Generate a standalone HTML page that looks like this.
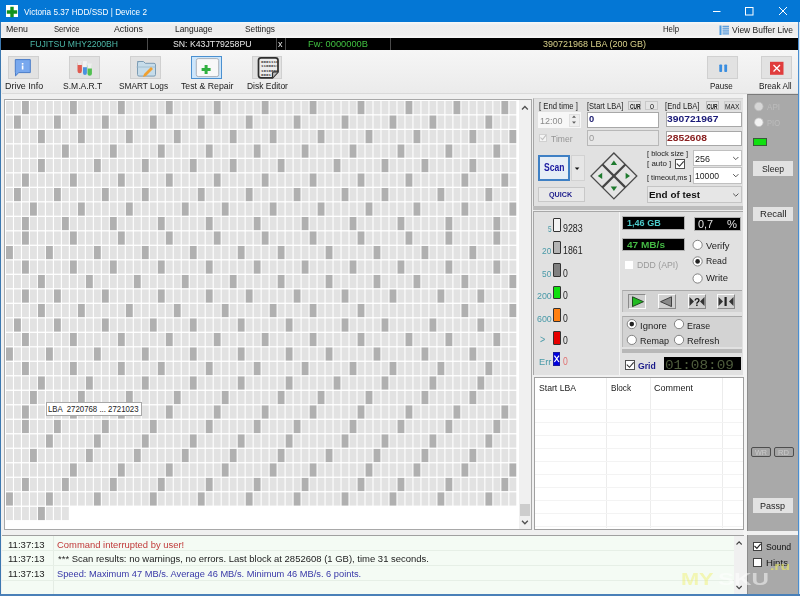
<!DOCTYPE html>
<html><head><meta charset="utf-8"><style>
html,body{margin:0;padding:0;}
body{width:800px;height:596px;overflow:hidden;position:relative;background:#f0f0f0;font-family:"Liberation Sans",sans-serif;}
div{box-sizing:border-box;}
#wrap{position:absolute;left:0;top:0;width:800px;height:596px;overflow:hidden;filter:blur(0.4px);}
</style></head><body><div id="wrap">
<div style="position:absolute;left:0px;top:0px;width:800px;height:22px;background:#0477d5"></div><div style="position:absolute;left:0px;top:22px;width:1.2px;height:574px;background:#3c78b0"></div><div style="position:absolute;left:797.8px;top:22px;width:1px;height:574px;background:#4a8ed0"></div><div style="position:absolute;left:798.8px;top:22px;width:1.2px;height:574px;background:#d4e6f4"></div><div style="position:absolute;left:0px;top:593.8px;width:800px;height:2.2px;background:#4a80b8"></div><svg style="position:absolute;left:0;top:0" width="800" height="22"><rect x="6" y="5" width="12" height="12" fill="#fff"/><path d="M10.3 6.8h3.4v3.5h3.5v3.4h-3.5v3.5h-3.4v-3.5h-3.5v-3.4h3.5z" fill="#12921e"/><line x1="713" y1="11.5" x2="720.5" y2="11.5" stroke="#fff" stroke-width="1"/><rect x="745.5" y="7.5" width="7.5" height="7.5" fill="none" stroke="#fff" stroke-width="1"/><path d="M779 7L787 15M787 7L779 15" stroke="#fff" stroke-width="1"/></svg><div style="position:absolute;left:1.2px;top:22px;width:796.6px;height:15.8px;background:linear-gradient(#f4f8fa,#ededed 20%,#eeeeee 80%,#f8f8f8)"></div><svg style="position:absolute;left:719px;top:25px" width="12" height="11"><rect x="0.5" y="0.5" width="2" height="9.5" fill="#4a9ae0"/><rect x="3.5" y="0.8" width="6.5" height="1" fill="#3a8ad8"/><rect x="3.5" y="2.7" width="6.5" height="1" fill="#3a8ad8"/><rect x="3.5" y="4.6" width="6.5" height="1" fill="#3a8ad8"/><rect x="3.5" y="6.499999999999999" width="6.5" height="1" fill="#3a8ad8"/><rect x="3.5" y="8.4" width="6.5" height="1" fill="#3a8ad8"/></svg><div style="position:absolute;left:1.2px;top:37.8px;width:796.6px;height:11.8px;background:#000"></div><div style="position:absolute;left:146.5px;top:37.8px;width:1.2px;height:11.8px;background:#4a4a4a"></div><div style="position:absolute;left:275.5px;top:37.8px;width:1.2px;height:11.8px;background:#4a4a4a"></div><div style="position:absolute;left:285.0px;top:37.8px;width:1.2px;height:11.8px;background:#4a4a4a"></div><div style="position:absolute;left:389.5px;top:37.8px;width:1.2px;height:11.8px;background:#4a4a4a"></div><div style="position:absolute;left:1.2px;top:49.6px;width:796.6px;height:43.4px;background:linear-gradient(#f6f6f6,#ebebeb)"></div><div style="position:absolute;left:1.6px;top:92.8px;width:796.4px;height:1px;background:#dadada"></div><div style="position:absolute;left:8.2px;top:56.2px;width:30.8px;height:23.3px;background:#e2e2e2;border:1px solid #d0d0d0"></div><div style="position:absolute;left:69px;top:56.2px;width:30.700000000000003px;height:23.3px;background:#e2e2e2;border:1px solid #d0d0d0"></div><div style="position:absolute;left:130.2px;top:56.2px;width:30.80000000000001px;height:23.3px;background:#e2e2e2;border:1px solid #d0d0d0"></div><div style="position:absolute;left:251.7px;top:56.2px;width:30.80000000000001px;height:23.3px;background:#e2e2e2;border:1px solid #d0d0d0"></div><div style="position:absolute;left:707px;top:56.2px;width:31px;height:23.3px;background:#e2e2e2;border:1px solid #d0d0d0"></div><div style="position:absolute;left:761px;top:56.2px;width:30.700000000000045px;height:23.3px;background:#e2e2e2;border:1px solid #d0d0d0"></div><div style="position:absolute;left:191px;top:56.2px;width:30.7px;height:23.3px;background:#cde6fb;border:1px solid #4a90d0"></div><svg style="position:absolute;left:0;top:50px" width="800" height="40"><path d="M15.3 9.6h15v13h-11.5l-3.3 3.3v-3.3h-0.2z" fill="#78a8ee" stroke="#4a7cc8" stroke-width="1"/><rect x="21.8" y="13" width="1.6" height="1.6" fill="#fff"/><rect x="21.8" y="15.5" width="1.6" height="4" fill="#fff"/><rect x="77.5" y="11.4" width="4.4" height="11.8" rx="2.2" fill="#e05a50"/><rect x="83" y="12.6" width="3.9" height="12.4" rx="1.95" fill="#4a92e0"/><rect x="87.5" y="13.9" width="4.4" height="11.8" rx="2.2" fill="#50c050"/><rect x="77.5" y="11" width="4.4" height="4" fill="#e8e8e8"/><rect x="83" y="11.2" width="3.9" height="6" fill="#f2f2f2"/><rect x="87.5" y="13.5" width="4.4" height="5" fill="#eeeeee"/><path d="M137.5 11.5h6l1.8 1.8h8.7a1.5 1.5 0 0 1 1.5 1.5v9.8a1.5 1.5 0 0 1-1.5 1.5h-15a1.5 1.5 0 0 1-1.5-1.5v-11.6a1.5 1.5 0 0 1 1.5-1.5z" fill="#c6dcea" stroke="#7c9cb4" stroke-width="1"/><path d="M136.5 17h19" stroke="#9ab8cc" stroke-width="0.8"/><path d="M144 24l7-7 2 2-7 7-3 1z" fill="#f0a030"/><rect x="196.3" y="8.6" width="22.4" height="18" rx="2" fill="#f8f8f8" stroke="#9aa0a8" stroke-width="0.8"/><path d="M204.6 15h3v3h3v3h-3v3h-3v-3h-3v-3h3z" fill="#30b040"/><path d="M261 7.8h14.5a2.5 2.5 0 0 1 2.5 2.5v11.5l-5.5 6h-11.5a2.5 2.5 0 0 1-2.5-2.5v-15a2.5 2.5 0 0 1 2.5-2.5z" fill="#ececec" stroke="#2e2e2e" stroke-width="1.7"/><path d="M272.5 27.8v-4.5a1.5 1.5 0 0 1 1.5-1.5h4" fill="#bbb" stroke="#2e2e2e" stroke-width="1.2"/><g fill="#3a3a3a" font-family="Liberation Mono" font-size="4.2" font-weight="bold"><text x="261" y="13.2">0001110</text><text x="261" y="17.4">1100011</text><text x="261" y="21.6">1010000</text><text x="261" y="25.8">0001</text></g><rect x="719.3" y="14.5" width="2.8" height="7.5" rx="0.8" fill="#3a8ee0"/><rect x="724.3" y="14.5" width="2.8" height="7.5" rx="0.8" fill="#3a8ee0"/><rect x="770" y="11.8" width="13.5" height="13" fill="#e03c3c"/><path d="M773.5 15l6.5 6.5M780 15l-6.5 6.5" stroke="#fff" stroke-width="1.3"/></svg><div style="position:absolute;left:4px;top:98.5px;width:528.3px;height:431.3px;background:#fff;border:1px solid #a8a8a8"></div><svg style="position:absolute;left:0;top:0" width="800" height="596"><rect x="6.00" y="101.00" width="6.9" height="13.2" fill="#e2e2e2"/><rect x="13.99" y="101.00" width="6.9" height="13.2" fill="#e2e2e2"/><rect x="21.98" y="101.00" width="6.9" height="13.2" fill="#b0b0b0"/><rect x="29.97" y="101.00" width="6.9" height="13.2" fill="#e2e2e2"/><rect x="37.96" y="101.00" width="6.9" height="13.2" fill="#e2e2e2"/><rect x="45.95" y="101.00" width="6.9" height="13.2" fill="#e2e2e2"/><rect x="53.94" y="101.00" width="6.9" height="13.2" fill="#e2e2e2"/><rect x="61.93" y="101.00" width="6.9" height="13.2" fill="#e2e2e2"/><rect x="69.92" y="101.00" width="6.9" height="13.2" fill="#b0b0b0"/><rect x="77.91" y="101.00" width="6.9" height="13.2" fill="#e2e2e2"/><rect x="85.90" y="101.00" width="6.9" height="13.2" fill="#e2e2e2"/><rect x="93.89" y="101.00" width="6.9" height="13.2" fill="#e2e2e2"/><rect x="101.88" y="101.00" width="6.9" height="13.2" fill="#e2e2e2"/><rect x="109.87" y="101.00" width="6.9" height="13.2" fill="#e2e2e2"/><rect x="117.86" y="101.00" width="6.9" height="13.2" fill="#b0b0b0"/><rect x="125.85" y="101.00" width="6.9" height="13.2" fill="#e2e2e2"/><rect x="133.84" y="101.00" width="6.9" height="13.2" fill="#e2e2e2"/><rect x="141.83" y="101.00" width="6.9" height="13.2" fill="#e2e2e2"/><rect x="149.82" y="101.00" width="6.9" height="13.2" fill="#e2e2e2"/><rect x="157.81" y="101.00" width="6.9" height="13.2" fill="#e2e2e2"/><rect x="165.80" y="101.00" width="6.9" height="13.2" fill="#b0b0b0"/><rect x="173.79" y="101.00" width="6.9" height="13.2" fill="#e2e2e2"/><rect x="181.78" y="101.00" width="6.9" height="13.2" fill="#e2e2e2"/><rect x="189.77" y="101.00" width="6.9" height="13.2" fill="#e2e2e2"/><rect x="197.76" y="101.00" width="6.9" height="13.2" fill="#e2e2e2"/><rect x="205.75" y="101.00" width="6.9" height="13.2" fill="#e2e2e2"/><rect x="213.74" y="101.00" width="6.9" height="13.2" fill="#b0b0b0"/><rect x="221.73" y="101.00" width="6.9" height="13.2" fill="#e2e2e2"/><rect x="229.72" y="101.00" width="6.9" height="13.2" fill="#e2e2e2"/><rect x="237.71" y="101.00" width="6.9" height="13.2" fill="#e2e2e2"/><rect x="245.70" y="101.00" width="6.9" height="13.2" fill="#e2e2e2"/><rect x="253.69" y="101.00" width="6.9" height="13.2" fill="#e2e2e2"/><rect x="261.68" y="101.00" width="6.9" height="13.2" fill="#b0b0b0"/><rect x="269.67" y="101.00" width="6.9" height="13.2" fill="#e2e2e2"/><rect x="277.66" y="101.00" width="6.9" height="13.2" fill="#e2e2e2"/><rect x="285.65" y="101.00" width="6.9" height="13.2" fill="#e2e2e2"/><rect x="293.64" y="101.00" width="6.9" height="13.2" fill="#e2e2e2"/><rect x="301.63" y="101.00" width="6.9" height="13.2" fill="#e2e2e2"/><rect x="309.62" y="101.00" width="6.9" height="13.2" fill="#b0b0b0"/><rect x="317.61" y="101.00" width="6.9" height="13.2" fill="#e2e2e2"/><rect x="325.60" y="101.00" width="6.9" height="13.2" fill="#e2e2e2"/><rect x="333.59" y="101.00" width="6.9" height="13.2" fill="#e2e2e2"/><rect x="341.58" y="101.00" width="6.9" height="13.2" fill="#e2e2e2"/><rect x="349.57" y="101.00" width="6.9" height="13.2" fill="#e2e2e2"/><rect x="357.56" y="101.00" width="6.9" height="13.2" fill="#b0b0b0"/><rect x="365.55" y="101.00" width="6.9" height="13.2" fill="#e2e2e2"/><rect x="373.54" y="101.00" width="6.9" height="13.2" fill="#e2e2e2"/><rect x="381.53" y="101.00" width="6.9" height="13.2" fill="#e2e2e2"/><rect x="389.52" y="101.00" width="6.9" height="13.2" fill="#e2e2e2"/><rect x="397.51" y="101.00" width="6.9" height="13.2" fill="#e2e2e2"/><rect x="405.50" y="101.00" width="6.9" height="13.2" fill="#b0b0b0"/><rect x="413.49" y="101.00" width="6.9" height="13.2" fill="#e2e2e2"/><rect x="421.48" y="101.00" width="6.9" height="13.2" fill="#e2e2e2"/><rect x="429.47" y="101.00" width="6.9" height="13.2" fill="#e2e2e2"/><rect x="437.46" y="101.00" width="6.9" height="13.2" fill="#e2e2e2"/><rect x="445.45" y="101.00" width="6.9" height="13.2" fill="#e2e2e2"/><rect x="453.44" y="101.00" width="6.9" height="13.2" fill="#b0b0b0"/><rect x="461.43" y="101.00" width="6.9" height="13.2" fill="#e2e2e2"/><rect x="469.42" y="101.00" width="6.9" height="13.2" fill="#e2e2e2"/><rect x="477.41" y="101.00" width="6.9" height="13.2" fill="#e2e2e2"/><rect x="485.40" y="101.00" width="6.9" height="13.2" fill="#e2e2e2"/><rect x="493.39" y="101.00" width="6.9" height="13.2" fill="#e2e2e2"/><rect x="501.38" y="101.00" width="6.9" height="13.2" fill="#b0b0b0"/><rect x="509.37" y="101.00" width="6.9" height="13.2" fill="#e2e2e2"/><rect x="6.00" y="115.50" width="6.9" height="13.2" fill="#e2e2e2"/><rect x="13.99" y="115.50" width="6.9" height="13.2" fill="#b0b0b0"/><rect x="21.98" y="115.50" width="6.9" height="13.2" fill="#e2e2e2"/><rect x="29.97" y="115.50" width="6.9" height="13.2" fill="#e2e2e2"/><rect x="37.96" y="115.50" width="6.9" height="13.2" fill="#e2e2e2"/><rect x="45.95" y="115.50" width="6.9" height="13.2" fill="#e2e2e2"/><rect x="53.94" y="115.50" width="6.9" height="13.2" fill="#b0b0b0"/><rect x="61.93" y="115.50" width="6.9" height="13.2" fill="#e2e2e2"/><rect x="69.92" y="115.50" width="6.9" height="13.2" fill="#e2e2e2"/><rect x="77.91" y="115.50" width="6.9" height="13.2" fill="#e2e2e2"/><rect x="85.90" y="115.50" width="6.9" height="13.2" fill="#e2e2e2"/><rect x="93.89" y="115.50" width="6.9" height="13.2" fill="#e2e2e2"/><rect x="101.88" y="115.50" width="6.9" height="13.2" fill="#b0b0b0"/><rect x="109.87" y="115.50" width="6.9" height="13.2" fill="#e2e2e2"/><rect x="117.86" y="115.50" width="6.9" height="13.2" fill="#e2e2e2"/><rect x="125.85" y="115.50" width="6.9" height="13.2" fill="#e2e2e2"/><rect x="133.84" y="115.50" width="6.9" height="13.2" fill="#e2e2e2"/><rect x="141.83" y="115.50" width="6.9" height="13.2" fill="#e2e2e2"/><rect x="149.82" y="115.50" width="6.9" height="13.2" fill="#b0b0b0"/><rect x="157.81" y="115.50" width="6.9" height="13.2" fill="#e2e2e2"/><rect x="165.80" y="115.50" width="6.9" height="13.2" fill="#e2e2e2"/><rect x="173.79" y="115.50" width="6.9" height="13.2" fill="#e2e2e2"/><rect x="181.78" y="115.50" width="6.9" height="13.2" fill="#e2e2e2"/><rect x="189.77" y="115.50" width="6.9" height="13.2" fill="#e2e2e2"/><rect x="197.76" y="115.50" width="6.9" height="13.2" fill="#b0b0b0"/><rect x="205.75" y="115.50" width="6.9" height="13.2" fill="#e2e2e2"/><rect x="213.74" y="115.50" width="6.9" height="13.2" fill="#e2e2e2"/><rect x="221.73" y="115.50" width="6.9" height="13.2" fill="#e2e2e2"/><rect x="229.72" y="115.50" width="6.9" height="13.2" fill="#e2e2e2"/><rect x="237.71" y="115.50" width="6.9" height="13.2" fill="#e2e2e2"/><rect x="245.70" y="115.50" width="6.9" height="13.2" fill="#b0b0b0"/><rect x="253.69" y="115.50" width="6.9" height="13.2" fill="#e2e2e2"/><rect x="261.68" y="115.50" width="6.9" height="13.2" fill="#e2e2e2"/><rect x="269.67" y="115.50" width="6.9" height="13.2" fill="#e2e2e2"/><rect x="277.66" y="115.50" width="6.9" height="13.2" fill="#e2e2e2"/><rect x="285.65" y="115.50" width="6.9" height="13.2" fill="#e2e2e2"/><rect x="293.64" y="115.50" width="6.9" height="13.2" fill="#b0b0b0"/><rect x="301.63" y="115.50" width="6.9" height="13.2" fill="#e2e2e2"/><rect x="309.62" y="115.50" width="6.9" height="13.2" fill="#e2e2e2"/><rect x="317.61" y="115.50" width="6.9" height="13.2" fill="#e2e2e2"/><rect x="325.60" y="115.50" width="6.9" height="13.2" fill="#e2e2e2"/><rect x="333.59" y="115.50" width="6.9" height="13.2" fill="#e2e2e2"/><rect x="341.58" y="115.50" width="6.9" height="13.2" fill="#b0b0b0"/><rect x="349.57" y="115.50" width="6.9" height="13.2" fill="#e2e2e2"/><rect x="357.56" y="115.50" width="6.9" height="13.2" fill="#e2e2e2"/><rect x="365.55" y="115.50" width="6.9" height="13.2" fill="#e2e2e2"/><rect x="373.54" y="115.50" width="6.9" height="13.2" fill="#e2e2e2"/><rect x="381.53" y="115.50" width="6.9" height="13.2" fill="#e2e2e2"/><rect x="389.52" y="115.50" width="6.9" height="13.2" fill="#b0b0b0"/><rect x="397.51" y="115.50" width="6.9" height="13.2" fill="#e2e2e2"/><rect x="405.50" y="115.50" width="6.9" height="13.2" fill="#e2e2e2"/><rect x="413.49" y="115.50" width="6.9" height="13.2" fill="#e2e2e2"/><rect x="421.48" y="115.50" width="6.9" height="13.2" fill="#e2e2e2"/><rect x="429.47" y="115.50" width="6.9" height="13.2" fill="#b0b0b0"/><rect x="437.46" y="115.50" width="6.9" height="13.2" fill="#e2e2e2"/><rect x="445.45" y="115.50" width="6.9" height="13.2" fill="#e2e2e2"/><rect x="453.44" y="115.50" width="6.9" height="13.2" fill="#e2e2e2"/><rect x="461.43" y="115.50" width="6.9" height="13.2" fill="#e2e2e2"/><rect x="469.42" y="115.50" width="6.9" height="13.2" fill="#e2e2e2"/><rect x="477.41" y="115.50" width="6.9" height="13.2" fill="#e2e2e2"/><rect x="485.40" y="115.50" width="6.9" height="13.2" fill="#b0b0b0"/><rect x="493.39" y="115.50" width="6.9" height="13.2" fill="#e2e2e2"/><rect x="501.38" y="115.50" width="6.9" height="13.2" fill="#e2e2e2"/><rect x="509.37" y="115.50" width="6.9" height="13.2" fill="#e2e2e2"/><rect x="6.00" y="129.99" width="6.9" height="13.2" fill="#e2e2e2"/><rect x="13.99" y="129.99" width="6.9" height="13.2" fill="#e2e2e2"/><rect x="21.98" y="129.99" width="6.9" height="13.2" fill="#e2e2e2"/><rect x="29.97" y="129.99" width="6.9" height="13.2" fill="#e2e2e2"/><rect x="37.96" y="129.99" width="6.9" height="13.2" fill="#b0b0b0"/><rect x="45.95" y="129.99" width="6.9" height="13.2" fill="#e2e2e2"/><rect x="53.94" y="129.99" width="6.9" height="13.2" fill="#e2e2e2"/><rect x="61.93" y="129.99" width="6.9" height="13.2" fill="#e2e2e2"/><rect x="69.92" y="129.99" width="6.9" height="13.2" fill="#e2e2e2"/><rect x="77.91" y="129.99" width="6.9" height="13.2" fill="#b0b0b0"/><rect x="85.90" y="129.99" width="6.9" height="13.2" fill="#e2e2e2"/><rect x="93.89" y="129.99" width="6.9" height="13.2" fill="#e2e2e2"/><rect x="101.88" y="129.99" width="6.9" height="13.2" fill="#e2e2e2"/><rect x="109.87" y="129.99" width="6.9" height="13.2" fill="#e2e2e2"/><rect x="117.86" y="129.99" width="6.9" height="13.2" fill="#e2e2e2"/><rect x="125.85" y="129.99" width="6.9" height="13.2" fill="#b0b0b0"/><rect x="133.84" y="129.99" width="6.9" height="13.2" fill="#e2e2e2"/><rect x="141.83" y="129.99" width="6.9" height="13.2" fill="#e2e2e2"/><rect x="149.82" y="129.99" width="6.9" height="13.2" fill="#e2e2e2"/><rect x="157.81" y="129.99" width="6.9" height="13.2" fill="#e2e2e2"/><rect x="165.80" y="129.99" width="6.9" height="13.2" fill="#e2e2e2"/><rect x="173.79" y="129.99" width="6.9" height="13.2" fill="#b0b0b0"/><rect x="181.78" y="129.99" width="6.9" height="13.2" fill="#e2e2e2"/><rect x="189.77" y="129.99" width="6.9" height="13.2" fill="#e2e2e2"/><rect x="197.76" y="129.99" width="6.9" height="13.2" fill="#e2e2e2"/><rect x="205.75" y="129.99" width="6.9" height="13.2" fill="#e2e2e2"/><rect x="213.74" y="129.99" width="6.9" height="13.2" fill="#e2e2e2"/><rect x="221.73" y="129.99" width="6.9" height="13.2" fill="#e2e2e2"/><rect x="229.72" y="129.99" width="6.9" height="13.2" fill="#b0b0b0"/><rect x="237.71" y="129.99" width="6.9" height="13.2" fill="#e2e2e2"/><rect x="245.70" y="129.99" width="6.9" height="13.2" fill="#e2e2e2"/><rect x="253.69" y="129.99" width="6.9" height="13.2" fill="#e2e2e2"/><rect x="261.68" y="129.99" width="6.9" height="13.2" fill="#e2e2e2"/><rect x="269.67" y="129.99" width="6.9" height="13.2" fill="#b0b0b0"/><rect x="277.66" y="129.99" width="6.9" height="13.2" fill="#e2e2e2"/><rect x="285.65" y="129.99" width="6.9" height="13.2" fill="#e2e2e2"/><rect x="293.64" y="129.99" width="6.9" height="13.2" fill="#e2e2e2"/><rect x="301.63" y="129.99" width="6.9" height="13.2" fill="#e2e2e2"/><rect x="309.62" y="129.99" width="6.9" height="13.2" fill="#e2e2e2"/><rect x="317.61" y="129.99" width="6.9" height="13.2" fill="#b0b0b0"/><rect x="325.60" y="129.99" width="6.9" height="13.2" fill="#e2e2e2"/><rect x="333.59" y="129.99" width="6.9" height="13.2" fill="#e2e2e2"/><rect x="341.58" y="129.99" width="6.9" height="13.2" fill="#e2e2e2"/><rect x="349.57" y="129.99" width="6.9" height="13.2" fill="#e2e2e2"/><rect x="357.56" y="129.99" width="6.9" height="13.2" fill="#e2e2e2"/><rect x="365.55" y="129.99" width="6.9" height="13.2" fill="#b0b0b0"/><rect x="373.54" y="129.99" width="6.9" height="13.2" fill="#e2e2e2"/><rect x="381.53" y="129.99" width="6.9" height="13.2" fill="#e2e2e2"/><rect x="389.52" y="129.99" width="6.9" height="13.2" fill="#e2e2e2"/><rect x="397.51" y="129.99" width="6.9" height="13.2" fill="#e2e2e2"/><rect x="405.50" y="129.99" width="6.9" height="13.2" fill="#e2e2e2"/><rect x="413.49" y="129.99" width="6.9" height="13.2" fill="#b0b0b0"/><rect x="421.48" y="129.99" width="6.9" height="13.2" fill="#e2e2e2"/><rect x="429.47" y="129.99" width="6.9" height="13.2" fill="#e2e2e2"/><rect x="437.46" y="129.99" width="6.9" height="13.2" fill="#e2e2e2"/><rect x="445.45" y="129.99" width="6.9" height="13.2" fill="#e2e2e2"/><rect x="453.44" y="129.99" width="6.9" height="13.2" fill="#e2e2e2"/><rect x="461.43" y="129.99" width="6.9" height="13.2" fill="#e2e2e2"/><rect x="469.42" y="129.99" width="6.9" height="13.2" fill="#b0b0b0"/><rect x="477.41" y="129.99" width="6.9" height="13.2" fill="#e2e2e2"/><rect x="485.40" y="129.99" width="6.9" height="13.2" fill="#e2e2e2"/><rect x="493.39" y="129.99" width="6.9" height="13.2" fill="#e2e2e2"/><rect x="501.38" y="129.99" width="6.9" height="13.2" fill="#e2e2e2"/><rect x="509.37" y="129.99" width="6.9" height="13.2" fill="#b0b0b0"/><rect x="6.00" y="144.49" width="6.9" height="13.2" fill="#e2e2e2"/><rect x="13.99" y="144.49" width="6.9" height="13.2" fill="#e2e2e2"/><rect x="21.98" y="144.49" width="6.9" height="13.2" fill="#e2e2e2"/><rect x="29.97" y="144.49" width="6.9" height="13.2" fill="#e2e2e2"/><rect x="37.96" y="144.49" width="6.9" height="13.2" fill="#e2e2e2"/><rect x="45.95" y="144.49" width="6.9" height="13.2" fill="#e2e2e2"/><rect x="53.94" y="144.49" width="6.9" height="13.2" fill="#e2e2e2"/><rect x="61.93" y="144.49" width="6.9" height="13.2" fill="#b0b0b0"/><rect x="69.92" y="144.49" width="6.9" height="13.2" fill="#e2e2e2"/><rect x="77.91" y="144.49" width="6.9" height="13.2" fill="#e2e2e2"/><rect x="85.90" y="144.49" width="6.9" height="13.2" fill="#e2e2e2"/><rect x="93.89" y="144.49" width="6.9" height="13.2" fill="#e2e2e2"/><rect x="101.88" y="144.49" width="6.9" height="13.2" fill="#e2e2e2"/><rect x="109.87" y="144.49" width="6.9" height="13.2" fill="#b0b0b0"/><rect x="117.86" y="144.49" width="6.9" height="13.2" fill="#e2e2e2"/><rect x="125.85" y="144.49" width="6.9" height="13.2" fill="#e2e2e2"/><rect x="133.84" y="144.49" width="6.9" height="13.2" fill="#e2e2e2"/><rect x="141.83" y="144.49" width="6.9" height="13.2" fill="#e2e2e2"/><rect x="149.82" y="144.49" width="6.9" height="13.2" fill="#e2e2e2"/><rect x="157.81" y="144.49" width="6.9" height="13.2" fill="#b0b0b0"/><rect x="165.80" y="144.49" width="6.9" height="13.2" fill="#e2e2e2"/><rect x="173.79" y="144.49" width="6.9" height="13.2" fill="#e2e2e2"/><rect x="181.78" y="144.49" width="6.9" height="13.2" fill="#e2e2e2"/><rect x="189.77" y="144.49" width="6.9" height="13.2" fill="#e2e2e2"/><rect x="197.76" y="144.49" width="6.9" height="13.2" fill="#e2e2e2"/><rect x="205.75" y="144.49" width="6.9" height="13.2" fill="#b0b0b0"/><rect x="213.74" y="144.49" width="6.9" height="13.2" fill="#e2e2e2"/><rect x="221.73" y="144.49" width="6.9" height="13.2" fill="#e2e2e2"/><rect x="229.72" y="144.49" width="6.9" height="13.2" fill="#e2e2e2"/><rect x="237.71" y="144.49" width="6.9" height="13.2" fill="#e2e2e2"/><rect x="245.70" y="144.49" width="6.9" height="13.2" fill="#e2e2e2"/><rect x="253.69" y="144.49" width="6.9" height="13.2" fill="#b0b0b0"/><rect x="261.68" y="144.49" width="6.9" height="13.2" fill="#e2e2e2"/><rect x="269.67" y="144.49" width="6.9" height="13.2" fill="#e2e2e2"/><rect x="277.66" y="144.49" width="6.9" height="13.2" fill="#e2e2e2"/><rect x="285.65" y="144.49" width="6.9" height="13.2" fill="#e2e2e2"/><rect x="293.64" y="144.49" width="6.9" height="13.2" fill="#e2e2e2"/><rect x="301.63" y="144.49" width="6.9" height="13.2" fill="#b0b0b0"/><rect x="309.62" y="144.49" width="6.9" height="13.2" fill="#e2e2e2"/><rect x="317.61" y="144.49" width="6.9" height="13.2" fill="#e2e2e2"/><rect x="325.60" y="144.49" width="6.9" height="13.2" fill="#e2e2e2"/><rect x="333.59" y="144.49" width="6.9" height="13.2" fill="#e2e2e2"/><rect x="341.58" y="144.49" width="6.9" height="13.2" fill="#e2e2e2"/><rect x="349.57" y="144.49" width="6.9" height="13.2" fill="#b0b0b0"/><rect x="357.56" y="144.49" width="6.9" height="13.2" fill="#e2e2e2"/><rect x="365.55" y="144.49" width="6.9" height="13.2" fill="#e2e2e2"/><rect x="373.54" y="144.49" width="6.9" height="13.2" fill="#e2e2e2"/><rect x="381.53" y="144.49" width="6.9" height="13.2" fill="#e2e2e2"/><rect x="389.52" y="144.49" width="6.9" height="13.2" fill="#e2e2e2"/><rect x="397.51" y="144.49" width="6.9" height="13.2" fill="#b0b0b0"/><rect x="405.50" y="144.49" width="6.9" height="13.2" fill="#e2e2e2"/><rect x="413.49" y="144.49" width="6.9" height="13.2" fill="#e2e2e2"/><rect x="421.48" y="144.49" width="6.9" height="13.2" fill="#e2e2e2"/><rect x="429.47" y="144.49" width="6.9" height="13.2" fill="#e2e2e2"/><rect x="437.46" y="144.49" width="6.9" height="13.2" fill="#e2e2e2"/><rect x="445.45" y="144.49" width="6.9" height="13.2" fill="#b0b0b0"/><rect x="453.44" y="144.49" width="6.9" height="13.2" fill="#e2e2e2"/><rect x="461.43" y="144.49" width="6.9" height="13.2" fill="#e2e2e2"/><rect x="469.42" y="144.49" width="6.9" height="13.2" fill="#e2e2e2"/><rect x="477.41" y="144.49" width="6.9" height="13.2" fill="#e2e2e2"/><rect x="485.40" y="144.49" width="6.9" height="13.2" fill="#e2e2e2"/><rect x="493.39" y="144.49" width="6.9" height="13.2" fill="#b0b0b0"/><rect x="501.38" y="144.49" width="6.9" height="13.2" fill="#e2e2e2"/><rect x="509.37" y="144.49" width="6.9" height="13.2" fill="#e2e2e2"/><rect x="6.00" y="158.98" width="6.9" height="13.2" fill="#e2e2e2"/><rect x="13.99" y="158.98" width="6.9" height="13.2" fill="#e2e2e2"/><rect x="21.98" y="158.98" width="6.9" height="13.2" fill="#e2e2e2"/><rect x="29.97" y="158.98" width="6.9" height="13.2" fill="#e2e2e2"/><rect x="37.96" y="158.98" width="6.9" height="13.2" fill="#b0b0b0"/><rect x="45.95" y="158.98" width="6.9" height="13.2" fill="#e2e2e2"/><rect x="53.94" y="158.98" width="6.9" height="13.2" fill="#e2e2e2"/><rect x="61.93" y="158.98" width="6.9" height="13.2" fill="#e2e2e2"/><rect x="69.92" y="158.98" width="6.9" height="13.2" fill="#e2e2e2"/><rect x="77.91" y="158.98" width="6.9" height="13.2" fill="#e2e2e2"/><rect x="85.90" y="158.98" width="6.9" height="13.2" fill="#e2e2e2"/><rect x="93.89" y="158.98" width="6.9" height="13.2" fill="#b0b0b0"/><rect x="101.88" y="158.98" width="6.9" height="13.2" fill="#e2e2e2"/><rect x="109.87" y="158.98" width="6.9" height="13.2" fill="#e2e2e2"/><rect x="117.86" y="158.98" width="6.9" height="13.2" fill="#e2e2e2"/><rect x="125.85" y="158.98" width="6.9" height="13.2" fill="#e2e2e2"/><rect x="133.84" y="158.98" width="6.9" height="13.2" fill="#e2e2e2"/><rect x="141.83" y="158.98" width="6.9" height="13.2" fill="#b0b0b0"/><rect x="149.82" y="158.98" width="6.9" height="13.2" fill="#e2e2e2"/><rect x="157.81" y="158.98" width="6.9" height="13.2" fill="#e2e2e2"/><rect x="165.80" y="158.98" width="6.9" height="13.2" fill="#e2e2e2"/><rect x="173.79" y="158.98" width="6.9" height="13.2" fill="#e2e2e2"/><rect x="181.78" y="158.98" width="6.9" height="13.2" fill="#e2e2e2"/><rect x="189.77" y="158.98" width="6.9" height="13.2" fill="#b0b0b0"/><rect x="197.76" y="158.98" width="6.9" height="13.2" fill="#e2e2e2"/><rect x="205.75" y="158.98" width="6.9" height="13.2" fill="#e2e2e2"/><rect x="213.74" y="158.98" width="6.9" height="13.2" fill="#e2e2e2"/><rect x="221.73" y="158.98" width="6.9" height="13.2" fill="#e2e2e2"/><rect x="229.72" y="158.98" width="6.9" height="13.2" fill="#b0b0b0"/><rect x="237.71" y="158.98" width="6.9" height="13.2" fill="#e2e2e2"/><rect x="245.70" y="158.98" width="6.9" height="13.2" fill="#e2e2e2"/><rect x="253.69" y="158.98" width="6.9" height="13.2" fill="#e2e2e2"/><rect x="261.68" y="158.98" width="6.9" height="13.2" fill="#e2e2e2"/><rect x="269.67" y="158.98" width="6.9" height="13.2" fill="#e2e2e2"/><rect x="277.66" y="158.98" width="6.9" height="13.2" fill="#b0b0b0"/><rect x="285.65" y="158.98" width="6.9" height="13.2" fill="#e2e2e2"/><rect x="293.64" y="158.98" width="6.9" height="13.2" fill="#e2e2e2"/><rect x="301.63" y="158.98" width="6.9" height="13.2" fill="#e2e2e2"/><rect x="309.62" y="158.98" width="6.9" height="13.2" fill="#e2e2e2"/><rect x="317.61" y="158.98" width="6.9" height="13.2" fill="#e2e2e2"/><rect x="325.60" y="158.98" width="6.9" height="13.2" fill="#e2e2e2"/><rect x="333.59" y="158.98" width="6.9" height="13.2" fill="#b0b0b0"/><rect x="341.58" y="158.98" width="6.9" height="13.2" fill="#e2e2e2"/><rect x="349.57" y="158.98" width="6.9" height="13.2" fill="#e2e2e2"/><rect x="357.56" y="158.98" width="6.9" height="13.2" fill="#e2e2e2"/><rect x="365.55" y="158.98" width="6.9" height="13.2" fill="#e2e2e2"/><rect x="373.54" y="158.98" width="6.9" height="13.2" fill="#e2e2e2"/><rect x="381.53" y="158.98" width="6.9" height="13.2" fill="#b0b0b0"/><rect x="389.52" y="158.98" width="6.9" height="13.2" fill="#e2e2e2"/><rect x="397.51" y="158.98" width="6.9" height="13.2" fill="#e2e2e2"/><rect x="405.50" y="158.98" width="6.9" height="13.2" fill="#e2e2e2"/><rect x="413.49" y="158.98" width="6.9" height="13.2" fill="#e2e2e2"/><rect x="421.48" y="158.98" width="6.9" height="13.2" fill="#b0b0b0"/><rect x="429.47" y="158.98" width="6.9" height="13.2" fill="#e2e2e2"/><rect x="437.46" y="158.98" width="6.9" height="13.2" fill="#e2e2e2"/><rect x="445.45" y="158.98" width="6.9" height="13.2" fill="#e2e2e2"/><rect x="453.44" y="158.98" width="6.9" height="13.2" fill="#e2e2e2"/><rect x="461.43" y="158.98" width="6.9" height="13.2" fill="#e2e2e2"/><rect x="469.42" y="158.98" width="6.9" height="13.2" fill="#b0b0b0"/><rect x="477.41" y="158.98" width="6.9" height="13.2" fill="#e2e2e2"/><rect x="485.40" y="158.98" width="6.9" height="13.2" fill="#e2e2e2"/><rect x="493.39" y="158.98" width="6.9" height="13.2" fill="#e2e2e2"/><rect x="501.38" y="158.98" width="6.9" height="13.2" fill="#e2e2e2"/><rect x="509.37" y="158.98" width="6.9" height="13.2" fill="#e2e2e2"/><rect x="6.00" y="173.48" width="6.9" height="13.2" fill="#e2e2e2"/><rect x="13.99" y="173.48" width="6.9" height="13.2" fill="#e2e2e2"/><rect x="21.98" y="173.48" width="6.9" height="13.2" fill="#b0b0b0"/><rect x="29.97" y="173.48" width="6.9" height="13.2" fill="#e2e2e2"/><rect x="37.96" y="173.48" width="6.9" height="13.2" fill="#e2e2e2"/><rect x="45.95" y="173.48" width="6.9" height="13.2" fill="#e2e2e2"/><rect x="53.94" y="173.48" width="6.9" height="13.2" fill="#e2e2e2"/><rect x="61.93" y="173.48" width="6.9" height="13.2" fill="#e2e2e2"/><rect x="69.92" y="173.48" width="6.9" height="13.2" fill="#b0b0b0"/><rect x="77.91" y="173.48" width="6.9" height="13.2" fill="#e2e2e2"/><rect x="85.90" y="173.48" width="6.9" height="13.2" fill="#e2e2e2"/><rect x="93.89" y="173.48" width="6.9" height="13.2" fill="#e2e2e2"/><rect x="101.88" y="173.48" width="6.9" height="13.2" fill="#e2e2e2"/><rect x="109.87" y="173.48" width="6.9" height="13.2" fill="#e2e2e2"/><rect x="117.86" y="173.48" width="6.9" height="13.2" fill="#b0b0b0"/><rect x="125.85" y="173.48" width="6.9" height="13.2" fill="#e2e2e2"/><rect x="133.84" y="173.48" width="6.9" height="13.2" fill="#e2e2e2"/><rect x="141.83" y="173.48" width="6.9" height="13.2" fill="#e2e2e2"/><rect x="149.82" y="173.48" width="6.9" height="13.2" fill="#e2e2e2"/><rect x="157.81" y="173.48" width="6.9" height="13.2" fill="#e2e2e2"/><rect x="165.80" y="173.48" width="6.9" height="13.2" fill="#b0b0b0"/><rect x="173.79" y="173.48" width="6.9" height="13.2" fill="#e2e2e2"/><rect x="181.78" y="173.48" width="6.9" height="13.2" fill="#e2e2e2"/><rect x="189.77" y="173.48" width="6.9" height="13.2" fill="#e2e2e2"/><rect x="197.76" y="173.48" width="6.9" height="13.2" fill="#e2e2e2"/><rect x="205.75" y="173.48" width="6.9" height="13.2" fill="#e2e2e2"/><rect x="213.74" y="173.48" width="6.9" height="13.2" fill="#b0b0b0"/><rect x="221.73" y="173.48" width="6.9" height="13.2" fill="#e2e2e2"/><rect x="229.72" y="173.48" width="6.9" height="13.2" fill="#e2e2e2"/><rect x="237.71" y="173.48" width="6.9" height="13.2" fill="#e2e2e2"/><rect x="245.70" y="173.48" width="6.9" height="13.2" fill="#e2e2e2"/><rect x="253.69" y="173.48" width="6.9" height="13.2" fill="#e2e2e2"/><rect x="261.68" y="173.48" width="6.9" height="13.2" fill="#b0b0b0"/><rect x="269.67" y="173.48" width="6.9" height="13.2" fill="#e2e2e2"/><rect x="277.66" y="173.48" width="6.9" height="13.2" fill="#e2e2e2"/><rect x="285.65" y="173.48" width="6.9" height="13.2" fill="#e2e2e2"/><rect x="293.64" y="173.48" width="6.9" height="13.2" fill="#e2e2e2"/><rect x="301.63" y="173.48" width="6.9" height="13.2" fill="#e2e2e2"/><rect x="309.62" y="173.48" width="6.9" height="13.2" fill="#b0b0b0"/><rect x="317.61" y="173.48" width="6.9" height="13.2" fill="#e2e2e2"/><rect x="325.60" y="173.48" width="6.9" height="13.2" fill="#e2e2e2"/><rect x="333.59" y="173.48" width="6.9" height="13.2" fill="#e2e2e2"/><rect x="341.58" y="173.48" width="6.9" height="13.2" fill="#e2e2e2"/><rect x="349.57" y="173.48" width="6.9" height="13.2" fill="#e2e2e2"/><rect x="357.56" y="173.48" width="6.9" height="13.2" fill="#b0b0b0"/><rect x="365.55" y="173.48" width="6.9" height="13.2" fill="#e2e2e2"/><rect x="373.54" y="173.48" width="6.9" height="13.2" fill="#e2e2e2"/><rect x="381.53" y="173.48" width="6.9" height="13.2" fill="#e2e2e2"/><rect x="389.52" y="173.48" width="6.9" height="13.2" fill="#e2e2e2"/><rect x="397.51" y="173.48" width="6.9" height="13.2" fill="#e2e2e2"/><rect x="405.50" y="173.48" width="6.9" height="13.2" fill="#b0b0b0"/><rect x="413.49" y="173.48" width="6.9" height="13.2" fill="#e2e2e2"/><rect x="421.48" y="173.48" width="6.9" height="13.2" fill="#e2e2e2"/><rect x="429.47" y="173.48" width="6.9" height="13.2" fill="#e2e2e2"/><rect x="437.46" y="173.48" width="6.9" height="13.2" fill="#e2e2e2"/><rect x="445.45" y="173.48" width="6.9" height="13.2" fill="#e2e2e2"/><rect x="453.44" y="173.48" width="6.9" height="13.2" fill="#e2e2e2"/><rect x="461.43" y="173.48" width="6.9" height="13.2" fill="#b0b0b0"/><rect x="469.42" y="173.48" width="6.9" height="13.2" fill="#e2e2e2"/><rect x="477.41" y="173.48" width="6.9" height="13.2" fill="#e2e2e2"/><rect x="485.40" y="173.48" width="6.9" height="13.2" fill="#e2e2e2"/><rect x="493.39" y="173.48" width="6.9" height="13.2" fill="#e2e2e2"/><rect x="501.38" y="173.48" width="6.9" height="13.2" fill="#b0b0b0"/><rect x="509.37" y="173.48" width="6.9" height="13.2" fill="#e2e2e2"/><rect x="6.00" y="187.98" width="6.9" height="13.2" fill="#e2e2e2"/><rect x="13.99" y="187.98" width="6.9" height="13.2" fill="#b0b0b0"/><rect x="21.98" y="187.98" width="6.9" height="13.2" fill="#e2e2e2"/><rect x="29.97" y="187.98" width="6.9" height="13.2" fill="#e2e2e2"/><rect x="37.96" y="187.98" width="6.9" height="13.2" fill="#e2e2e2"/><rect x="45.95" y="187.98" width="6.9" height="13.2" fill="#e2e2e2"/><rect x="53.94" y="187.98" width="6.9" height="13.2" fill="#b0b0b0"/><rect x="61.93" y="187.98" width="6.9" height="13.2" fill="#e2e2e2"/><rect x="69.92" y="187.98" width="6.9" height="13.2" fill="#e2e2e2"/><rect x="77.91" y="187.98" width="6.9" height="13.2" fill="#e2e2e2"/><rect x="85.90" y="187.98" width="6.9" height="13.2" fill="#e2e2e2"/><rect x="93.89" y="187.98" width="6.9" height="13.2" fill="#e2e2e2"/><rect x="101.88" y="187.98" width="6.9" height="13.2" fill="#b0b0b0"/><rect x="109.87" y="187.98" width="6.9" height="13.2" fill="#e2e2e2"/><rect x="117.86" y="187.98" width="6.9" height="13.2" fill="#e2e2e2"/><rect x="125.85" y="187.98" width="6.9" height="13.2" fill="#e2e2e2"/><rect x="133.84" y="187.98" width="6.9" height="13.2" fill="#e2e2e2"/><rect x="141.83" y="187.98" width="6.9" height="13.2" fill="#b0b0b0"/><rect x="149.82" y="187.98" width="6.9" height="13.2" fill="#e2e2e2"/><rect x="157.81" y="187.98" width="6.9" height="13.2" fill="#e2e2e2"/><rect x="165.80" y="187.98" width="6.9" height="13.2" fill="#e2e2e2"/><rect x="173.79" y="187.98" width="6.9" height="13.2" fill="#e2e2e2"/><rect x="181.78" y="187.98" width="6.9" height="13.2" fill="#e2e2e2"/><rect x="189.77" y="187.98" width="6.9" height="13.2" fill="#e2e2e2"/><rect x="197.76" y="187.98" width="6.9" height="13.2" fill="#b0b0b0"/><rect x="205.75" y="187.98" width="6.9" height="13.2" fill="#e2e2e2"/><rect x="213.74" y="187.98" width="6.9" height="13.2" fill="#e2e2e2"/><rect x="221.73" y="187.98" width="6.9" height="13.2" fill="#e2e2e2"/><rect x="229.72" y="187.98" width="6.9" height="13.2" fill="#e2e2e2"/><rect x="237.71" y="187.98" width="6.9" height="13.2" fill="#e2e2e2"/><rect x="245.70" y="187.98" width="6.9" height="13.2" fill="#b0b0b0"/><rect x="253.69" y="187.98" width="6.9" height="13.2" fill="#e2e2e2"/><rect x="261.68" y="187.98" width="6.9" height="13.2" fill="#e2e2e2"/><rect x="269.67" y="187.98" width="6.9" height="13.2" fill="#e2e2e2"/><rect x="277.66" y="187.98" width="6.9" height="13.2" fill="#e2e2e2"/><rect x="285.65" y="187.98" width="6.9" height="13.2" fill="#e2e2e2"/><rect x="293.64" y="187.98" width="6.9" height="13.2" fill="#b0b0b0"/><rect x="301.63" y="187.98" width="6.9" height="13.2" fill="#e2e2e2"/><rect x="309.62" y="187.98" width="6.9" height="13.2" fill="#e2e2e2"/><rect x="317.61" y="187.98" width="6.9" height="13.2" fill="#e2e2e2"/><rect x="325.60" y="187.98" width="6.9" height="13.2" fill="#e2e2e2"/><rect x="333.59" y="187.98" width="6.9" height="13.2" fill="#e2e2e2"/><rect x="341.58" y="187.98" width="6.9" height="13.2" fill="#b0b0b0"/><rect x="349.57" y="187.98" width="6.9" height="13.2" fill="#e2e2e2"/><rect x="357.56" y="187.98" width="6.9" height="13.2" fill="#e2e2e2"/><rect x="365.55" y="187.98" width="6.9" height="13.2" fill="#e2e2e2"/><rect x="373.54" y="187.98" width="6.9" height="13.2" fill="#e2e2e2"/><rect x="381.53" y="187.98" width="6.9" height="13.2" fill="#b0b0b0"/><rect x="389.52" y="187.98" width="6.9" height="13.2" fill="#e2e2e2"/><rect x="397.51" y="187.98" width="6.9" height="13.2" fill="#e2e2e2"/><rect x="405.50" y="187.98" width="6.9" height="13.2" fill="#e2e2e2"/><rect x="413.49" y="187.98" width="6.9" height="13.2" fill="#e2e2e2"/><rect x="421.48" y="187.98" width="6.9" height="13.2" fill="#e2e2e2"/><rect x="429.47" y="187.98" width="6.9" height="13.2" fill="#e2e2e2"/><rect x="437.46" y="187.98" width="6.9" height="13.2" fill="#b0b0b0"/><rect x="445.45" y="187.98" width="6.9" height="13.2" fill="#e2e2e2"/><rect x="453.44" y="187.98" width="6.9" height="13.2" fill="#e2e2e2"/><rect x="461.43" y="187.98" width="6.9" height="13.2" fill="#e2e2e2"/><rect x="469.42" y="187.98" width="6.9" height="13.2" fill="#e2e2e2"/><rect x="477.41" y="187.98" width="6.9" height="13.2" fill="#e2e2e2"/><rect x="485.40" y="187.98" width="6.9" height="13.2" fill="#b0b0b0"/><rect x="493.39" y="187.98" width="6.9" height="13.2" fill="#e2e2e2"/><rect x="501.38" y="187.98" width="6.9" height="13.2" fill="#e2e2e2"/><rect x="509.37" y="187.98" width="6.9" height="13.2" fill="#e2e2e2"/><rect x="6.00" y="202.47" width="6.9" height="13.2" fill="#e2e2e2"/><rect x="13.99" y="202.47" width="6.9" height="13.2" fill="#e2e2e2"/><rect x="21.98" y="202.47" width="6.9" height="13.2" fill="#e2e2e2"/><rect x="29.97" y="202.47" width="6.9" height="13.2" fill="#b0b0b0"/><rect x="37.96" y="202.47" width="6.9" height="13.2" fill="#e2e2e2"/><rect x="45.95" y="202.47" width="6.9" height="13.2" fill="#e2e2e2"/><rect x="53.94" y="202.47" width="6.9" height="13.2" fill="#e2e2e2"/><rect x="61.93" y="202.47" width="6.9" height="13.2" fill="#e2e2e2"/><rect x="69.92" y="202.47" width="6.9" height="13.2" fill="#e2e2e2"/><rect x="77.91" y="202.47" width="6.9" height="13.2" fill="#b0b0b0"/><rect x="85.90" y="202.47" width="6.9" height="13.2" fill="#e2e2e2"/><rect x="93.89" y="202.47" width="6.9" height="13.2" fill="#e2e2e2"/><rect x="101.88" y="202.47" width="6.9" height="13.2" fill="#e2e2e2"/><rect x="109.87" y="202.47" width="6.9" height="13.2" fill="#e2e2e2"/><rect x="117.86" y="202.47" width="6.9" height="13.2" fill="#e2e2e2"/><rect x="125.85" y="202.47" width="6.9" height="13.2" fill="#b0b0b0"/><rect x="133.84" y="202.47" width="6.9" height="13.2" fill="#e2e2e2"/><rect x="141.83" y="202.47" width="6.9" height="13.2" fill="#e2e2e2"/><rect x="149.82" y="202.47" width="6.9" height="13.2" fill="#e2e2e2"/><rect x="157.81" y="202.47" width="6.9" height="13.2" fill="#e2e2e2"/><rect x="165.80" y="202.47" width="6.9" height="13.2" fill="#e2e2e2"/><rect x="173.79" y="202.47" width="6.9" height="13.2" fill="#e2e2e2"/><rect x="181.78" y="202.47" width="6.9" height="13.2" fill="#b0b0b0"/><rect x="189.77" y="202.47" width="6.9" height="13.2" fill="#e2e2e2"/><rect x="197.76" y="202.47" width="6.9" height="13.2" fill="#e2e2e2"/><rect x="205.75" y="202.47" width="6.9" height="13.2" fill="#e2e2e2"/><rect x="213.74" y="202.47" width="6.9" height="13.2" fill="#e2e2e2"/><rect x="221.73" y="202.47" width="6.9" height="13.2" fill="#b0b0b0"/><rect x="229.72" y="202.47" width="6.9" height="13.2" fill="#e2e2e2"/><rect x="237.71" y="202.47" width="6.9" height="13.2" fill="#e2e2e2"/><rect x="245.70" y="202.47" width="6.9" height="13.2" fill="#e2e2e2"/><rect x="253.69" y="202.47" width="6.9" height="13.2" fill="#e2e2e2"/><rect x="261.68" y="202.47" width="6.9" height="13.2" fill="#e2e2e2"/><rect x="269.67" y="202.47" width="6.9" height="13.2" fill="#b0b0b0"/><rect x="277.66" y="202.47" width="6.9" height="13.2" fill="#e2e2e2"/><rect x="285.65" y="202.47" width="6.9" height="13.2" fill="#e2e2e2"/><rect x="293.64" y="202.47" width="6.9" height="13.2" fill="#e2e2e2"/><rect x="301.63" y="202.47" width="6.9" height="13.2" fill="#e2e2e2"/><rect x="309.62" y="202.47" width="6.9" height="13.2" fill="#e2e2e2"/><rect x="317.61" y="202.47" width="6.9" height="13.2" fill="#b0b0b0"/><rect x="325.60" y="202.47" width="6.9" height="13.2" fill="#e2e2e2"/><rect x="333.59" y="202.47" width="6.9" height="13.2" fill="#e2e2e2"/><rect x="341.58" y="202.47" width="6.9" height="13.2" fill="#e2e2e2"/><rect x="349.57" y="202.47" width="6.9" height="13.2" fill="#e2e2e2"/><rect x="357.56" y="202.47" width="6.9" height="13.2" fill="#e2e2e2"/><rect x="365.55" y="202.47" width="6.9" height="13.2" fill="#b0b0b0"/><rect x="373.54" y="202.47" width="6.9" height="13.2" fill="#e2e2e2"/><rect x="381.53" y="202.47" width="6.9" height="13.2" fill="#e2e2e2"/><rect x="389.52" y="202.47" width="6.9" height="13.2" fill="#e2e2e2"/><rect x="397.51" y="202.47" width="6.9" height="13.2" fill="#e2e2e2"/><rect x="405.50" y="202.47" width="6.9" height="13.2" fill="#e2e2e2"/><rect x="413.49" y="202.47" width="6.9" height="13.2" fill="#b0b0b0"/><rect x="421.48" y="202.47" width="6.9" height="13.2" fill="#e2e2e2"/><rect x="429.47" y="202.47" width="6.9" height="13.2" fill="#e2e2e2"/><rect x="437.46" y="202.47" width="6.9" height="13.2" fill="#e2e2e2"/><rect x="445.45" y="202.47" width="6.9" height="13.2" fill="#e2e2e2"/><rect x="453.44" y="202.47" width="6.9" height="13.2" fill="#e2e2e2"/><rect x="461.43" y="202.47" width="6.9" height="13.2" fill="#b0b0b0"/><rect x="469.42" y="202.47" width="6.9" height="13.2" fill="#e2e2e2"/><rect x="477.41" y="202.47" width="6.9" height="13.2" fill="#e2e2e2"/><rect x="485.40" y="202.47" width="6.9" height="13.2" fill="#e2e2e2"/><rect x="493.39" y="202.47" width="6.9" height="13.2" fill="#e2e2e2"/><rect x="501.38" y="202.47" width="6.9" height="13.2" fill="#e2e2e2"/><rect x="509.37" y="202.47" width="6.9" height="13.2" fill="#b0b0b0"/><rect x="6.00" y="216.97" width="6.9" height="13.2" fill="#e2e2e2"/><rect x="13.99" y="216.97" width="6.9" height="13.2" fill="#e2e2e2"/><rect x="21.98" y="216.97" width="6.9" height="13.2" fill="#b0b0b0"/><rect x="29.97" y="216.97" width="6.9" height="13.2" fill="#e2e2e2"/><rect x="37.96" y="216.97" width="6.9" height="13.2" fill="#e2e2e2"/><rect x="45.95" y="216.97" width="6.9" height="13.2" fill="#e2e2e2"/><rect x="53.94" y="216.97" width="6.9" height="13.2" fill="#e2e2e2"/><rect x="61.93" y="216.97" width="6.9" height="13.2" fill="#b0b0b0"/><rect x="69.92" y="216.97" width="6.9" height="13.2" fill="#e2e2e2"/><rect x="77.91" y="216.97" width="6.9" height="13.2" fill="#e2e2e2"/><rect x="85.90" y="216.97" width="6.9" height="13.2" fill="#e2e2e2"/><rect x="93.89" y="216.97" width="6.9" height="13.2" fill="#e2e2e2"/><rect x="101.88" y="216.97" width="6.9" height="13.2" fill="#e2e2e2"/><rect x="109.87" y="216.97" width="6.9" height="13.2" fill="#b0b0b0"/><rect x="117.86" y="216.97" width="6.9" height="13.2" fill="#e2e2e2"/><rect x="125.85" y="216.97" width="6.9" height="13.2" fill="#e2e2e2"/><rect x="133.84" y="216.97" width="6.9" height="13.2" fill="#e2e2e2"/><rect x="141.83" y="216.97" width="6.9" height="13.2" fill="#e2e2e2"/><rect x="149.82" y="216.97" width="6.9" height="13.2" fill="#e2e2e2"/><rect x="157.81" y="216.97" width="6.9" height="13.2" fill="#b0b0b0"/><rect x="165.80" y="216.97" width="6.9" height="13.2" fill="#e2e2e2"/><rect x="173.79" y="216.97" width="6.9" height="13.2" fill="#e2e2e2"/><rect x="181.78" y="216.97" width="6.9" height="13.2" fill="#e2e2e2"/><rect x="189.77" y="216.97" width="6.9" height="13.2" fill="#e2e2e2"/><rect x="197.76" y="216.97" width="6.9" height="13.2" fill="#e2e2e2"/><rect x="205.75" y="216.97" width="6.9" height="13.2" fill="#b0b0b0"/><rect x="213.74" y="216.97" width="6.9" height="13.2" fill="#e2e2e2"/><rect x="221.73" y="216.97" width="6.9" height="13.2" fill="#e2e2e2"/><rect x="229.72" y="216.97" width="6.9" height="13.2" fill="#e2e2e2"/><rect x="237.71" y="216.97" width="6.9" height="13.2" fill="#e2e2e2"/><rect x="245.70" y="216.97" width="6.9" height="13.2" fill="#e2e2e2"/><rect x="253.69" y="216.97" width="6.9" height="13.2" fill="#b0b0b0"/><rect x="261.68" y="216.97" width="6.9" height="13.2" fill="#e2e2e2"/><rect x="269.67" y="216.97" width="6.9" height="13.2" fill="#e2e2e2"/><rect x="277.66" y="216.97" width="6.9" height="13.2" fill="#e2e2e2"/><rect x="285.65" y="216.97" width="6.9" height="13.2" fill="#e2e2e2"/><rect x="293.64" y="216.97" width="6.9" height="13.2" fill="#e2e2e2"/><rect x="301.63" y="216.97" width="6.9" height="13.2" fill="#b0b0b0"/><rect x="309.62" y="216.97" width="6.9" height="13.2" fill="#e2e2e2"/><rect x="317.61" y="216.97" width="6.9" height="13.2" fill="#e2e2e2"/><rect x="325.60" y="216.97" width="6.9" height="13.2" fill="#e2e2e2"/><rect x="333.59" y="216.97" width="6.9" height="13.2" fill="#e2e2e2"/><rect x="341.58" y="216.97" width="6.9" height="13.2" fill="#e2e2e2"/><rect x="349.57" y="216.97" width="6.9" height="13.2" fill="#b0b0b0"/><rect x="357.56" y="216.97" width="6.9" height="13.2" fill="#e2e2e2"/><rect x="365.55" y="216.97" width="6.9" height="13.2" fill="#e2e2e2"/><rect x="373.54" y="216.97" width="6.9" height="13.2" fill="#e2e2e2"/><rect x="381.53" y="216.97" width="6.9" height="13.2" fill="#e2e2e2"/><rect x="389.52" y="216.97" width="6.9" height="13.2" fill="#e2e2e2"/><rect x="397.51" y="216.97" width="6.9" height="13.2" fill="#b0b0b0"/><rect x="405.50" y="216.97" width="6.9" height="13.2" fill="#e2e2e2"/><rect x="413.49" y="216.97" width="6.9" height="13.2" fill="#e2e2e2"/><rect x="421.48" y="216.97" width="6.9" height="13.2" fill="#e2e2e2"/><rect x="429.47" y="216.97" width="6.9" height="13.2" fill="#e2e2e2"/><rect x="437.46" y="216.97" width="6.9" height="13.2" fill="#e2e2e2"/><rect x="445.45" y="216.97" width="6.9" height="13.2" fill="#b0b0b0"/><rect x="453.44" y="216.97" width="6.9" height="13.2" fill="#e2e2e2"/><rect x="461.43" y="216.97" width="6.9" height="13.2" fill="#e2e2e2"/><rect x="469.42" y="216.97" width="6.9" height="13.2" fill="#e2e2e2"/><rect x="477.41" y="216.97" width="6.9" height="13.2" fill="#e2e2e2"/><rect x="485.40" y="216.97" width="6.9" height="13.2" fill="#e2e2e2"/><rect x="493.39" y="216.97" width="6.9" height="13.2" fill="#b0b0b0"/><rect x="501.38" y="216.97" width="6.9" height="13.2" fill="#e2e2e2"/><rect x="509.37" y="216.97" width="6.9" height="13.2" fill="#e2e2e2"/><rect x="6.00" y="231.46" width="6.9" height="13.2" fill="#e2e2e2"/><rect x="13.99" y="231.46" width="6.9" height="13.2" fill="#e2e2e2"/><rect x="21.98" y="231.46" width="6.9" height="13.2" fill="#b0b0b0"/><rect x="29.97" y="231.46" width="6.9" height="13.2" fill="#e2e2e2"/><rect x="37.96" y="231.46" width="6.9" height="13.2" fill="#e2e2e2"/><rect x="45.95" y="231.46" width="6.9" height="13.2" fill="#e2e2e2"/><rect x="53.94" y="231.46" width="6.9" height="13.2" fill="#e2e2e2"/><rect x="61.93" y="231.46" width="6.9" height="13.2" fill="#e2e2e2"/><rect x="69.92" y="231.46" width="6.9" height="13.2" fill="#b0b0b0"/><rect x="77.91" y="231.46" width="6.9" height="13.2" fill="#e2e2e2"/><rect x="85.90" y="231.46" width="6.9" height="13.2" fill="#e2e2e2"/><rect x="93.89" y="231.46" width="6.9" height="13.2" fill="#e2e2e2"/><rect x="101.88" y="231.46" width="6.9" height="13.2" fill="#e2e2e2"/><rect x="109.87" y="231.46" width="6.9" height="13.2" fill="#e2e2e2"/><rect x="117.86" y="231.46" width="6.9" height="13.2" fill="#b0b0b0"/><rect x="125.85" y="231.46" width="6.9" height="13.2" fill="#e2e2e2"/><rect x="133.84" y="231.46" width="6.9" height="13.2" fill="#e2e2e2"/><rect x="141.83" y="231.46" width="6.9" height="13.2" fill="#e2e2e2"/><rect x="149.82" y="231.46" width="6.9" height="13.2" fill="#e2e2e2"/><rect x="157.81" y="231.46" width="6.9" height="13.2" fill="#e2e2e2"/><rect x="165.80" y="231.46" width="6.9" height="13.2" fill="#b0b0b0"/><rect x="173.79" y="231.46" width="6.9" height="13.2" fill="#e2e2e2"/><rect x="181.78" y="231.46" width="6.9" height="13.2" fill="#e2e2e2"/><rect x="189.77" y="231.46" width="6.9" height="13.2" fill="#e2e2e2"/><rect x="197.76" y="231.46" width="6.9" height="13.2" fill="#e2e2e2"/><rect x="205.75" y="231.46" width="6.9" height="13.2" fill="#e2e2e2"/><rect x="213.74" y="231.46" width="6.9" height="13.2" fill="#b0b0b0"/><rect x="221.73" y="231.46" width="6.9" height="13.2" fill="#e2e2e2"/><rect x="229.72" y="231.46" width="6.9" height="13.2" fill="#e2e2e2"/><rect x="237.71" y="231.46" width="6.9" height="13.2" fill="#e2e2e2"/><rect x="245.70" y="231.46" width="6.9" height="13.2" fill="#e2e2e2"/><rect x="253.69" y="231.46" width="6.9" height="13.2" fill="#e2e2e2"/><rect x="261.68" y="231.46" width="6.9" height="13.2" fill="#b0b0b0"/><rect x="269.67" y="231.46" width="6.9" height="13.2" fill="#e2e2e2"/><rect x="277.66" y="231.46" width="6.9" height="13.2" fill="#e2e2e2"/><rect x="285.65" y="231.46" width="6.9" height="13.2" fill="#e2e2e2"/><rect x="293.64" y="231.46" width="6.9" height="13.2" fill="#e2e2e2"/><rect x="301.63" y="231.46" width="6.9" height="13.2" fill="#e2e2e2"/><rect x="309.62" y="231.46" width="6.9" height="13.2" fill="#b0b0b0"/><rect x="317.61" y="231.46" width="6.9" height="13.2" fill="#e2e2e2"/><rect x="325.60" y="231.46" width="6.9" height="13.2" fill="#e2e2e2"/><rect x="333.59" y="231.46" width="6.9" height="13.2" fill="#e2e2e2"/><rect x="341.58" y="231.46" width="6.9" height="13.2" fill="#e2e2e2"/><rect x="349.57" y="231.46" width="6.9" height="13.2" fill="#e2e2e2"/><rect x="357.56" y="231.46" width="6.9" height="13.2" fill="#b0b0b0"/><rect x="365.55" y="231.46" width="6.9" height="13.2" fill="#e2e2e2"/><rect x="373.54" y="231.46" width="6.9" height="13.2" fill="#e2e2e2"/><rect x="381.53" y="231.46" width="6.9" height="13.2" fill="#e2e2e2"/><rect x="389.52" y="231.46" width="6.9" height="13.2" fill="#e2e2e2"/><rect x="397.51" y="231.46" width="6.9" height="13.2" fill="#e2e2e2"/><rect x="405.50" y="231.46" width="6.9" height="13.2" fill="#b0b0b0"/><rect x="413.49" y="231.46" width="6.9" height="13.2" fill="#e2e2e2"/><rect x="421.48" y="231.46" width="6.9" height="13.2" fill="#e2e2e2"/><rect x="429.47" y="231.46" width="6.9" height="13.2" fill="#e2e2e2"/><rect x="437.46" y="231.46" width="6.9" height="13.2" fill="#e2e2e2"/><rect x="445.45" y="231.46" width="6.9" height="13.2" fill="#b0b0b0"/><rect x="453.44" y="231.46" width="6.9" height="13.2" fill="#e2e2e2"/><rect x="461.43" y="231.46" width="6.9" height="13.2" fill="#e2e2e2"/><rect x="469.42" y="231.46" width="6.9" height="13.2" fill="#e2e2e2"/><rect x="477.41" y="231.46" width="6.9" height="13.2" fill="#e2e2e2"/><rect x="485.40" y="231.46" width="6.9" height="13.2" fill="#e2e2e2"/><rect x="493.39" y="231.46" width="6.9" height="13.2" fill="#b0b0b0"/><rect x="501.38" y="231.46" width="6.9" height="13.2" fill="#e2e2e2"/><rect x="509.37" y="231.46" width="6.9" height="13.2" fill="#e2e2e2"/><rect x="6.00" y="245.96" width="6.9" height="13.2" fill="#b0b0b0"/><rect x="13.99" y="245.96" width="6.9" height="13.2" fill="#e2e2e2"/><rect x="21.98" y="245.96" width="6.9" height="13.2" fill="#e2e2e2"/><rect x="29.97" y="245.96" width="6.9" height="13.2" fill="#e2e2e2"/><rect x="37.96" y="245.96" width="6.9" height="13.2" fill="#e2e2e2"/><rect x="45.95" y="245.96" width="6.9" height="13.2" fill="#b0b0b0"/><rect x="53.94" y="245.96" width="6.9" height="13.2" fill="#e2e2e2"/><rect x="61.93" y="245.96" width="6.9" height="13.2" fill="#e2e2e2"/><rect x="69.92" y="245.96" width="6.9" height="13.2" fill="#e2e2e2"/><rect x="77.91" y="245.96" width="6.9" height="13.2" fill="#e2e2e2"/><rect x="85.90" y="245.96" width="6.9" height="13.2" fill="#e2e2e2"/><rect x="93.89" y="245.96" width="6.9" height="13.2" fill="#b0b0b0"/><rect x="101.88" y="245.96" width="6.9" height="13.2" fill="#e2e2e2"/><rect x="109.87" y="245.96" width="6.9" height="13.2" fill="#e2e2e2"/><rect x="117.86" y="245.96" width="6.9" height="13.2" fill="#e2e2e2"/><rect x="125.85" y="245.96" width="6.9" height="13.2" fill="#e2e2e2"/><rect x="133.84" y="245.96" width="6.9" height="13.2" fill="#e2e2e2"/><rect x="141.83" y="245.96" width="6.9" height="13.2" fill="#b0b0b0"/><rect x="149.82" y="245.96" width="6.9" height="13.2" fill="#e2e2e2"/><rect x="157.81" y="245.96" width="6.9" height="13.2" fill="#e2e2e2"/><rect x="165.80" y="245.96" width="6.9" height="13.2" fill="#e2e2e2"/><rect x="173.79" y="245.96" width="6.9" height="13.2" fill="#e2e2e2"/><rect x="181.78" y="245.96" width="6.9" height="13.2" fill="#e2e2e2"/><rect x="189.77" y="245.96" width="6.9" height="13.2" fill="#b0b0b0"/><rect x="197.76" y="245.96" width="6.9" height="13.2" fill="#e2e2e2"/><rect x="205.75" y="245.96" width="6.9" height="13.2" fill="#e2e2e2"/><rect x="213.74" y="245.96" width="6.9" height="13.2" fill="#e2e2e2"/><rect x="221.73" y="245.96" width="6.9" height="13.2" fill="#e2e2e2"/><rect x="229.72" y="245.96" width="6.9" height="13.2" fill="#e2e2e2"/><rect x="237.71" y="245.96" width="6.9" height="13.2" fill="#b0b0b0"/><rect x="245.70" y="245.96" width="6.9" height="13.2" fill="#e2e2e2"/><rect x="253.69" y="245.96" width="6.9" height="13.2" fill="#e2e2e2"/><rect x="261.68" y="245.96" width="6.9" height="13.2" fill="#e2e2e2"/><rect x="269.67" y="245.96" width="6.9" height="13.2" fill="#e2e2e2"/><rect x="277.66" y="245.96" width="6.9" height="13.2" fill="#b0b0b0"/><rect x="285.65" y="245.96" width="6.9" height="13.2" fill="#e2e2e2"/><rect x="293.64" y="245.96" width="6.9" height="13.2" fill="#e2e2e2"/><rect x="301.63" y="245.96" width="6.9" height="13.2" fill="#e2e2e2"/><rect x="309.62" y="245.96" width="6.9" height="13.2" fill="#e2e2e2"/><rect x="317.61" y="245.96" width="6.9" height="13.2" fill="#e2e2e2"/><rect x="325.60" y="245.96" width="6.9" height="13.2" fill="#b0b0b0"/><rect x="333.59" y="245.96" width="6.9" height="13.2" fill="#e2e2e2"/><rect x="341.58" y="245.96" width="6.9" height="13.2" fill="#e2e2e2"/><rect x="349.57" y="245.96" width="6.9" height="13.2" fill="#e2e2e2"/><rect x="357.56" y="245.96" width="6.9" height="13.2" fill="#e2e2e2"/><rect x="365.55" y="245.96" width="6.9" height="13.2" fill="#e2e2e2"/><rect x="373.54" y="245.96" width="6.9" height="13.2" fill="#b0b0b0"/><rect x="381.53" y="245.96" width="6.9" height="13.2" fill="#e2e2e2"/><rect x="389.52" y="245.96" width="6.9" height="13.2" fill="#e2e2e2"/><rect x="397.51" y="245.96" width="6.9" height="13.2" fill="#e2e2e2"/><rect x="405.50" y="245.96" width="6.9" height="13.2" fill="#e2e2e2"/><rect x="413.49" y="245.96" width="6.9" height="13.2" fill="#e2e2e2"/><rect x="421.48" y="245.96" width="6.9" height="13.2" fill="#b0b0b0"/><rect x="429.47" y="245.96" width="6.9" height="13.2" fill="#e2e2e2"/><rect x="437.46" y="245.96" width="6.9" height="13.2" fill="#e2e2e2"/><rect x="445.45" y="245.96" width="6.9" height="13.2" fill="#e2e2e2"/><rect x="453.44" y="245.96" width="6.9" height="13.2" fill="#e2e2e2"/><rect x="461.43" y="245.96" width="6.9" height="13.2" fill="#e2e2e2"/><rect x="469.42" y="245.96" width="6.9" height="13.2" fill="#b0b0b0"/><rect x="477.41" y="245.96" width="6.9" height="13.2" fill="#e2e2e2"/><rect x="485.40" y="245.96" width="6.9" height="13.2" fill="#e2e2e2"/><rect x="493.39" y="245.96" width="6.9" height="13.2" fill="#e2e2e2"/><rect x="501.38" y="245.96" width="6.9" height="13.2" fill="#e2e2e2"/><rect x="509.37" y="245.96" width="6.9" height="13.2" fill="#e2e2e2"/><rect x="6.00" y="260.46" width="6.9" height="13.2" fill="#e2e2e2"/><rect x="13.99" y="260.46" width="6.9" height="13.2" fill="#e2e2e2"/><rect x="21.98" y="260.46" width="6.9" height="13.2" fill="#b0b0b0"/><rect x="29.97" y="260.46" width="6.9" height="13.2" fill="#e2e2e2"/><rect x="37.96" y="260.46" width="6.9" height="13.2" fill="#e2e2e2"/><rect x="45.95" y="260.46" width="6.9" height="13.2" fill="#e2e2e2"/><rect x="53.94" y="260.46" width="6.9" height="13.2" fill="#e2e2e2"/><rect x="61.93" y="260.46" width="6.9" height="13.2" fill="#e2e2e2"/><rect x="69.92" y="260.46" width="6.9" height="13.2" fill="#b0b0b0"/><rect x="77.91" y="260.46" width="6.9" height="13.2" fill="#e2e2e2"/><rect x="85.90" y="260.46" width="6.9" height="13.2" fill="#e2e2e2"/><rect x="93.89" y="260.46" width="6.9" height="13.2" fill="#e2e2e2"/><rect x="101.88" y="260.46" width="6.9" height="13.2" fill="#e2e2e2"/><rect x="109.87" y="260.46" width="6.9" height="13.2" fill="#b0b0b0"/><rect x="117.86" y="260.46" width="6.9" height="13.2" fill="#e2e2e2"/><rect x="125.85" y="260.46" width="6.9" height="13.2" fill="#e2e2e2"/><rect x="133.84" y="260.46" width="6.9" height="13.2" fill="#e2e2e2"/><rect x="141.83" y="260.46" width="6.9" height="13.2" fill="#e2e2e2"/><rect x="149.82" y="260.46" width="6.9" height="13.2" fill="#e2e2e2"/><rect x="157.81" y="260.46" width="6.9" height="13.2" fill="#b0b0b0"/><rect x="165.80" y="260.46" width="6.9" height="13.2" fill="#e2e2e2"/><rect x="173.79" y="260.46" width="6.9" height="13.2" fill="#e2e2e2"/><rect x="181.78" y="260.46" width="6.9" height="13.2" fill="#e2e2e2"/><rect x="189.77" y="260.46" width="6.9" height="13.2" fill="#e2e2e2"/><rect x="197.76" y="260.46" width="6.9" height="13.2" fill="#e2e2e2"/><rect x="205.75" y="260.46" width="6.9" height="13.2" fill="#b0b0b0"/><rect x="213.74" y="260.46" width="6.9" height="13.2" fill="#e2e2e2"/><rect x="221.73" y="260.46" width="6.9" height="13.2" fill="#e2e2e2"/><rect x="229.72" y="260.46" width="6.9" height="13.2" fill="#e2e2e2"/><rect x="237.71" y="260.46" width="6.9" height="13.2" fill="#e2e2e2"/><rect x="245.70" y="260.46" width="6.9" height="13.2" fill="#e2e2e2"/><rect x="253.69" y="260.46" width="6.9" height="13.2" fill="#b0b0b0"/><rect x="261.68" y="260.46" width="6.9" height="13.2" fill="#e2e2e2"/><rect x="269.67" y="260.46" width="6.9" height="13.2" fill="#e2e2e2"/><rect x="277.66" y="260.46" width="6.9" height="13.2" fill="#e2e2e2"/><rect x="285.65" y="260.46" width="6.9" height="13.2" fill="#e2e2e2"/><rect x="293.64" y="260.46" width="6.9" height="13.2" fill="#e2e2e2"/><rect x="301.63" y="260.46" width="6.9" height="13.2" fill="#b0b0b0"/><rect x="309.62" y="260.46" width="6.9" height="13.2" fill="#e2e2e2"/><rect x="317.61" y="260.46" width="6.9" height="13.2" fill="#e2e2e2"/><rect x="325.60" y="260.46" width="6.9" height="13.2" fill="#e2e2e2"/><rect x="333.59" y="260.46" width="6.9" height="13.2" fill="#e2e2e2"/><rect x="341.58" y="260.46" width="6.9" height="13.2" fill="#e2e2e2"/><rect x="349.57" y="260.46" width="6.9" height="13.2" fill="#b0b0b0"/><rect x="357.56" y="260.46" width="6.9" height="13.2" fill="#e2e2e2"/><rect x="365.55" y="260.46" width="6.9" height="13.2" fill="#e2e2e2"/><rect x="373.54" y="260.46" width="6.9" height="13.2" fill="#e2e2e2"/><rect x="381.53" y="260.46" width="6.9" height="13.2" fill="#e2e2e2"/><rect x="389.52" y="260.46" width="6.9" height="13.2" fill="#e2e2e2"/><rect x="397.51" y="260.46" width="6.9" height="13.2" fill="#b0b0b0"/><rect x="405.50" y="260.46" width="6.9" height="13.2" fill="#e2e2e2"/><rect x="413.49" y="260.46" width="6.9" height="13.2" fill="#e2e2e2"/><rect x="421.48" y="260.46" width="6.9" height="13.2" fill="#e2e2e2"/><rect x="429.47" y="260.46" width="6.9" height="13.2" fill="#e2e2e2"/><rect x="437.46" y="260.46" width="6.9" height="13.2" fill="#e2e2e2"/><rect x="445.45" y="260.46" width="6.9" height="13.2" fill="#b0b0b0"/><rect x="453.44" y="260.46" width="6.9" height="13.2" fill="#e2e2e2"/><rect x="461.43" y="260.46" width="6.9" height="13.2" fill="#e2e2e2"/><rect x="469.42" y="260.46" width="6.9" height="13.2" fill="#e2e2e2"/><rect x="477.41" y="260.46" width="6.9" height="13.2" fill="#e2e2e2"/><rect x="485.40" y="260.46" width="6.9" height="13.2" fill="#e2e2e2"/><rect x="493.39" y="260.46" width="6.9" height="13.2" fill="#b0b0b0"/><rect x="501.38" y="260.46" width="6.9" height="13.2" fill="#e2e2e2"/><rect x="509.37" y="260.46" width="6.9" height="13.2" fill="#e2e2e2"/><rect x="6.00" y="274.95" width="6.9" height="13.2" fill="#e2e2e2"/><rect x="13.99" y="274.95" width="6.9" height="13.2" fill="#e2e2e2"/><rect x="21.98" y="274.95" width="6.9" height="13.2" fill="#e2e2e2"/><rect x="29.97" y="274.95" width="6.9" height="13.2" fill="#e2e2e2"/><rect x="37.96" y="274.95" width="6.9" height="13.2" fill="#b0b0b0"/><rect x="45.95" y="274.95" width="6.9" height="13.2" fill="#e2e2e2"/><rect x="53.94" y="274.95" width="6.9" height="13.2" fill="#e2e2e2"/><rect x="61.93" y="274.95" width="6.9" height="13.2" fill="#e2e2e2"/><rect x="69.92" y="274.95" width="6.9" height="13.2" fill="#e2e2e2"/><rect x="77.91" y="274.95" width="6.9" height="13.2" fill="#e2e2e2"/><rect x="85.90" y="274.95" width="6.9" height="13.2" fill="#b0b0b0"/><rect x="93.89" y="274.95" width="6.9" height="13.2" fill="#e2e2e2"/><rect x="101.88" y="274.95" width="6.9" height="13.2" fill="#e2e2e2"/><rect x="109.87" y="274.95" width="6.9" height="13.2" fill="#e2e2e2"/><rect x="117.86" y="274.95" width="6.9" height="13.2" fill="#e2e2e2"/><rect x="125.85" y="274.95" width="6.9" height="13.2" fill="#e2e2e2"/><rect x="133.84" y="274.95" width="6.9" height="13.2" fill="#b0b0b0"/><rect x="141.83" y="274.95" width="6.9" height="13.2" fill="#e2e2e2"/><rect x="149.82" y="274.95" width="6.9" height="13.2" fill="#e2e2e2"/><rect x="157.81" y="274.95" width="6.9" height="13.2" fill="#e2e2e2"/><rect x="165.80" y="274.95" width="6.9" height="13.2" fill="#e2e2e2"/><rect x="173.79" y="274.95" width="6.9" height="13.2" fill="#e2e2e2"/><rect x="181.78" y="274.95" width="6.9" height="13.2" fill="#b0b0b0"/><rect x="189.77" y="274.95" width="6.9" height="13.2" fill="#e2e2e2"/><rect x="197.76" y="274.95" width="6.9" height="13.2" fill="#e2e2e2"/><rect x="205.75" y="274.95" width="6.9" height="13.2" fill="#e2e2e2"/><rect x="213.74" y="274.95" width="6.9" height="13.2" fill="#e2e2e2"/><rect x="221.73" y="274.95" width="6.9" height="13.2" fill="#e2e2e2"/><rect x="229.72" y="274.95" width="6.9" height="13.2" fill="#b0b0b0"/><rect x="237.71" y="274.95" width="6.9" height="13.2" fill="#e2e2e2"/><rect x="245.70" y="274.95" width="6.9" height="13.2" fill="#e2e2e2"/><rect x="253.69" y="274.95" width="6.9" height="13.2" fill="#e2e2e2"/><rect x="261.68" y="274.95" width="6.9" height="13.2" fill="#e2e2e2"/><rect x="269.67" y="274.95" width="6.9" height="13.2" fill="#e2e2e2"/><rect x="277.66" y="274.95" width="6.9" height="13.2" fill="#b0b0b0"/><rect x="285.65" y="274.95" width="6.9" height="13.2" fill="#e2e2e2"/><rect x="293.64" y="274.95" width="6.9" height="13.2" fill="#e2e2e2"/><rect x="301.63" y="274.95" width="6.9" height="13.2" fill="#e2e2e2"/><rect x="309.62" y="274.95" width="6.9" height="13.2" fill="#e2e2e2"/><rect x="317.61" y="274.95" width="6.9" height="13.2" fill="#e2e2e2"/><rect x="325.60" y="274.95" width="6.9" height="13.2" fill="#b0b0b0"/><rect x="333.59" y="274.95" width="6.9" height="13.2" fill="#e2e2e2"/><rect x="341.58" y="274.95" width="6.9" height="13.2" fill="#e2e2e2"/><rect x="349.57" y="274.95" width="6.9" height="13.2" fill="#e2e2e2"/><rect x="357.56" y="274.95" width="6.9" height="13.2" fill="#e2e2e2"/><rect x="365.55" y="274.95" width="6.9" height="13.2" fill="#e2e2e2"/><rect x="373.54" y="274.95" width="6.9" height="13.2" fill="#b0b0b0"/><rect x="381.53" y="274.95" width="6.9" height="13.2" fill="#e2e2e2"/><rect x="389.52" y="274.95" width="6.9" height="13.2" fill="#e2e2e2"/><rect x="397.51" y="274.95" width="6.9" height="13.2" fill="#e2e2e2"/><rect x="405.50" y="274.95" width="6.9" height="13.2" fill="#e2e2e2"/><rect x="413.49" y="274.95" width="6.9" height="13.2" fill="#b0b0b0"/><rect x="421.48" y="274.95" width="6.9" height="13.2" fill="#e2e2e2"/><rect x="429.47" y="274.95" width="6.9" height="13.2" fill="#e2e2e2"/><rect x="437.46" y="274.95" width="6.9" height="13.2" fill="#e2e2e2"/><rect x="445.45" y="274.95" width="6.9" height="13.2" fill="#e2e2e2"/><rect x="453.44" y="274.95" width="6.9" height="13.2" fill="#e2e2e2"/><rect x="461.43" y="274.95" width="6.9" height="13.2" fill="#b0b0b0"/><rect x="469.42" y="274.95" width="6.9" height="13.2" fill="#e2e2e2"/><rect x="477.41" y="274.95" width="6.9" height="13.2" fill="#e2e2e2"/><rect x="485.40" y="274.95" width="6.9" height="13.2" fill="#e2e2e2"/><rect x="493.39" y="274.95" width="6.9" height="13.2" fill="#e2e2e2"/><rect x="501.38" y="274.95" width="6.9" height="13.2" fill="#e2e2e2"/><rect x="509.37" y="274.95" width="6.9" height="13.2" fill="#b0b0b0"/><rect x="6.00" y="289.45" width="6.9" height="13.2" fill="#e2e2e2"/><rect x="13.99" y="289.45" width="6.9" height="13.2" fill="#e2e2e2"/><rect x="21.98" y="289.45" width="6.9" height="13.2" fill="#b0b0b0"/><rect x="29.97" y="289.45" width="6.9" height="13.2" fill="#e2e2e2"/><rect x="37.96" y="289.45" width="6.9" height="13.2" fill="#e2e2e2"/><rect x="45.95" y="289.45" width="6.9" height="13.2" fill="#e2e2e2"/><rect x="53.94" y="289.45" width="6.9" height="13.2" fill="#b0b0b0"/><rect x="61.93" y="289.45" width="6.9" height="13.2" fill="#e2e2e2"/><rect x="69.92" y="289.45" width="6.9" height="13.2" fill="#e2e2e2"/><rect x="77.91" y="289.45" width="6.9" height="13.2" fill="#e2e2e2"/><rect x="85.90" y="289.45" width="6.9" height="13.2" fill="#e2e2e2"/><rect x="93.89" y="289.45" width="6.9" height="13.2" fill="#e2e2e2"/><rect x="101.88" y="289.45" width="6.9" height="13.2" fill="#b0b0b0"/><rect x="109.87" y="289.45" width="6.9" height="13.2" fill="#e2e2e2"/><rect x="117.86" y="289.45" width="6.9" height="13.2" fill="#e2e2e2"/><rect x="125.85" y="289.45" width="6.9" height="13.2" fill="#e2e2e2"/><rect x="133.84" y="289.45" width="6.9" height="13.2" fill="#e2e2e2"/><rect x="141.83" y="289.45" width="6.9" height="13.2" fill="#e2e2e2"/><rect x="149.82" y="289.45" width="6.9" height="13.2" fill="#e2e2e2"/><rect x="157.81" y="289.45" width="6.9" height="13.2" fill="#b0b0b0"/><rect x="165.80" y="289.45" width="6.9" height="13.2" fill="#e2e2e2"/><rect x="173.79" y="289.45" width="6.9" height="13.2" fill="#e2e2e2"/><rect x="181.78" y="289.45" width="6.9" height="13.2" fill="#e2e2e2"/><rect x="189.77" y="289.45" width="6.9" height="13.2" fill="#e2e2e2"/><rect x="197.76" y="289.45" width="6.9" height="13.2" fill="#e2e2e2"/><rect x="205.75" y="289.45" width="6.9" height="13.2" fill="#b0b0b0"/><rect x="213.74" y="289.45" width="6.9" height="13.2" fill="#e2e2e2"/><rect x="221.73" y="289.45" width="6.9" height="13.2" fill="#e2e2e2"/><rect x="229.72" y="289.45" width="6.9" height="13.2" fill="#e2e2e2"/><rect x="237.71" y="289.45" width="6.9" height="13.2" fill="#e2e2e2"/><rect x="245.70" y="289.45" width="6.9" height="13.2" fill="#b0b0b0"/><rect x="253.69" y="289.45" width="6.9" height="13.2" fill="#e2e2e2"/><rect x="261.68" y="289.45" width="6.9" height="13.2" fill="#e2e2e2"/><rect x="269.67" y="289.45" width="6.9" height="13.2" fill="#e2e2e2"/><rect x="277.66" y="289.45" width="6.9" height="13.2" fill="#e2e2e2"/><rect x="285.65" y="289.45" width="6.9" height="13.2" fill="#e2e2e2"/><rect x="293.64" y="289.45" width="6.9" height="13.2" fill="#b0b0b0"/><rect x="301.63" y="289.45" width="6.9" height="13.2" fill="#e2e2e2"/><rect x="309.62" y="289.45" width="6.9" height="13.2" fill="#e2e2e2"/><rect x="317.61" y="289.45" width="6.9" height="13.2" fill="#e2e2e2"/><rect x="325.60" y="289.45" width="6.9" height="13.2" fill="#e2e2e2"/><rect x="333.59" y="289.45" width="6.9" height="13.2" fill="#e2e2e2"/><rect x="341.58" y="289.45" width="6.9" height="13.2" fill="#b0b0b0"/><rect x="349.57" y="289.45" width="6.9" height="13.2" fill="#e2e2e2"/><rect x="357.56" y="289.45" width="6.9" height="13.2" fill="#e2e2e2"/><rect x="365.55" y="289.45" width="6.9" height="13.2" fill="#e2e2e2"/><rect x="373.54" y="289.45" width="6.9" height="13.2" fill="#e2e2e2"/><rect x="381.53" y="289.45" width="6.9" height="13.2" fill="#e2e2e2"/><rect x="389.52" y="289.45" width="6.9" height="13.2" fill="#b0b0b0"/><rect x="397.51" y="289.45" width="6.9" height="13.2" fill="#e2e2e2"/><rect x="405.50" y="289.45" width="6.9" height="13.2" fill="#e2e2e2"/><rect x="413.49" y="289.45" width="6.9" height="13.2" fill="#e2e2e2"/><rect x="421.48" y="289.45" width="6.9" height="13.2" fill="#e2e2e2"/><rect x="429.47" y="289.45" width="6.9" height="13.2" fill="#e2e2e2"/><rect x="437.46" y="289.45" width="6.9" height="13.2" fill="#b0b0b0"/><rect x="445.45" y="289.45" width="6.9" height="13.2" fill="#e2e2e2"/><rect x="453.44" y="289.45" width="6.9" height="13.2" fill="#e2e2e2"/><rect x="461.43" y="289.45" width="6.9" height="13.2" fill="#e2e2e2"/><rect x="469.42" y="289.45" width="6.9" height="13.2" fill="#e2e2e2"/><rect x="477.41" y="289.45" width="6.9" height="13.2" fill="#b0b0b0"/><rect x="485.40" y="289.45" width="6.9" height="13.2" fill="#e2e2e2"/><rect x="493.39" y="289.45" width="6.9" height="13.2" fill="#e2e2e2"/><rect x="501.38" y="289.45" width="6.9" height="13.2" fill="#e2e2e2"/><rect x="509.37" y="289.45" width="6.9" height="13.2" fill="#e2e2e2"/><rect x="6.00" y="303.94" width="6.9" height="13.2" fill="#e2e2e2"/><rect x="13.99" y="303.94" width="6.9" height="13.2" fill="#e2e2e2"/><rect x="21.98" y="303.94" width="6.9" height="13.2" fill="#e2e2e2"/><rect x="29.97" y="303.94" width="6.9" height="13.2" fill="#e2e2e2"/><rect x="37.96" y="303.94" width="6.9" height="13.2" fill="#b0b0b0"/><rect x="45.95" y="303.94" width="6.9" height="13.2" fill="#e2e2e2"/><rect x="53.94" y="303.94" width="6.9" height="13.2" fill="#e2e2e2"/><rect x="61.93" y="303.94" width="6.9" height="13.2" fill="#e2e2e2"/><rect x="69.92" y="303.94" width="6.9" height="13.2" fill="#e2e2e2"/><rect x="77.91" y="303.94" width="6.9" height="13.2" fill="#b0b0b0"/><rect x="85.90" y="303.94" width="6.9" height="13.2" fill="#e2e2e2"/><rect x="93.89" y="303.94" width="6.9" height="13.2" fill="#e2e2e2"/><rect x="101.88" y="303.94" width="6.9" height="13.2" fill="#e2e2e2"/><rect x="109.87" y="303.94" width="6.9" height="13.2" fill="#e2e2e2"/><rect x="117.86" y="303.94" width="6.9" height="13.2" fill="#e2e2e2"/><rect x="125.85" y="303.94" width="6.9" height="13.2" fill="#b0b0b0"/><rect x="133.84" y="303.94" width="6.9" height="13.2" fill="#e2e2e2"/><rect x="141.83" y="303.94" width="6.9" height="13.2" fill="#e2e2e2"/><rect x="149.82" y="303.94" width="6.9" height="13.2" fill="#e2e2e2"/><rect x="157.81" y="303.94" width="6.9" height="13.2" fill="#e2e2e2"/><rect x="165.80" y="303.94" width="6.9" height="13.2" fill="#e2e2e2"/><rect x="173.79" y="303.94" width="6.9" height="13.2" fill="#b0b0b0"/><rect x="181.78" y="303.94" width="6.9" height="13.2" fill="#e2e2e2"/><rect x="189.77" y="303.94" width="6.9" height="13.2" fill="#e2e2e2"/><rect x="197.76" y="303.94" width="6.9" height="13.2" fill="#e2e2e2"/><rect x="205.75" y="303.94" width="6.9" height="13.2" fill="#e2e2e2"/><rect x="213.74" y="303.94" width="6.9" height="13.2" fill="#e2e2e2"/><rect x="221.73" y="303.94" width="6.9" height="13.2" fill="#b0b0b0"/><rect x="229.72" y="303.94" width="6.9" height="13.2" fill="#e2e2e2"/><rect x="237.71" y="303.94" width="6.9" height="13.2" fill="#e2e2e2"/><rect x="245.70" y="303.94" width="6.9" height="13.2" fill="#e2e2e2"/><rect x="253.69" y="303.94" width="6.9" height="13.2" fill="#e2e2e2"/><rect x="261.68" y="303.94" width="6.9" height="13.2" fill="#e2e2e2"/><rect x="269.67" y="303.94" width="6.9" height="13.2" fill="#b0b0b0"/><rect x="277.66" y="303.94" width="6.9" height="13.2" fill="#e2e2e2"/><rect x="285.65" y="303.94" width="6.9" height="13.2" fill="#e2e2e2"/><rect x="293.64" y="303.94" width="6.9" height="13.2" fill="#e2e2e2"/><rect x="301.63" y="303.94" width="6.9" height="13.2" fill="#e2e2e2"/><rect x="309.62" y="303.94" width="6.9" height="13.2" fill="#b0b0b0"/><rect x="317.61" y="303.94" width="6.9" height="13.2" fill="#e2e2e2"/><rect x="325.60" y="303.94" width="6.9" height="13.2" fill="#e2e2e2"/><rect x="333.59" y="303.94" width="6.9" height="13.2" fill="#e2e2e2"/><rect x="341.58" y="303.94" width="6.9" height="13.2" fill="#e2e2e2"/><rect x="349.57" y="303.94" width="6.9" height="13.2" fill="#e2e2e2"/><rect x="357.56" y="303.94" width="6.9" height="13.2" fill="#b0b0b0"/><rect x="365.55" y="303.94" width="6.9" height="13.2" fill="#e2e2e2"/><rect x="373.54" y="303.94" width="6.9" height="13.2" fill="#e2e2e2"/><rect x="381.53" y="303.94" width="6.9" height="13.2" fill="#e2e2e2"/><rect x="389.52" y="303.94" width="6.9" height="13.2" fill="#e2e2e2"/><rect x="397.51" y="303.94" width="6.9" height="13.2" fill="#e2e2e2"/><rect x="405.50" y="303.94" width="6.9" height="13.2" fill="#e2e2e2"/><rect x="413.49" y="303.94" width="6.9" height="13.2" fill="#e2e2e2"/><rect x="421.48" y="303.94" width="6.9" height="13.2" fill="#e2e2e2"/><rect x="429.47" y="303.94" width="6.9" height="13.2" fill="#e2e2e2"/><rect x="437.46" y="303.94" width="6.9" height="13.2" fill="#e2e2e2"/><rect x="445.45" y="303.94" width="6.9" height="13.2" fill="#e2e2e2"/><rect x="453.44" y="303.94" width="6.9" height="13.2" fill="#e2e2e2"/><rect x="461.43" y="303.94" width="6.9" height="13.2" fill="#b0b0b0"/><rect x="469.42" y="303.94" width="6.9" height="13.2" fill="#e2e2e2"/><rect x="477.41" y="303.94" width="6.9" height="13.2" fill="#e2e2e2"/><rect x="485.40" y="303.94" width="6.9" height="13.2" fill="#e2e2e2"/><rect x="493.39" y="303.94" width="6.9" height="13.2" fill="#e2e2e2"/><rect x="501.38" y="303.94" width="6.9" height="13.2" fill="#e2e2e2"/><rect x="509.37" y="303.94" width="6.9" height="13.2" fill="#b0b0b0"/><rect x="6.00" y="318.44" width="6.9" height="13.2" fill="#e2e2e2"/><rect x="13.99" y="318.44" width="6.9" height="13.2" fill="#b0b0b0"/><rect x="21.98" y="318.44" width="6.9" height="13.2" fill="#e2e2e2"/><rect x="29.97" y="318.44" width="6.9" height="13.2" fill="#e2e2e2"/><rect x="37.96" y="318.44" width="6.9" height="13.2" fill="#e2e2e2"/><rect x="45.95" y="318.44" width="6.9" height="13.2" fill="#e2e2e2"/><rect x="53.94" y="318.44" width="6.9" height="13.2" fill="#b0b0b0"/><rect x="61.93" y="318.44" width="6.9" height="13.2" fill="#e2e2e2"/><rect x="69.92" y="318.44" width="6.9" height="13.2" fill="#e2e2e2"/><rect x="77.91" y="318.44" width="6.9" height="13.2" fill="#e2e2e2"/><rect x="85.90" y="318.44" width="6.9" height="13.2" fill="#e2e2e2"/><rect x="93.89" y="318.44" width="6.9" height="13.2" fill="#e2e2e2"/><rect x="101.88" y="318.44" width="6.9" height="13.2" fill="#b0b0b0"/><rect x="109.87" y="318.44" width="6.9" height="13.2" fill="#e2e2e2"/><rect x="117.86" y="318.44" width="6.9" height="13.2" fill="#e2e2e2"/><rect x="125.85" y="318.44" width="6.9" height="13.2" fill="#e2e2e2"/><rect x="133.84" y="318.44" width="6.9" height="13.2" fill="#e2e2e2"/><rect x="141.83" y="318.44" width="6.9" height="13.2" fill="#e2e2e2"/><rect x="149.82" y="318.44" width="6.9" height="13.2" fill="#b0b0b0"/><rect x="157.81" y="318.44" width="6.9" height="13.2" fill="#e2e2e2"/><rect x="165.80" y="318.44" width="6.9" height="13.2" fill="#e2e2e2"/><rect x="173.79" y="318.44" width="6.9" height="13.2" fill="#e2e2e2"/><rect x="181.78" y="318.44" width="6.9" height="13.2" fill="#e2e2e2"/><rect x="189.77" y="318.44" width="6.9" height="13.2" fill="#b0b0b0"/><rect x="197.76" y="318.44" width="6.9" height="13.2" fill="#e2e2e2"/><rect x="205.75" y="318.44" width="6.9" height="13.2" fill="#e2e2e2"/><rect x="213.74" y="318.44" width="6.9" height="13.2" fill="#e2e2e2"/><rect x="221.73" y="318.44" width="6.9" height="13.2" fill="#e2e2e2"/><rect x="229.72" y="318.44" width="6.9" height="13.2" fill="#e2e2e2"/><rect x="237.71" y="318.44" width="6.9" height="13.2" fill="#b0b0b0"/><rect x="245.70" y="318.44" width="6.9" height="13.2" fill="#e2e2e2"/><rect x="253.69" y="318.44" width="6.9" height="13.2" fill="#e2e2e2"/><rect x="261.68" y="318.44" width="6.9" height="13.2" fill="#e2e2e2"/><rect x="269.67" y="318.44" width="6.9" height="13.2" fill="#e2e2e2"/><rect x="277.66" y="318.44" width="6.9" height="13.2" fill="#e2e2e2"/><rect x="285.65" y="318.44" width="6.9" height="13.2" fill="#b0b0b0"/><rect x="293.64" y="318.44" width="6.9" height="13.2" fill="#e2e2e2"/><rect x="301.63" y="318.44" width="6.9" height="13.2" fill="#e2e2e2"/><rect x="309.62" y="318.44" width="6.9" height="13.2" fill="#e2e2e2"/><rect x="317.61" y="318.44" width="6.9" height="13.2" fill="#e2e2e2"/><rect x="325.60" y="318.44" width="6.9" height="13.2" fill="#e2e2e2"/><rect x="333.59" y="318.44" width="6.9" height="13.2" fill="#e2e2e2"/><rect x="341.58" y="318.44" width="6.9" height="13.2" fill="#b0b0b0"/><rect x="349.57" y="318.44" width="6.9" height="13.2" fill="#e2e2e2"/><rect x="357.56" y="318.44" width="6.9" height="13.2" fill="#e2e2e2"/><rect x="365.55" y="318.44" width="6.9" height="13.2" fill="#e2e2e2"/><rect x="373.54" y="318.44" width="6.9" height="13.2" fill="#e2e2e2"/><rect x="381.53" y="318.44" width="6.9" height="13.2" fill="#b0b0b0"/><rect x="389.52" y="318.44" width="6.9" height="13.2" fill="#e2e2e2"/><rect x="397.51" y="318.44" width="6.9" height="13.2" fill="#e2e2e2"/><rect x="405.50" y="318.44" width="6.9" height="13.2" fill="#e2e2e2"/><rect x="413.49" y="318.44" width="6.9" height="13.2" fill="#e2e2e2"/><rect x="421.48" y="318.44" width="6.9" height="13.2" fill="#e2e2e2"/><rect x="429.47" y="318.44" width="6.9" height="13.2" fill="#b0b0b0"/><rect x="437.46" y="318.44" width="6.9" height="13.2" fill="#e2e2e2"/><rect x="445.45" y="318.44" width="6.9" height="13.2" fill="#e2e2e2"/><rect x="453.44" y="318.44" width="6.9" height="13.2" fill="#e2e2e2"/><rect x="461.43" y="318.44" width="6.9" height="13.2" fill="#e2e2e2"/><rect x="469.42" y="318.44" width="6.9" height="13.2" fill="#e2e2e2"/><rect x="477.41" y="318.44" width="6.9" height="13.2" fill="#b0b0b0"/><rect x="485.40" y="318.44" width="6.9" height="13.2" fill="#e2e2e2"/><rect x="493.39" y="318.44" width="6.9" height="13.2" fill="#e2e2e2"/><rect x="501.38" y="318.44" width="6.9" height="13.2" fill="#e2e2e2"/><rect x="509.37" y="318.44" width="6.9" height="13.2" fill="#e2e2e2"/><rect x="6.00" y="332.94" width="6.9" height="13.2" fill="#e2e2e2"/><rect x="13.99" y="332.94" width="6.9" height="13.2" fill="#e2e2e2"/><rect x="21.98" y="332.94" width="6.9" height="13.2" fill="#b0b0b0"/><rect x="29.97" y="332.94" width="6.9" height="13.2" fill="#e2e2e2"/><rect x="37.96" y="332.94" width="6.9" height="13.2" fill="#e2e2e2"/><rect x="45.95" y="332.94" width="6.9" height="13.2" fill="#e2e2e2"/><rect x="53.94" y="332.94" width="6.9" height="13.2" fill="#e2e2e2"/><rect x="61.93" y="332.94" width="6.9" height="13.2" fill="#e2e2e2"/><rect x="69.92" y="332.94" width="6.9" height="13.2" fill="#b0b0b0"/><rect x="77.91" y="332.94" width="6.9" height="13.2" fill="#e2e2e2"/><rect x="85.90" y="332.94" width="6.9" height="13.2" fill="#e2e2e2"/><rect x="93.89" y="332.94" width="6.9" height="13.2" fill="#e2e2e2"/><rect x="101.88" y="332.94" width="6.9" height="13.2" fill="#e2e2e2"/><rect x="109.87" y="332.94" width="6.9" height="13.2" fill="#e2e2e2"/><rect x="117.86" y="332.94" width="6.9" height="13.2" fill="#b0b0b0"/><rect x="125.85" y="332.94" width="6.9" height="13.2" fill="#e2e2e2"/><rect x="133.84" y="332.94" width="6.9" height="13.2" fill="#e2e2e2"/><rect x="141.83" y="332.94" width="6.9" height="13.2" fill="#e2e2e2"/><rect x="149.82" y="332.94" width="6.9" height="13.2" fill="#e2e2e2"/><rect x="157.81" y="332.94" width="6.9" height="13.2" fill="#e2e2e2"/><rect x="165.80" y="332.94" width="6.9" height="13.2" fill="#b0b0b0"/><rect x="173.79" y="332.94" width="6.9" height="13.2" fill="#e2e2e2"/><rect x="181.78" y="332.94" width="6.9" height="13.2" fill="#e2e2e2"/><rect x="189.77" y="332.94" width="6.9" height="13.2" fill="#e2e2e2"/><rect x="197.76" y="332.94" width="6.9" height="13.2" fill="#e2e2e2"/><rect x="205.75" y="332.94" width="6.9" height="13.2" fill="#e2e2e2"/><rect x="213.74" y="332.94" width="6.9" height="13.2" fill="#b0b0b0"/><rect x="221.73" y="332.94" width="6.9" height="13.2" fill="#e2e2e2"/><rect x="229.72" y="332.94" width="6.9" height="13.2" fill="#e2e2e2"/><rect x="237.71" y="332.94" width="6.9" height="13.2" fill="#e2e2e2"/><rect x="245.70" y="332.94" width="6.9" height="13.2" fill="#e2e2e2"/><rect x="253.69" y="332.94" width="6.9" height="13.2" fill="#e2e2e2"/><rect x="261.68" y="332.94" width="6.9" height="13.2" fill="#b0b0b0"/><rect x="269.67" y="332.94" width="6.9" height="13.2" fill="#e2e2e2"/><rect x="277.66" y="332.94" width="6.9" height="13.2" fill="#e2e2e2"/><rect x="285.65" y="332.94" width="6.9" height="13.2" fill="#e2e2e2"/><rect x="293.64" y="332.94" width="6.9" height="13.2" fill="#e2e2e2"/><rect x="301.63" y="332.94" width="6.9" height="13.2" fill="#e2e2e2"/><rect x="309.62" y="332.94" width="6.9" height="13.2" fill="#b0b0b0"/><rect x="317.61" y="332.94" width="6.9" height="13.2" fill="#e2e2e2"/><rect x="325.60" y="332.94" width="6.9" height="13.2" fill="#e2e2e2"/><rect x="333.59" y="332.94" width="6.9" height="13.2" fill="#e2e2e2"/><rect x="341.58" y="332.94" width="6.9" height="13.2" fill="#e2e2e2"/><rect x="349.57" y="332.94" width="6.9" height="13.2" fill="#e2e2e2"/><rect x="357.56" y="332.94" width="6.9" height="13.2" fill="#b0b0b0"/><rect x="365.55" y="332.94" width="6.9" height="13.2" fill="#e2e2e2"/><rect x="373.54" y="332.94" width="6.9" height="13.2" fill="#e2e2e2"/><rect x="381.53" y="332.94" width="6.9" height="13.2" fill="#e2e2e2"/><rect x="389.52" y="332.94" width="6.9" height="13.2" fill="#e2e2e2"/><rect x="397.51" y="332.94" width="6.9" height="13.2" fill="#e2e2e2"/><rect x="405.50" y="332.94" width="6.9" height="13.2" fill="#b0b0b0"/><rect x="413.49" y="332.94" width="6.9" height="13.2" fill="#e2e2e2"/><rect x="421.48" y="332.94" width="6.9" height="13.2" fill="#e2e2e2"/><rect x="429.47" y="332.94" width="6.9" height="13.2" fill="#e2e2e2"/><rect x="437.46" y="332.94" width="6.9" height="13.2" fill="#e2e2e2"/><rect x="445.45" y="332.94" width="6.9" height="13.2" fill="#b0b0b0"/><rect x="453.44" y="332.94" width="6.9" height="13.2" fill="#e2e2e2"/><rect x="461.43" y="332.94" width="6.9" height="13.2" fill="#e2e2e2"/><rect x="469.42" y="332.94" width="6.9" height="13.2" fill="#e2e2e2"/><rect x="477.41" y="332.94" width="6.9" height="13.2" fill="#e2e2e2"/><rect x="485.40" y="332.94" width="6.9" height="13.2" fill="#e2e2e2"/><rect x="493.39" y="332.94" width="6.9" height="13.2" fill="#b0b0b0"/><rect x="501.38" y="332.94" width="6.9" height="13.2" fill="#e2e2e2"/><rect x="509.37" y="332.94" width="6.9" height="13.2" fill="#e2e2e2"/><rect x="6.00" y="347.43" width="6.9" height="13.2" fill="#b0b0b0"/><rect x="13.99" y="347.43" width="6.9" height="13.2" fill="#e2e2e2"/><rect x="21.98" y="347.43" width="6.9" height="13.2" fill="#e2e2e2"/><rect x="29.97" y="347.43" width="6.9" height="13.2" fill="#e2e2e2"/><rect x="37.96" y="347.43" width="6.9" height="13.2" fill="#e2e2e2"/><rect x="45.95" y="347.43" width="6.9" height="13.2" fill="#b0b0b0"/><rect x="53.94" y="347.43" width="6.9" height="13.2" fill="#e2e2e2"/><rect x="61.93" y="347.43" width="6.9" height="13.2" fill="#e2e2e2"/><rect x="69.92" y="347.43" width="6.9" height="13.2" fill="#e2e2e2"/><rect x="77.91" y="347.43" width="6.9" height="13.2" fill="#e2e2e2"/><rect x="85.90" y="347.43" width="6.9" height="13.2" fill="#e2e2e2"/><rect x="93.89" y="347.43" width="6.9" height="13.2" fill="#b0b0b0"/><rect x="101.88" y="347.43" width="6.9" height="13.2" fill="#e2e2e2"/><rect x="109.87" y="347.43" width="6.9" height="13.2" fill="#e2e2e2"/><rect x="117.86" y="347.43" width="6.9" height="13.2" fill="#e2e2e2"/><rect x="125.85" y="347.43" width="6.9" height="13.2" fill="#e2e2e2"/><rect x="133.84" y="347.43" width="6.9" height="13.2" fill="#e2e2e2"/><rect x="141.83" y="347.43" width="6.9" height="13.2" fill="#b0b0b0"/><rect x="149.82" y="347.43" width="6.9" height="13.2" fill="#e2e2e2"/><rect x="157.81" y="347.43" width="6.9" height="13.2" fill="#e2e2e2"/><rect x="165.80" y="347.43" width="6.9" height="13.2" fill="#e2e2e2"/><rect x="173.79" y="347.43" width="6.9" height="13.2" fill="#e2e2e2"/><rect x="181.78" y="347.43" width="6.9" height="13.2" fill="#e2e2e2"/><rect x="189.77" y="347.43" width="6.9" height="13.2" fill="#b0b0b0"/><rect x="197.76" y="347.43" width="6.9" height="13.2" fill="#e2e2e2"/><rect x="205.75" y="347.43" width="6.9" height="13.2" fill="#e2e2e2"/><rect x="213.74" y="347.43" width="6.9" height="13.2" fill="#e2e2e2"/><rect x="221.73" y="347.43" width="6.9" height="13.2" fill="#e2e2e2"/><rect x="229.72" y="347.43" width="6.9" height="13.2" fill="#e2e2e2"/><rect x="237.71" y="347.43" width="6.9" height="13.2" fill="#b0b0b0"/><rect x="245.70" y="347.43" width="6.9" height="13.2" fill="#e2e2e2"/><rect x="253.69" y="347.43" width="6.9" height="13.2" fill="#e2e2e2"/><rect x="261.68" y="347.43" width="6.9" height="13.2" fill="#e2e2e2"/><rect x="269.67" y="347.43" width="6.9" height="13.2" fill="#e2e2e2"/><rect x="277.66" y="347.43" width="6.9" height="13.2" fill="#e2e2e2"/><rect x="285.65" y="347.43" width="6.9" height="13.2" fill="#b0b0b0"/><rect x="293.64" y="347.43" width="6.9" height="13.2" fill="#e2e2e2"/><rect x="301.63" y="347.43" width="6.9" height="13.2" fill="#e2e2e2"/><rect x="309.62" y="347.43" width="6.9" height="13.2" fill="#e2e2e2"/><rect x="317.61" y="347.43" width="6.9" height="13.2" fill="#e2e2e2"/><rect x="325.60" y="347.43" width="6.9" height="13.2" fill="#b0b0b0"/><rect x="333.59" y="347.43" width="6.9" height="13.2" fill="#e2e2e2"/><rect x="341.58" y="347.43" width="6.9" height="13.2" fill="#e2e2e2"/><rect x="349.57" y="347.43" width="6.9" height="13.2" fill="#e2e2e2"/><rect x="357.56" y="347.43" width="6.9" height="13.2" fill="#e2e2e2"/><rect x="365.55" y="347.43" width="6.9" height="13.2" fill="#e2e2e2"/><rect x="373.54" y="347.43" width="6.9" height="13.2" fill="#b0b0b0"/><rect x="381.53" y="347.43" width="6.9" height="13.2" fill="#e2e2e2"/><rect x="389.52" y="347.43" width="6.9" height="13.2" fill="#e2e2e2"/><rect x="397.51" y="347.43" width="6.9" height="13.2" fill="#e2e2e2"/><rect x="405.50" y="347.43" width="6.9" height="13.2" fill="#e2e2e2"/><rect x="413.49" y="347.43" width="6.9" height="13.2" fill="#e2e2e2"/><rect x="421.48" y="347.43" width="6.9" height="13.2" fill="#b0b0b0"/><rect x="429.47" y="347.43" width="6.9" height="13.2" fill="#e2e2e2"/><rect x="437.46" y="347.43" width="6.9" height="13.2" fill="#e2e2e2"/><rect x="445.45" y="347.43" width="6.9" height="13.2" fill="#e2e2e2"/><rect x="453.44" y="347.43" width="6.9" height="13.2" fill="#e2e2e2"/><rect x="461.43" y="347.43" width="6.9" height="13.2" fill="#e2e2e2"/><rect x="469.42" y="347.43" width="6.9" height="13.2" fill="#b0b0b0"/><rect x="477.41" y="347.43" width="6.9" height="13.2" fill="#e2e2e2"/><rect x="485.40" y="347.43" width="6.9" height="13.2" fill="#e2e2e2"/><rect x="493.39" y="347.43" width="6.9" height="13.2" fill="#e2e2e2"/><rect x="501.38" y="347.43" width="6.9" height="13.2" fill="#e2e2e2"/><rect x="509.37" y="347.43" width="6.9" height="13.2" fill="#e2e2e2"/><rect x="6.00" y="361.93" width="6.9" height="13.2" fill="#e2e2e2"/><rect x="13.99" y="361.93" width="6.9" height="13.2" fill="#e2e2e2"/><rect x="21.98" y="361.93" width="6.9" height="13.2" fill="#b0b0b0"/><rect x="29.97" y="361.93" width="6.9" height="13.2" fill="#e2e2e2"/><rect x="37.96" y="361.93" width="6.9" height="13.2" fill="#e2e2e2"/><rect x="45.95" y="361.93" width="6.9" height="13.2" fill="#e2e2e2"/><rect x="53.94" y="361.93" width="6.9" height="13.2" fill="#e2e2e2"/><rect x="61.93" y="361.93" width="6.9" height="13.2" fill="#e2e2e2"/><rect x="69.92" y="361.93" width="6.9" height="13.2" fill="#b0b0b0"/><rect x="77.91" y="361.93" width="6.9" height="13.2" fill="#e2e2e2"/><rect x="85.90" y="361.93" width="6.9" height="13.2" fill="#e2e2e2"/><rect x="93.89" y="361.93" width="6.9" height="13.2" fill="#e2e2e2"/><rect x="101.88" y="361.93" width="6.9" height="13.2" fill="#e2e2e2"/><rect x="109.87" y="361.93" width="6.9" height="13.2" fill="#e2e2e2"/><rect x="117.86" y="361.93" width="6.9" height="13.2" fill="#b0b0b0"/><rect x="125.85" y="361.93" width="6.9" height="13.2" fill="#e2e2e2"/><rect x="133.84" y="361.93" width="6.9" height="13.2" fill="#e2e2e2"/><rect x="141.83" y="361.93" width="6.9" height="13.2" fill="#e2e2e2"/><rect x="149.82" y="361.93" width="6.9" height="13.2" fill="#e2e2e2"/><rect x="157.81" y="361.93" width="6.9" height="13.2" fill="#b0b0b0"/><rect x="165.80" y="361.93" width="6.9" height="13.2" fill="#e2e2e2"/><rect x="173.79" y="361.93" width="6.9" height="13.2" fill="#e2e2e2"/><rect x="181.78" y="361.93" width="6.9" height="13.2" fill="#e2e2e2"/><rect x="189.77" y="361.93" width="6.9" height="13.2" fill="#e2e2e2"/><rect x="197.76" y="361.93" width="6.9" height="13.2" fill="#e2e2e2"/><rect x="205.75" y="361.93" width="6.9" height="13.2" fill="#b0b0b0"/><rect x="213.74" y="361.93" width="6.9" height="13.2" fill="#e2e2e2"/><rect x="221.73" y="361.93" width="6.9" height="13.2" fill="#e2e2e2"/><rect x="229.72" y="361.93" width="6.9" height="13.2" fill="#e2e2e2"/><rect x="237.71" y="361.93" width="6.9" height="13.2" fill="#e2e2e2"/><rect x="245.70" y="361.93" width="6.9" height="13.2" fill="#e2e2e2"/><rect x="253.69" y="361.93" width="6.9" height="13.2" fill="#b0b0b0"/><rect x="261.68" y="361.93" width="6.9" height="13.2" fill="#e2e2e2"/><rect x="269.67" y="361.93" width="6.9" height="13.2" fill="#e2e2e2"/><rect x="277.66" y="361.93" width="6.9" height="13.2" fill="#e2e2e2"/><rect x="285.65" y="361.93" width="6.9" height="13.2" fill="#e2e2e2"/><rect x="293.64" y="361.93" width="6.9" height="13.2" fill="#e2e2e2"/><rect x="301.63" y="361.93" width="6.9" height="13.2" fill="#b0b0b0"/><rect x="309.62" y="361.93" width="6.9" height="13.2" fill="#e2e2e2"/><rect x="317.61" y="361.93" width="6.9" height="13.2" fill="#e2e2e2"/><rect x="325.60" y="361.93" width="6.9" height="13.2" fill="#e2e2e2"/><rect x="333.59" y="361.93" width="6.9" height="13.2" fill="#e2e2e2"/><rect x="341.58" y="361.93" width="6.9" height="13.2" fill="#e2e2e2"/><rect x="349.57" y="361.93" width="6.9" height="13.2" fill="#b0b0b0"/><rect x="357.56" y="361.93" width="6.9" height="13.2" fill="#e2e2e2"/><rect x="365.55" y="361.93" width="6.9" height="13.2" fill="#e2e2e2"/><rect x="373.54" y="361.93" width="6.9" height="13.2" fill="#e2e2e2"/><rect x="381.53" y="361.93" width="6.9" height="13.2" fill="#e2e2e2"/><rect x="389.52" y="361.93" width="6.9" height="13.2" fill="#b0b0b0"/><rect x="397.51" y="361.93" width="6.9" height="13.2" fill="#e2e2e2"/><rect x="405.50" y="361.93" width="6.9" height="13.2" fill="#e2e2e2"/><rect x="413.49" y="361.93" width="6.9" height="13.2" fill="#e2e2e2"/><rect x="421.48" y="361.93" width="6.9" height="13.2" fill="#e2e2e2"/><rect x="429.47" y="361.93" width="6.9" height="13.2" fill="#e2e2e2"/><rect x="437.46" y="361.93" width="6.9" height="13.2" fill="#b0b0b0"/><rect x="445.45" y="361.93" width="6.9" height="13.2" fill="#e2e2e2"/><rect x="453.44" y="361.93" width="6.9" height="13.2" fill="#e2e2e2"/><rect x="461.43" y="361.93" width="6.9" height="13.2" fill="#e2e2e2"/><rect x="469.42" y="361.93" width="6.9" height="13.2" fill="#e2e2e2"/><rect x="477.41" y="361.93" width="6.9" height="13.2" fill="#e2e2e2"/><rect x="485.40" y="361.93" width="6.9" height="13.2" fill="#b0b0b0"/><rect x="493.39" y="361.93" width="6.9" height="13.2" fill="#e2e2e2"/><rect x="501.38" y="361.93" width="6.9" height="13.2" fill="#e2e2e2"/><rect x="509.37" y="361.93" width="6.9" height="13.2" fill="#e2e2e2"/><rect x="6.00" y="376.42" width="6.9" height="13.2" fill="#e2e2e2"/><rect x="13.99" y="376.42" width="6.9" height="13.2" fill="#e2e2e2"/><rect x="21.98" y="376.42" width="6.9" height="13.2" fill="#e2e2e2"/><rect x="29.97" y="376.42" width="6.9" height="13.2" fill="#e2e2e2"/><rect x="37.96" y="376.42" width="6.9" height="13.2" fill="#b0b0b0"/><rect x="45.95" y="376.42" width="6.9" height="13.2" fill="#e2e2e2"/><rect x="53.94" y="376.42" width="6.9" height="13.2" fill="#e2e2e2"/><rect x="61.93" y="376.42" width="6.9" height="13.2" fill="#e2e2e2"/><rect x="69.92" y="376.42" width="6.9" height="13.2" fill="#e2e2e2"/><rect x="77.91" y="376.42" width="6.9" height="13.2" fill="#e2e2e2"/><rect x="85.90" y="376.42" width="6.9" height="13.2" fill="#b0b0b0"/><rect x="93.89" y="376.42" width="6.9" height="13.2" fill="#e2e2e2"/><rect x="101.88" y="376.42" width="6.9" height="13.2" fill="#e2e2e2"/><rect x="109.87" y="376.42" width="6.9" height="13.2" fill="#e2e2e2"/><rect x="117.86" y="376.42" width="6.9" height="13.2" fill="#e2e2e2"/><rect x="125.85" y="376.42" width="6.9" height="13.2" fill="#e2e2e2"/><rect x="133.84" y="376.42" width="6.9" height="13.2" fill="#e2e2e2"/><rect x="141.83" y="376.42" width="6.9" height="13.2" fill="#b0b0b0"/><rect x="149.82" y="376.42" width="6.9" height="13.2" fill="#e2e2e2"/><rect x="157.81" y="376.42" width="6.9" height="13.2" fill="#e2e2e2"/><rect x="165.80" y="376.42" width="6.9" height="13.2" fill="#e2e2e2"/><rect x="173.79" y="376.42" width="6.9" height="13.2" fill="#e2e2e2"/><rect x="181.78" y="376.42" width="6.9" height="13.2" fill="#e2e2e2"/><rect x="189.77" y="376.42" width="6.9" height="13.2" fill="#b0b0b0"/><rect x="197.76" y="376.42" width="6.9" height="13.2" fill="#e2e2e2"/><rect x="205.75" y="376.42" width="6.9" height="13.2" fill="#e2e2e2"/><rect x="213.74" y="376.42" width="6.9" height="13.2" fill="#e2e2e2"/><rect x="221.73" y="376.42" width="6.9" height="13.2" fill="#e2e2e2"/><rect x="229.72" y="376.42" width="6.9" height="13.2" fill="#e2e2e2"/><rect x="237.71" y="376.42" width="6.9" height="13.2" fill="#b0b0b0"/><rect x="245.70" y="376.42" width="6.9" height="13.2" fill="#e2e2e2"/><rect x="253.69" y="376.42" width="6.9" height="13.2" fill="#e2e2e2"/><rect x="261.68" y="376.42" width="6.9" height="13.2" fill="#e2e2e2"/><rect x="269.67" y="376.42" width="6.9" height="13.2" fill="#e2e2e2"/><rect x="277.66" y="376.42" width="6.9" height="13.2" fill="#e2e2e2"/><rect x="285.65" y="376.42" width="6.9" height="13.2" fill="#b0b0b0"/><rect x="293.64" y="376.42" width="6.9" height="13.2" fill="#e2e2e2"/><rect x="301.63" y="376.42" width="6.9" height="13.2" fill="#e2e2e2"/><rect x="309.62" y="376.42" width="6.9" height="13.2" fill="#e2e2e2"/><rect x="317.61" y="376.42" width="6.9" height="13.2" fill="#e2e2e2"/><rect x="325.60" y="376.42" width="6.9" height="13.2" fill="#e2e2e2"/><rect x="333.59" y="376.42" width="6.9" height="13.2" fill="#b0b0b0"/><rect x="341.58" y="376.42" width="6.9" height="13.2" fill="#e2e2e2"/><rect x="349.57" y="376.42" width="6.9" height="13.2" fill="#e2e2e2"/><rect x="357.56" y="376.42" width="6.9" height="13.2" fill="#e2e2e2"/><rect x="365.55" y="376.42" width="6.9" height="13.2" fill="#e2e2e2"/><rect x="373.54" y="376.42" width="6.9" height="13.2" fill="#e2e2e2"/><rect x="381.53" y="376.42" width="6.9" height="13.2" fill="#b0b0b0"/><rect x="389.52" y="376.42" width="6.9" height="13.2" fill="#e2e2e2"/><rect x="397.51" y="376.42" width="6.9" height="13.2" fill="#e2e2e2"/><rect x="405.50" y="376.42" width="6.9" height="13.2" fill="#e2e2e2"/><rect x="413.49" y="376.42" width="6.9" height="13.2" fill="#e2e2e2"/><rect x="421.48" y="376.42" width="6.9" height="13.2" fill="#e2e2e2"/><rect x="429.47" y="376.42" width="6.9" height="13.2" fill="#b0b0b0"/><rect x="437.46" y="376.42" width="6.9" height="13.2" fill="#e2e2e2"/><rect x="445.45" y="376.42" width="6.9" height="13.2" fill="#e2e2e2"/><rect x="453.44" y="376.42" width="6.9" height="13.2" fill="#e2e2e2"/><rect x="461.43" y="376.42" width="6.9" height="13.2" fill="#e2e2e2"/><rect x="469.42" y="376.42" width="6.9" height="13.2" fill="#e2e2e2"/><rect x="477.41" y="376.42" width="6.9" height="13.2" fill="#b0b0b0"/><rect x="485.40" y="376.42" width="6.9" height="13.2" fill="#e2e2e2"/><rect x="493.39" y="376.42" width="6.9" height="13.2" fill="#e2e2e2"/><rect x="501.38" y="376.42" width="6.9" height="13.2" fill="#e2e2e2"/><rect x="509.37" y="376.42" width="6.9" height="13.2" fill="#e2e2e2"/><rect x="6.00" y="390.92" width="6.9" height="13.2" fill="#e2e2e2"/><rect x="13.99" y="390.92" width="6.9" height="13.2" fill="#e2e2e2"/><rect x="21.98" y="390.92" width="6.9" height="13.2" fill="#e2e2e2"/><rect x="29.97" y="390.92" width="6.9" height="13.2" fill="#b0b0b0"/><rect x="37.96" y="390.92" width="6.9" height="13.2" fill="#e2e2e2"/><rect x="45.95" y="390.92" width="6.9" height="13.2" fill="#e2e2e2"/><rect x="53.94" y="390.92" width="6.9" height="13.2" fill="#e2e2e2"/><rect x="61.93" y="390.92" width="6.9" height="13.2" fill="#e2e2e2"/><rect x="69.92" y="390.92" width="6.9" height="13.2" fill="#e2e2e2"/><rect x="77.91" y="390.92" width="6.9" height="13.2" fill="#b0b0b0"/><rect x="85.90" y="390.92" width="6.9" height="13.2" fill="#e2e2e2"/><rect x="93.89" y="390.92" width="6.9" height="13.2" fill="#e2e2e2"/><rect x="101.88" y="390.92" width="6.9" height="13.2" fill="#e2e2e2"/><rect x="109.87" y="390.92" width="6.9" height="13.2" fill="#e2e2e2"/><rect x="117.86" y="390.92" width="6.9" height="13.2" fill="#e2e2e2"/><rect x="125.85" y="390.92" width="6.9" height="13.2" fill="#b0b0b0"/><rect x="133.84" y="390.92" width="6.9" height="13.2" fill="#e2e2e2"/><rect x="141.83" y="390.92" width="6.9" height="13.2" fill="#e2e2e2"/><rect x="149.82" y="390.92" width="6.9" height="13.2" fill="#e2e2e2"/><rect x="157.81" y="390.92" width="6.9" height="13.2" fill="#e2e2e2"/><rect x="165.80" y="390.92" width="6.9" height="13.2" fill="#e2e2e2"/><rect x="173.79" y="390.92" width="6.9" height="13.2" fill="#b0b0b0"/><rect x="181.78" y="390.92" width="6.9" height="13.2" fill="#e2e2e2"/><rect x="189.77" y="390.92" width="6.9" height="13.2" fill="#e2e2e2"/><rect x="197.76" y="390.92" width="6.9" height="13.2" fill="#e2e2e2"/><rect x="205.75" y="390.92" width="6.9" height="13.2" fill="#e2e2e2"/><rect x="213.74" y="390.92" width="6.9" height="13.2" fill="#e2e2e2"/><rect x="221.73" y="390.92" width="6.9" height="13.2" fill="#b0b0b0"/><rect x="229.72" y="390.92" width="6.9" height="13.2" fill="#e2e2e2"/><rect x="237.71" y="390.92" width="6.9" height="13.2" fill="#e2e2e2"/><rect x="245.70" y="390.92" width="6.9" height="13.2" fill="#e2e2e2"/><rect x="253.69" y="390.92" width="6.9" height="13.2" fill="#e2e2e2"/><rect x="261.68" y="390.92" width="6.9" height="13.2" fill="#e2e2e2"/><rect x="269.67" y="390.92" width="6.9" height="13.2" fill="#e2e2e2"/><rect x="277.66" y="390.92" width="6.9" height="13.2" fill="#b0b0b0"/><rect x="285.65" y="390.92" width="6.9" height="13.2" fill="#e2e2e2"/><rect x="293.64" y="390.92" width="6.9" height="13.2" fill="#e2e2e2"/><rect x="301.63" y="390.92" width="6.9" height="13.2" fill="#e2e2e2"/><rect x="309.62" y="390.92" width="6.9" height="13.2" fill="#e2e2e2"/><rect x="317.61" y="390.92" width="6.9" height="13.2" fill="#b0b0b0"/><rect x="325.60" y="390.92" width="6.9" height="13.2" fill="#e2e2e2"/><rect x="333.59" y="390.92" width="6.9" height="13.2" fill="#e2e2e2"/><rect x="341.58" y="390.92" width="6.9" height="13.2" fill="#e2e2e2"/><rect x="349.57" y="390.92" width="6.9" height="13.2" fill="#e2e2e2"/><rect x="357.56" y="390.92" width="6.9" height="13.2" fill="#e2e2e2"/><rect x="365.55" y="390.92" width="6.9" height="13.2" fill="#b0b0b0"/><rect x="373.54" y="390.92" width="6.9" height="13.2" fill="#e2e2e2"/><rect x="381.53" y="390.92" width="6.9" height="13.2" fill="#e2e2e2"/><rect x="389.52" y="390.92" width="6.9" height="13.2" fill="#e2e2e2"/><rect x="397.51" y="390.92" width="6.9" height="13.2" fill="#e2e2e2"/><rect x="405.50" y="390.92" width="6.9" height="13.2" fill="#e2e2e2"/><rect x="413.49" y="390.92" width="6.9" height="13.2" fill="#e2e2e2"/><rect x="421.48" y="390.92" width="6.9" height="13.2" fill="#b0b0b0"/><rect x="429.47" y="390.92" width="6.9" height="13.2" fill="#e2e2e2"/><rect x="437.46" y="390.92" width="6.9" height="13.2" fill="#e2e2e2"/><rect x="445.45" y="390.92" width="6.9" height="13.2" fill="#e2e2e2"/><rect x="453.44" y="390.92" width="6.9" height="13.2" fill="#e2e2e2"/><rect x="461.43" y="390.92" width="6.9" height="13.2" fill="#e2e2e2"/><rect x="469.42" y="390.92" width="6.9" height="13.2" fill="#b0b0b0"/><rect x="477.41" y="390.92" width="6.9" height="13.2" fill="#e2e2e2"/><rect x="485.40" y="390.92" width="6.9" height="13.2" fill="#e2e2e2"/><rect x="493.39" y="390.92" width="6.9" height="13.2" fill="#e2e2e2"/><rect x="501.38" y="390.92" width="6.9" height="13.2" fill="#e2e2e2"/><rect x="509.37" y="390.92" width="6.9" height="13.2" fill="#e2e2e2"/><rect x="6.00" y="405.42" width="6.9" height="13.2" fill="#e2e2e2"/><rect x="13.99" y="405.42" width="6.9" height="13.2" fill="#e2e2e2"/><rect x="21.98" y="405.42" width="6.9" height="13.2" fill="#b0b0b0"/><rect x="29.97" y="405.42" width="6.9" height="13.2" fill="#e2e2e2"/><rect x="37.96" y="405.42" width="6.9" height="13.2" fill="#e2e2e2"/><rect x="45.95" y="405.42" width="6.9" height="13.2" fill="#e2e2e2"/><rect x="53.94" y="405.42" width="6.9" height="13.2" fill="#e2e2e2"/><rect x="61.93" y="405.42" width="6.9" height="13.2" fill="#e2e2e2"/><rect x="69.92" y="405.42" width="6.9" height="13.2" fill="#b0b0b0"/><rect x="77.91" y="405.42" width="6.9" height="13.2" fill="#e2e2e2"/><rect x="85.90" y="405.42" width="6.9" height="13.2" fill="#e2e2e2"/><rect x="93.89" y="405.42" width="6.9" height="13.2" fill="#e2e2e2"/><rect x="101.88" y="405.42" width="6.9" height="13.2" fill="#e2e2e2"/><rect x="109.87" y="405.42" width="6.9" height="13.2" fill="#e2e2e2"/><rect x="117.86" y="405.42" width="6.9" height="13.2" fill="#b0b0b0"/><rect x="125.85" y="405.42" width="6.9" height="13.2" fill="#e2e2e2"/><rect x="133.84" y="405.42" width="6.9" height="13.2" fill="#e2e2e2"/><rect x="141.83" y="405.42" width="6.9" height="13.2" fill="#e2e2e2"/><rect x="149.82" y="405.42" width="6.9" height="13.2" fill="#e2e2e2"/><rect x="157.81" y="405.42" width="6.9" height="13.2" fill="#e2e2e2"/><rect x="165.80" y="405.42" width="6.9" height="13.2" fill="#b0b0b0"/><rect x="173.79" y="405.42" width="6.9" height="13.2" fill="#e2e2e2"/><rect x="181.78" y="405.42" width="6.9" height="13.2" fill="#e2e2e2"/><rect x="189.77" y="405.42" width="6.9" height="13.2" fill="#e2e2e2"/><rect x="197.76" y="405.42" width="6.9" height="13.2" fill="#e2e2e2"/><rect x="205.75" y="405.42" width="6.9" height="13.2" fill="#e2e2e2"/><rect x="213.74" y="405.42" width="6.9" height="13.2" fill="#b0b0b0"/><rect x="221.73" y="405.42" width="6.9" height="13.2" fill="#e2e2e2"/><rect x="229.72" y="405.42" width="6.9" height="13.2" fill="#e2e2e2"/><rect x="237.71" y="405.42" width="6.9" height="13.2" fill="#e2e2e2"/><rect x="245.70" y="405.42" width="6.9" height="13.2" fill="#e2e2e2"/><rect x="253.69" y="405.42" width="6.9" height="13.2" fill="#e2e2e2"/><rect x="261.68" y="405.42" width="6.9" height="13.2" fill="#b0b0b0"/><rect x="269.67" y="405.42" width="6.9" height="13.2" fill="#e2e2e2"/><rect x="277.66" y="405.42" width="6.9" height="13.2" fill="#e2e2e2"/><rect x="285.65" y="405.42" width="6.9" height="13.2" fill="#e2e2e2"/><rect x="293.64" y="405.42" width="6.9" height="13.2" fill="#e2e2e2"/><rect x="301.63" y="405.42" width="6.9" height="13.2" fill="#e2e2e2"/><rect x="309.62" y="405.42" width="6.9" height="13.2" fill="#b0b0b0"/><rect x="317.61" y="405.42" width="6.9" height="13.2" fill="#e2e2e2"/><rect x="325.60" y="405.42" width="6.9" height="13.2" fill="#e2e2e2"/><rect x="333.59" y="405.42" width="6.9" height="13.2" fill="#e2e2e2"/><rect x="341.58" y="405.42" width="6.9" height="13.2" fill="#e2e2e2"/><rect x="349.57" y="405.42" width="6.9" height="13.2" fill="#e2e2e2"/><rect x="357.56" y="405.42" width="6.9" height="13.2" fill="#b0b0b0"/><rect x="365.55" y="405.42" width="6.9" height="13.2" fill="#e2e2e2"/><rect x="373.54" y="405.42" width="6.9" height="13.2" fill="#e2e2e2"/><rect x="381.53" y="405.42" width="6.9" height="13.2" fill="#e2e2e2"/><rect x="389.52" y="405.42" width="6.9" height="13.2" fill="#e2e2e2"/><rect x="397.51" y="405.42" width="6.9" height="13.2" fill="#e2e2e2"/><rect x="405.50" y="405.42" width="6.9" height="13.2" fill="#b0b0b0"/><rect x="413.49" y="405.42" width="6.9" height="13.2" fill="#e2e2e2"/><rect x="421.48" y="405.42" width="6.9" height="13.2" fill="#e2e2e2"/><rect x="429.47" y="405.42" width="6.9" height="13.2" fill="#e2e2e2"/><rect x="437.46" y="405.42" width="6.9" height="13.2" fill="#e2e2e2"/><rect x="445.45" y="405.42" width="6.9" height="13.2" fill="#e2e2e2"/><rect x="453.44" y="405.42" width="6.9" height="13.2" fill="#b0b0b0"/><rect x="461.43" y="405.42" width="6.9" height="13.2" fill="#e2e2e2"/><rect x="469.42" y="405.42" width="6.9" height="13.2" fill="#e2e2e2"/><rect x="477.41" y="405.42" width="6.9" height="13.2" fill="#e2e2e2"/><rect x="485.40" y="405.42" width="6.9" height="13.2" fill="#e2e2e2"/><rect x="493.39" y="405.42" width="6.9" height="13.2" fill="#e2e2e2"/><rect x="501.38" y="405.42" width="6.9" height="13.2" fill="#b0b0b0"/><rect x="509.37" y="405.42" width="6.9" height="13.2" fill="#e2e2e2"/><rect x="6.00" y="419.91" width="6.9" height="13.2" fill="#e2e2e2"/><rect x="13.99" y="419.91" width="6.9" height="13.2" fill="#e2e2e2"/><rect x="21.98" y="419.91" width="6.9" height="13.2" fill="#b0b0b0"/><rect x="29.97" y="419.91" width="6.9" height="13.2" fill="#e2e2e2"/><rect x="37.96" y="419.91" width="6.9" height="13.2" fill="#e2e2e2"/><rect x="45.95" y="419.91" width="6.9" height="13.2" fill="#e2e2e2"/><rect x="53.94" y="419.91" width="6.9" height="13.2" fill="#b0b0b0"/><rect x="61.93" y="419.91" width="6.9" height="13.2" fill="#e2e2e2"/><rect x="69.92" y="419.91" width="6.9" height="13.2" fill="#e2e2e2"/><rect x="77.91" y="419.91" width="6.9" height="13.2" fill="#e2e2e2"/><rect x="85.90" y="419.91" width="6.9" height="13.2" fill="#e2e2e2"/><rect x="93.89" y="419.91" width="6.9" height="13.2" fill="#e2e2e2"/><rect x="101.88" y="419.91" width="6.9" height="13.2" fill="#b0b0b0"/><rect x="109.87" y="419.91" width="6.9" height="13.2" fill="#e2e2e2"/><rect x="117.86" y="419.91" width="6.9" height="13.2" fill="#e2e2e2"/><rect x="125.85" y="419.91" width="6.9" height="13.2" fill="#e2e2e2"/><rect x="133.84" y="419.91" width="6.9" height="13.2" fill="#e2e2e2"/><rect x="141.83" y="419.91" width="6.9" height="13.2" fill="#e2e2e2"/><rect x="149.82" y="419.91" width="6.9" height="13.2" fill="#b0b0b0"/><rect x="157.81" y="419.91" width="6.9" height="13.2" fill="#e2e2e2"/><rect x="165.80" y="419.91" width="6.9" height="13.2" fill="#e2e2e2"/><rect x="173.79" y="419.91" width="6.9" height="13.2" fill="#e2e2e2"/><rect x="181.78" y="419.91" width="6.9" height="13.2" fill="#e2e2e2"/><rect x="189.77" y="419.91" width="6.9" height="13.2" fill="#e2e2e2"/><rect x="197.76" y="419.91" width="6.9" height="13.2" fill="#e2e2e2"/><rect x="205.75" y="419.91" width="6.9" height="13.2" fill="#b0b0b0"/><rect x="213.74" y="419.91" width="6.9" height="13.2" fill="#e2e2e2"/><rect x="221.73" y="419.91" width="6.9" height="13.2" fill="#e2e2e2"/><rect x="229.72" y="419.91" width="6.9" height="13.2" fill="#e2e2e2"/><rect x="237.71" y="419.91" width="6.9" height="13.2" fill="#e2e2e2"/><rect x="245.70" y="419.91" width="6.9" height="13.2" fill="#e2e2e2"/><rect x="253.69" y="419.91" width="6.9" height="13.2" fill="#b0b0b0"/><rect x="261.68" y="419.91" width="6.9" height="13.2" fill="#e2e2e2"/><rect x="269.67" y="419.91" width="6.9" height="13.2" fill="#e2e2e2"/><rect x="277.66" y="419.91" width="6.9" height="13.2" fill="#e2e2e2"/><rect x="285.65" y="419.91" width="6.9" height="13.2" fill="#e2e2e2"/><rect x="293.64" y="419.91" width="6.9" height="13.2" fill="#b0b0b0"/><rect x="301.63" y="419.91" width="6.9" height="13.2" fill="#e2e2e2"/><rect x="309.62" y="419.91" width="6.9" height="13.2" fill="#e2e2e2"/><rect x="317.61" y="419.91" width="6.9" height="13.2" fill="#e2e2e2"/><rect x="325.60" y="419.91" width="6.9" height="13.2" fill="#e2e2e2"/><rect x="333.59" y="419.91" width="6.9" height="13.2" fill="#e2e2e2"/><rect x="341.58" y="419.91" width="6.9" height="13.2" fill="#e2e2e2"/><rect x="349.57" y="419.91" width="6.9" height="13.2" fill="#b0b0b0"/><rect x="357.56" y="419.91" width="6.9" height="13.2" fill="#e2e2e2"/><rect x="365.55" y="419.91" width="6.9" height="13.2" fill="#e2e2e2"/><rect x="373.54" y="419.91" width="6.9" height="13.2" fill="#e2e2e2"/><rect x="381.53" y="419.91" width="6.9" height="13.2" fill="#e2e2e2"/><rect x="389.52" y="419.91" width="6.9" height="13.2" fill="#e2e2e2"/><rect x="397.51" y="419.91" width="6.9" height="13.2" fill="#b0b0b0"/><rect x="405.50" y="419.91" width="6.9" height="13.2" fill="#e2e2e2"/><rect x="413.49" y="419.91" width="6.9" height="13.2" fill="#e2e2e2"/><rect x="421.48" y="419.91" width="6.9" height="13.2" fill="#e2e2e2"/><rect x="429.47" y="419.91" width="6.9" height="13.2" fill="#e2e2e2"/><rect x="437.46" y="419.91" width="6.9" height="13.2" fill="#e2e2e2"/><rect x="445.45" y="419.91" width="6.9" height="13.2" fill="#b0b0b0"/><rect x="453.44" y="419.91" width="6.9" height="13.2" fill="#e2e2e2"/><rect x="461.43" y="419.91" width="6.9" height="13.2" fill="#e2e2e2"/><rect x="469.42" y="419.91" width="6.9" height="13.2" fill="#e2e2e2"/><rect x="477.41" y="419.91" width="6.9" height="13.2" fill="#e2e2e2"/><rect x="485.40" y="419.91" width="6.9" height="13.2" fill="#e2e2e2"/><rect x="493.39" y="419.91" width="6.9" height="13.2" fill="#b0b0b0"/><rect x="501.38" y="419.91" width="6.9" height="13.2" fill="#e2e2e2"/><rect x="509.37" y="419.91" width="6.9" height="13.2" fill="#e2e2e2"/><rect x="6.00" y="434.41" width="6.9" height="13.2" fill="#e2e2e2"/><rect x="13.99" y="434.41" width="6.9" height="13.2" fill="#e2e2e2"/><rect x="21.98" y="434.41" width="6.9" height="13.2" fill="#e2e2e2"/><rect x="29.97" y="434.41" width="6.9" height="13.2" fill="#e2e2e2"/><rect x="37.96" y="434.41" width="6.9" height="13.2" fill="#e2e2e2"/><rect x="45.95" y="434.41" width="6.9" height="13.2" fill="#b0b0b0"/><rect x="53.94" y="434.41" width="6.9" height="13.2" fill="#e2e2e2"/><rect x="61.93" y="434.41" width="6.9" height="13.2" fill="#e2e2e2"/><rect x="69.92" y="434.41" width="6.9" height="13.2" fill="#e2e2e2"/><rect x="77.91" y="434.41" width="6.9" height="13.2" fill="#e2e2e2"/><rect x="85.90" y="434.41" width="6.9" height="13.2" fill="#e2e2e2"/><rect x="93.89" y="434.41" width="6.9" height="13.2" fill="#b0b0b0"/><rect x="101.88" y="434.41" width="6.9" height="13.2" fill="#e2e2e2"/><rect x="109.87" y="434.41" width="6.9" height="13.2" fill="#e2e2e2"/><rect x="117.86" y="434.41" width="6.9" height="13.2" fill="#e2e2e2"/><rect x="125.85" y="434.41" width="6.9" height="13.2" fill="#e2e2e2"/><rect x="133.84" y="434.41" width="6.9" height="13.2" fill="#e2e2e2"/><rect x="141.83" y="434.41" width="6.9" height="13.2" fill="#b0b0b0"/><rect x="149.82" y="434.41" width="6.9" height="13.2" fill="#e2e2e2"/><rect x="157.81" y="434.41" width="6.9" height="13.2" fill="#e2e2e2"/><rect x="165.80" y="434.41" width="6.9" height="13.2" fill="#e2e2e2"/><rect x="173.79" y="434.41" width="6.9" height="13.2" fill="#e2e2e2"/><rect x="181.78" y="434.41" width="6.9" height="13.2" fill="#e2e2e2"/><rect x="189.77" y="434.41" width="6.9" height="13.2" fill="#b0b0b0"/><rect x="197.76" y="434.41" width="6.9" height="13.2" fill="#e2e2e2"/><rect x="205.75" y="434.41" width="6.9" height="13.2" fill="#e2e2e2"/><rect x="213.74" y="434.41" width="6.9" height="13.2" fill="#e2e2e2"/><rect x="221.73" y="434.41" width="6.9" height="13.2" fill="#e2e2e2"/><rect x="229.72" y="434.41" width="6.9" height="13.2" fill="#e2e2e2"/><rect x="237.71" y="434.41" width="6.9" height="13.2" fill="#b0b0b0"/><rect x="245.70" y="434.41" width="6.9" height="13.2" fill="#e2e2e2"/><rect x="253.69" y="434.41" width="6.9" height="13.2" fill="#e2e2e2"/><rect x="261.68" y="434.41" width="6.9" height="13.2" fill="#e2e2e2"/><rect x="269.67" y="434.41" width="6.9" height="13.2" fill="#e2e2e2"/><rect x="277.66" y="434.41" width="6.9" height="13.2" fill="#e2e2e2"/><rect x="285.65" y="434.41" width="6.9" height="13.2" fill="#b0b0b0"/><rect x="293.64" y="434.41" width="6.9" height="13.2" fill="#e2e2e2"/><rect x="301.63" y="434.41" width="6.9" height="13.2" fill="#e2e2e2"/><rect x="309.62" y="434.41" width="6.9" height="13.2" fill="#e2e2e2"/><rect x="317.61" y="434.41" width="6.9" height="13.2" fill="#e2e2e2"/><rect x="325.60" y="434.41" width="6.9" height="13.2" fill="#e2e2e2"/><rect x="333.59" y="434.41" width="6.9" height="13.2" fill="#e2e2e2"/><rect x="341.58" y="434.41" width="6.9" height="13.2" fill="#b0b0b0"/><rect x="349.57" y="434.41" width="6.9" height="13.2" fill="#e2e2e2"/><rect x="357.56" y="434.41" width="6.9" height="13.2" fill="#e2e2e2"/><rect x="365.55" y="434.41" width="6.9" height="13.2" fill="#e2e2e2"/><rect x="373.54" y="434.41" width="6.9" height="13.2" fill="#e2e2e2"/><rect x="381.53" y="434.41" width="6.9" height="13.2" fill="#b0b0b0"/><rect x="389.52" y="434.41" width="6.9" height="13.2" fill="#e2e2e2"/><rect x="397.51" y="434.41" width="6.9" height="13.2" fill="#e2e2e2"/><rect x="405.50" y="434.41" width="6.9" height="13.2" fill="#e2e2e2"/><rect x="413.49" y="434.41" width="6.9" height="13.2" fill="#e2e2e2"/><rect x="421.48" y="434.41" width="6.9" height="13.2" fill="#e2e2e2"/><rect x="429.47" y="434.41" width="6.9" height="13.2" fill="#b0b0b0"/><rect x="437.46" y="434.41" width="6.9" height="13.2" fill="#e2e2e2"/><rect x="445.45" y="434.41" width="6.9" height="13.2" fill="#e2e2e2"/><rect x="453.44" y="434.41" width="6.9" height="13.2" fill="#e2e2e2"/><rect x="461.43" y="434.41" width="6.9" height="13.2" fill="#e2e2e2"/><rect x="469.42" y="434.41" width="6.9" height="13.2" fill="#e2e2e2"/><rect x="477.41" y="434.41" width="6.9" height="13.2" fill="#e2e2e2"/><rect x="485.40" y="434.41" width="6.9" height="13.2" fill="#b0b0b0"/><rect x="493.39" y="434.41" width="6.9" height="13.2" fill="#e2e2e2"/><rect x="501.38" y="434.41" width="6.9" height="13.2" fill="#e2e2e2"/><rect x="509.37" y="434.41" width="6.9" height="13.2" fill="#e2e2e2"/><rect x="6.00" y="448.90" width="6.9" height="13.2" fill="#e2e2e2"/><rect x="13.99" y="448.90" width="6.9" height="13.2" fill="#e2e2e2"/><rect x="21.98" y="448.90" width="6.9" height="13.2" fill="#e2e2e2"/><rect x="29.97" y="448.90" width="6.9" height="13.2" fill="#b0b0b0"/><rect x="37.96" y="448.90" width="6.9" height="13.2" fill="#e2e2e2"/><rect x="45.95" y="448.90" width="6.9" height="13.2" fill="#e2e2e2"/><rect x="53.94" y="448.90" width="6.9" height="13.2" fill="#e2e2e2"/><rect x="61.93" y="448.90" width="6.9" height="13.2" fill="#e2e2e2"/><rect x="69.92" y="448.90" width="6.9" height="13.2" fill="#e2e2e2"/><rect x="77.91" y="448.90" width="6.9" height="13.2" fill="#e2e2e2"/><rect x="85.90" y="448.90" width="6.9" height="13.2" fill="#b0b0b0"/><rect x="93.89" y="448.90" width="6.9" height="13.2" fill="#e2e2e2"/><rect x="101.88" y="448.90" width="6.9" height="13.2" fill="#e2e2e2"/><rect x="109.87" y="448.90" width="6.9" height="13.2" fill="#e2e2e2"/><rect x="117.86" y="448.90" width="6.9" height="13.2" fill="#e2e2e2"/><rect x="125.85" y="448.90" width="6.9" height="13.2" fill="#e2e2e2"/><rect x="133.84" y="448.90" width="6.9" height="13.2" fill="#b0b0b0"/><rect x="141.83" y="448.90" width="6.9" height="13.2" fill="#e2e2e2"/><rect x="149.82" y="448.90" width="6.9" height="13.2" fill="#e2e2e2"/><rect x="157.81" y="448.90" width="6.9" height="13.2" fill="#e2e2e2"/><rect x="165.80" y="448.90" width="6.9" height="13.2" fill="#e2e2e2"/><rect x="173.79" y="448.90" width="6.9" height="13.2" fill="#e2e2e2"/><rect x="181.78" y="448.90" width="6.9" height="13.2" fill="#b0b0b0"/><rect x="189.77" y="448.90" width="6.9" height="13.2" fill="#e2e2e2"/><rect x="197.76" y="448.90" width="6.9" height="13.2" fill="#e2e2e2"/><rect x="205.75" y="448.90" width="6.9" height="13.2" fill="#e2e2e2"/><rect x="213.74" y="448.90" width="6.9" height="13.2" fill="#e2e2e2"/><rect x="221.73" y="448.90" width="6.9" height="13.2" fill="#e2e2e2"/><rect x="229.72" y="448.90" width="6.9" height="13.2" fill="#b0b0b0"/><rect x="237.71" y="448.90" width="6.9" height="13.2" fill="#e2e2e2"/><rect x="245.70" y="448.90" width="6.9" height="13.2" fill="#e2e2e2"/><rect x="253.69" y="448.90" width="6.9" height="13.2" fill="#e2e2e2"/><rect x="261.68" y="448.90" width="6.9" height="13.2" fill="#e2e2e2"/><rect x="269.67" y="448.90" width="6.9" height="13.2" fill="#e2e2e2"/><rect x="277.66" y="448.90" width="6.9" height="13.2" fill="#b0b0b0"/><rect x="285.65" y="448.90" width="6.9" height="13.2" fill="#e2e2e2"/><rect x="293.64" y="448.90" width="6.9" height="13.2" fill="#e2e2e2"/><rect x="301.63" y="448.90" width="6.9" height="13.2" fill="#e2e2e2"/><rect x="309.62" y="448.90" width="6.9" height="13.2" fill="#e2e2e2"/><rect x="317.61" y="448.90" width="6.9" height="13.2" fill="#e2e2e2"/><rect x="325.60" y="448.90" width="6.9" height="13.2" fill="#b0b0b0"/><rect x="333.59" y="448.90" width="6.9" height="13.2" fill="#e2e2e2"/><rect x="341.58" y="448.90" width="6.9" height="13.2" fill="#e2e2e2"/><rect x="349.57" y="448.90" width="6.9" height="13.2" fill="#e2e2e2"/><rect x="357.56" y="448.90" width="6.9" height="13.2" fill="#e2e2e2"/><rect x="365.55" y="448.90" width="6.9" height="13.2" fill="#e2e2e2"/><rect x="373.54" y="448.90" width="6.9" height="13.2" fill="#b0b0b0"/><rect x="381.53" y="448.90" width="6.9" height="13.2" fill="#e2e2e2"/><rect x="389.52" y="448.90" width="6.9" height="13.2" fill="#e2e2e2"/><rect x="397.51" y="448.90" width="6.9" height="13.2" fill="#e2e2e2"/><rect x="405.50" y="448.90" width="6.9" height="13.2" fill="#e2e2e2"/><rect x="413.49" y="448.90" width="6.9" height="13.2" fill="#e2e2e2"/><rect x="421.48" y="448.90" width="6.9" height="13.2" fill="#b0b0b0"/><rect x="429.47" y="448.90" width="6.9" height="13.2" fill="#e2e2e2"/><rect x="437.46" y="448.90" width="6.9" height="13.2" fill="#e2e2e2"/><rect x="445.45" y="448.90" width="6.9" height="13.2" fill="#e2e2e2"/><rect x="453.44" y="448.90" width="6.9" height="13.2" fill="#e2e2e2"/><rect x="461.43" y="448.90" width="6.9" height="13.2" fill="#e2e2e2"/><rect x="469.42" y="448.90" width="6.9" height="13.2" fill="#b0b0b0"/><rect x="477.41" y="448.90" width="6.9" height="13.2" fill="#e2e2e2"/><rect x="485.40" y="448.90" width="6.9" height="13.2" fill="#e2e2e2"/><rect x="493.39" y="448.90" width="6.9" height="13.2" fill="#e2e2e2"/><rect x="501.38" y="448.90" width="6.9" height="13.2" fill="#e2e2e2"/><rect x="509.37" y="448.90" width="6.9" height="13.2" fill="#e2e2e2"/><rect x="6.00" y="463.40" width="6.9" height="13.2" fill="#e2e2e2"/><rect x="13.99" y="463.40" width="6.9" height="13.2" fill="#e2e2e2"/><rect x="21.98" y="463.40" width="6.9" height="13.2" fill="#e2e2e2"/><rect x="29.97" y="463.40" width="6.9" height="13.2" fill="#e2e2e2"/><rect x="37.96" y="463.40" width="6.9" height="13.2" fill="#e2e2e2"/><rect x="45.95" y="463.40" width="6.9" height="13.2" fill="#e2e2e2"/><rect x="53.94" y="463.40" width="6.9" height="13.2" fill="#e2e2e2"/><rect x="61.93" y="463.40" width="6.9" height="13.2" fill="#e2e2e2"/><rect x="69.92" y="463.40" width="6.9" height="13.2" fill="#b0b0b0"/><rect x="77.91" y="463.40" width="6.9" height="13.2" fill="#e2e2e2"/><rect x="85.90" y="463.40" width="6.9" height="13.2" fill="#e2e2e2"/><rect x="93.89" y="463.40" width="6.9" height="13.2" fill="#e2e2e2"/><rect x="101.88" y="463.40" width="6.9" height="13.2" fill="#e2e2e2"/><rect x="109.87" y="463.40" width="6.9" height="13.2" fill="#e2e2e2"/><rect x="117.86" y="463.40" width="6.9" height="13.2" fill="#b0b0b0"/><rect x="125.85" y="463.40" width="6.9" height="13.2" fill="#e2e2e2"/><rect x="133.84" y="463.40" width="6.9" height="13.2" fill="#e2e2e2"/><rect x="141.83" y="463.40" width="6.9" height="13.2" fill="#e2e2e2"/><rect x="149.82" y="463.40" width="6.9" height="13.2" fill="#e2e2e2"/><rect x="157.81" y="463.40" width="6.9" height="13.2" fill="#e2e2e2"/><rect x="165.80" y="463.40" width="6.9" height="13.2" fill="#b0b0b0"/><rect x="173.79" y="463.40" width="6.9" height="13.2" fill="#e2e2e2"/><rect x="181.78" y="463.40" width="6.9" height="13.2" fill="#e2e2e2"/><rect x="189.77" y="463.40" width="6.9" height="13.2" fill="#e2e2e2"/><rect x="197.76" y="463.40" width="6.9" height="13.2" fill="#e2e2e2"/><rect x="205.75" y="463.40" width="6.9" height="13.2" fill="#e2e2e2"/><rect x="213.74" y="463.40" width="6.9" height="13.2" fill="#e2e2e2"/><rect x="221.73" y="463.40" width="6.9" height="13.2" fill="#b0b0b0"/><rect x="229.72" y="463.40" width="6.9" height="13.2" fill="#e2e2e2"/><rect x="237.71" y="463.40" width="6.9" height="13.2" fill="#e2e2e2"/><rect x="245.70" y="463.40" width="6.9" height="13.2" fill="#e2e2e2"/><rect x="253.69" y="463.40" width="6.9" height="13.2" fill="#e2e2e2"/><rect x="261.68" y="463.40" width="6.9" height="13.2" fill="#e2e2e2"/><rect x="269.67" y="463.40" width="6.9" height="13.2" fill="#b0b0b0"/><rect x="277.66" y="463.40" width="6.9" height="13.2" fill="#e2e2e2"/><rect x="285.65" y="463.40" width="6.9" height="13.2" fill="#e2e2e2"/><rect x="293.64" y="463.40" width="6.9" height="13.2" fill="#e2e2e2"/><rect x="301.63" y="463.40" width="6.9" height="13.2" fill="#e2e2e2"/><rect x="309.62" y="463.40" width="6.9" height="13.2" fill="#b0b0b0"/><rect x="317.61" y="463.40" width="6.9" height="13.2" fill="#e2e2e2"/><rect x="325.60" y="463.40" width="6.9" height="13.2" fill="#e2e2e2"/><rect x="333.59" y="463.40" width="6.9" height="13.2" fill="#e2e2e2"/><rect x="341.58" y="463.40" width="6.9" height="13.2" fill="#e2e2e2"/><rect x="349.57" y="463.40" width="6.9" height="13.2" fill="#e2e2e2"/><rect x="357.56" y="463.40" width="6.9" height="13.2" fill="#e2e2e2"/><rect x="365.55" y="463.40" width="6.9" height="13.2" fill="#b0b0b0"/><rect x="373.54" y="463.40" width="6.9" height="13.2" fill="#e2e2e2"/><rect x="381.53" y="463.40" width="6.9" height="13.2" fill="#e2e2e2"/><rect x="389.52" y="463.40" width="6.9" height="13.2" fill="#e2e2e2"/><rect x="397.51" y="463.40" width="6.9" height="13.2" fill="#e2e2e2"/><rect x="405.50" y="463.40" width="6.9" height="13.2" fill="#e2e2e2"/><rect x="413.49" y="463.40" width="6.9" height="13.2" fill="#b0b0b0"/><rect x="421.48" y="463.40" width="6.9" height="13.2" fill="#e2e2e2"/><rect x="429.47" y="463.40" width="6.9" height="13.2" fill="#e2e2e2"/><rect x="437.46" y="463.40" width="6.9" height="13.2" fill="#e2e2e2"/><rect x="445.45" y="463.40" width="6.9" height="13.2" fill="#e2e2e2"/><rect x="453.44" y="463.40" width="6.9" height="13.2" fill="#e2e2e2"/><rect x="461.43" y="463.40" width="6.9" height="13.2" fill="#b0b0b0"/><rect x="469.42" y="463.40" width="6.9" height="13.2" fill="#e2e2e2"/><rect x="477.41" y="463.40" width="6.9" height="13.2" fill="#e2e2e2"/><rect x="485.40" y="463.40" width="6.9" height="13.2" fill="#e2e2e2"/><rect x="493.39" y="463.40" width="6.9" height="13.2" fill="#e2e2e2"/><rect x="501.38" y="463.40" width="6.9" height="13.2" fill="#e2e2e2"/><rect x="509.37" y="463.40" width="6.9" height="13.2" fill="#b0b0b0"/><rect x="6.00" y="477.90" width="6.9" height="13.2" fill="#e2e2e2"/><rect x="13.99" y="477.90" width="6.9" height="13.2" fill="#e2e2e2"/><rect x="21.98" y="477.90" width="6.9" height="13.2" fill="#b0b0b0"/><rect x="29.97" y="477.90" width="6.9" height="13.2" fill="#e2e2e2"/><rect x="37.96" y="477.90" width="6.9" height="13.2" fill="#e2e2e2"/><rect x="45.95" y="477.90" width="6.9" height="13.2" fill="#e2e2e2"/><rect x="53.94" y="477.90" width="6.9" height="13.2" fill="#e2e2e2"/><rect x="61.93" y="477.90" width="6.9" height="13.2" fill="#b0b0b0"/><rect x="69.92" y="477.90" width="6.9" height="13.2" fill="#e2e2e2"/><rect x="77.91" y="477.90" width="6.9" height="13.2" fill="#e2e2e2"/><rect x="85.90" y="477.90" width="6.9" height="13.2" fill="#e2e2e2"/><rect x="93.89" y="477.90" width="6.9" height="13.2" fill="#e2e2e2"/><rect x="101.88" y="477.90" width="6.9" height="13.2" fill="#e2e2e2"/><rect x="109.87" y="477.90" width="6.9" height="13.2" fill="#b0b0b0"/><rect x="117.86" y="477.90" width="6.9" height="13.2" fill="#e2e2e2"/><rect x="125.85" y="477.90" width="6.9" height="13.2" fill="#e2e2e2"/><rect x="133.84" y="477.90" width="6.9" height="13.2" fill="#e2e2e2"/><rect x="141.83" y="477.90" width="6.9" height="13.2" fill="#e2e2e2"/><rect x="149.82" y="477.90" width="6.9" height="13.2" fill="#e2e2e2"/><rect x="157.81" y="477.90" width="6.9" height="13.2" fill="#b0b0b0"/><rect x="165.80" y="477.90" width="6.9" height="13.2" fill="#e2e2e2"/><rect x="173.79" y="477.90" width="6.9" height="13.2" fill="#e2e2e2"/><rect x="181.78" y="477.90" width="6.9" height="13.2" fill="#e2e2e2"/><rect x="189.77" y="477.90" width="6.9" height="13.2" fill="#e2e2e2"/><rect x="197.76" y="477.90" width="6.9" height="13.2" fill="#e2e2e2"/><rect x="205.75" y="477.90" width="6.9" height="13.2" fill="#b0b0b0"/><rect x="213.74" y="477.90" width="6.9" height="13.2" fill="#e2e2e2"/><rect x="221.73" y="477.90" width="6.9" height="13.2" fill="#e2e2e2"/><rect x="229.72" y="477.90" width="6.9" height="13.2" fill="#e2e2e2"/><rect x="237.71" y="477.90" width="6.9" height="13.2" fill="#e2e2e2"/><rect x="245.70" y="477.90" width="6.9" height="13.2" fill="#e2e2e2"/><rect x="253.69" y="477.90" width="6.9" height="13.2" fill="#b0b0b0"/><rect x="261.68" y="477.90" width="6.9" height="13.2" fill="#e2e2e2"/><rect x="269.67" y="477.90" width="6.9" height="13.2" fill="#e2e2e2"/><rect x="277.66" y="477.90" width="6.9" height="13.2" fill="#e2e2e2"/><rect x="285.65" y="477.90" width="6.9" height="13.2" fill="#e2e2e2"/><rect x="293.64" y="477.90" width="6.9" height="13.2" fill="#e2e2e2"/><rect x="301.63" y="477.90" width="6.9" height="13.2" fill="#b0b0b0"/><rect x="309.62" y="477.90" width="6.9" height="13.2" fill="#e2e2e2"/><rect x="317.61" y="477.90" width="6.9" height="13.2" fill="#e2e2e2"/><rect x="325.60" y="477.90" width="6.9" height="13.2" fill="#e2e2e2"/><rect x="333.59" y="477.90" width="6.9" height="13.2" fill="#e2e2e2"/><rect x="341.58" y="477.90" width="6.9" height="13.2" fill="#e2e2e2"/><rect x="349.57" y="477.90" width="6.9" height="13.2" fill="#e2e2e2"/><rect x="357.56" y="477.90" width="6.9" height="13.2" fill="#b0b0b0"/><rect x="365.55" y="477.90" width="6.9" height="13.2" fill="#e2e2e2"/><rect x="373.54" y="477.90" width="6.9" height="13.2" fill="#e2e2e2"/><rect x="381.53" y="477.90" width="6.9" height="13.2" fill="#e2e2e2"/><rect x="389.52" y="477.90" width="6.9" height="13.2" fill="#e2e2e2"/><rect x="397.51" y="477.90" width="6.9" height="13.2" fill="#b0b0b0"/><rect x="405.50" y="477.90" width="6.9" height="13.2" fill="#e2e2e2"/><rect x="413.49" y="477.90" width="6.9" height="13.2" fill="#e2e2e2"/><rect x="421.48" y="477.90" width="6.9" height="13.2" fill="#e2e2e2"/><rect x="429.47" y="477.90" width="6.9" height="13.2" fill="#e2e2e2"/><rect x="437.46" y="477.90" width="6.9" height="13.2" fill="#e2e2e2"/><rect x="445.45" y="477.90" width="6.9" height="13.2" fill="#b0b0b0"/><rect x="453.44" y="477.90" width="6.9" height="13.2" fill="#e2e2e2"/><rect x="461.43" y="477.90" width="6.9" height="13.2" fill="#e2e2e2"/><rect x="469.42" y="477.90" width="6.9" height="13.2" fill="#e2e2e2"/><rect x="477.41" y="477.90" width="6.9" height="13.2" fill="#e2e2e2"/><rect x="485.40" y="477.90" width="6.9" height="13.2" fill="#e2e2e2"/><rect x="493.39" y="477.90" width="6.9" height="13.2" fill="#e2e2e2"/><rect x="501.38" y="477.90" width="6.9" height="13.2" fill="#b0b0b0"/><rect x="509.37" y="477.90" width="6.9" height="13.2" fill="#e2e2e2"/><rect x="6.00" y="492.39" width="6.9" height="13.2" fill="#b0b0b0"/><rect x="13.99" y="492.39" width="6.9" height="13.2" fill="#e2e2e2"/><rect x="21.98" y="492.39" width="6.9" height="13.2" fill="#e2e2e2"/><rect x="29.97" y="492.39" width="6.9" height="13.2" fill="#e2e2e2"/><rect x="37.96" y="492.39" width="6.9" height="13.2" fill="#e2e2e2"/><rect x="45.95" y="492.39" width="6.9" height="13.2" fill="#b0b0b0"/><rect x="53.94" y="492.39" width="6.9" height="13.2" fill="#e2e2e2"/><rect x="61.93" y="492.39" width="6.9" height="13.2" fill="#e2e2e2"/><rect x="69.92" y="492.39" width="6.9" height="13.2" fill="#e2e2e2"/><rect x="77.91" y="492.39" width="6.9" height="13.2" fill="#e2e2e2"/><rect x="85.90" y="492.39" width="6.9" height="13.2" fill="#e2e2e2"/><rect x="93.89" y="492.39" width="6.9" height="13.2" fill="#b0b0b0"/><rect x="101.88" y="492.39" width="6.9" height="13.2" fill="#e2e2e2"/><rect x="109.87" y="492.39" width="6.9" height="13.2" fill="#e2e2e2"/><rect x="117.86" y="492.39" width="6.9" height="13.2" fill="#e2e2e2"/><rect x="125.85" y="492.39" width="6.9" height="13.2" fill="#e2e2e2"/><rect x="133.84" y="492.39" width="6.9" height="13.2" fill="#e2e2e2"/><rect x="141.83" y="492.39" width="6.9" height="13.2" fill="#e2e2e2"/><rect x="149.82" y="492.39" width="6.9" height="13.2" fill="#b0b0b0"/><rect x="157.81" y="492.39" width="6.9" height="13.2" fill="#e2e2e2"/><rect x="165.80" y="492.39" width="6.9" height="13.2" fill="#e2e2e2"/><rect x="173.79" y="492.39" width="6.9" height="13.2" fill="#e2e2e2"/><rect x="181.78" y="492.39" width="6.9" height="13.2" fill="#e2e2e2"/><rect x="189.77" y="492.39" width="6.9" height="13.2" fill="#e2e2e2"/><rect x="197.76" y="492.39" width="6.9" height="13.2" fill="#b0b0b0"/><rect x="205.75" y="492.39" width="6.9" height="13.2" fill="#e2e2e2"/><rect x="213.74" y="492.39" width="6.9" height="13.2" fill="#e2e2e2"/><rect x="221.73" y="492.39" width="6.9" height="13.2" fill="#e2e2e2"/><rect x="229.72" y="492.39" width="6.9" height="13.2" fill="#e2e2e2"/><rect x="237.71" y="492.39" width="6.9" height="13.2" fill="#e2e2e2"/><rect x="245.70" y="492.39" width="6.9" height="13.2" fill="#b0b0b0"/><rect x="253.69" y="492.39" width="6.9" height="13.2" fill="#e2e2e2"/><rect x="261.68" y="492.39" width="6.9" height="13.2" fill="#e2e2e2"/><rect x="269.67" y="492.39" width="6.9" height="13.2" fill="#e2e2e2"/><rect x="277.66" y="492.39" width="6.9" height="13.2" fill="#e2e2e2"/><rect x="285.65" y="492.39" width="6.9" height="13.2" fill="#e2e2e2"/><rect x="293.64" y="492.39" width="6.9" height="13.2" fill="#b0b0b0"/><rect x="301.63" y="492.39" width="6.9" height="13.2" fill="#e2e2e2"/><rect x="309.62" y="492.39" width="6.9" height="13.2" fill="#e2e2e2"/><rect x="317.61" y="492.39" width="6.9" height="13.2" fill="#e2e2e2"/><rect x="325.60" y="492.39" width="6.9" height="13.2" fill="#e2e2e2"/><rect x="333.59" y="492.39" width="6.9" height="13.2" fill="#e2e2e2"/><rect x="341.58" y="492.39" width="6.9" height="13.2" fill="#b0b0b0"/><rect x="349.57" y="492.39" width="6.9" height="13.2" fill="#e2e2e2"/><rect x="357.56" y="492.39" width="6.9" height="13.2" fill="#e2e2e2"/><rect x="365.55" y="492.39" width="6.9" height="13.2" fill="#e2e2e2"/><rect x="373.54" y="492.39" width="6.9" height="13.2" fill="#e2e2e2"/><rect x="381.53" y="492.39" width="6.9" height="13.2" fill="#e2e2e2"/><rect x="389.52" y="492.39" width="6.9" height="13.2" fill="#b0b0b0"/><rect x="397.51" y="492.39" width="6.9" height="13.2" fill="#e2e2e2"/><rect x="405.50" y="492.39" width="6.9" height="13.2" fill="#e2e2e2"/><rect x="413.49" y="492.39" width="6.9" height="13.2" fill="#e2e2e2"/><rect x="421.48" y="492.39" width="6.9" height="13.2" fill="#e2e2e2"/><rect x="429.47" y="492.39" width="6.9" height="13.2" fill="#e2e2e2"/><rect x="437.46" y="492.39" width="6.9" height="13.2" fill="#b0b0b0"/><rect x="445.45" y="492.39" width="6.9" height="13.2" fill="#e2e2e2"/><rect x="453.44" y="492.39" width="6.9" height="13.2" fill="#e2e2e2"/><rect x="461.43" y="492.39" width="6.9" height="13.2" fill="#e2e2e2"/><rect x="469.42" y="492.39" width="6.9" height="13.2" fill="#e2e2e2"/><rect x="477.41" y="492.39" width="6.9" height="13.2" fill="#e2e2e2"/><rect x="485.40" y="492.39" width="6.9" height="13.2" fill="#b0b0b0"/><rect x="493.39" y="492.39" width="6.9" height="13.2" fill="#e2e2e2"/><rect x="501.38" y="492.39" width="6.9" height="13.2" fill="#e2e2e2"/><rect x="509.37" y="492.39" width="6.9" height="13.2" fill="#e2e2e2"/><rect x="6.00" y="506.89" width="6.9" height="13.2" fill="#e2e2e2"/><rect x="13.99" y="506.89" width="6.9" height="13.2" fill="#e2e2e2"/><rect x="21.98" y="506.89" width="6.9" height="13.2" fill="#e2e2e2"/><rect x="29.97" y="506.89" width="6.9" height="13.2" fill="#e2e2e2"/><rect x="37.96" y="506.89" width="6.9" height="13.2" fill="#b0b0b0"/><rect x="45.95" y="506.89" width="6.9" height="13.2" fill="#e2e2e2"/><rect x="53.94" y="506.89" width="6.9" height="13.2" fill="#e2e2e2"/><rect x="61.93" y="506.89" width="6.9" height="13.2" fill="#e2e2e2"/></svg><div style="position:absolute;left:519px;top:99.6px;width:12.3px;height:429.2px;background:#f0f0f0"></div><div style="position:absolute;left:519.5px;top:504.2px;width:10.5px;height:11.6px;background:#cdcdcd"></div><svg style="position:absolute;left:0;top:0" width="800" height="596"><path d="M522 109.5l2.9-3 2.9 3" fill="none" stroke="#505050" stroke-width="1.3"/><path d="M522 520.7l2.9 3 2.9-3" fill="none" stroke="#505050" stroke-width="1.3"/></svg><div style="position:absolute;left:46.2px;top:401.7px;width:95.6px;height:13.9px;background:#fff;border:1px solid #a8a8a8"></div><div style="position:absolute;left:532.5px;top:97.8px;width:211px;height:108.5px;background:#e1e1e1;border-left:1px solid #a8a8a8;border-top:1px solid #d4d4d4"></div><div style="position:absolute;left:532.5px;top:206.3px;width:211px;height:3.6px;background:#bcbcbc"></div><div style="position:absolute;left:532.5px;top:209.9px;width:211px;height:1.2px;background:#ececec"></div><div style="position:absolute;left:532.5px;top:211.1px;width:211px;height:166.1px;background:#e1e1e1;border-left:1px solid #a8a8a8;border-top:1px solid #a8a8a8"></div><div style="position:absolute;left:618.5px;top:212px;width:1.3px;height:163px;background:#f4f4f4"></div><div style="position:absolute;left:532.5px;top:374.8px;width:211px;height:2.4px;background:#f0f0f0"></div><div style="position:absolute;left:743px;top:94.5px;width:3.6px;height:441px;background:#f4f4f4"></div><div style="position:absolute;left:538px;top:112px;width:42.8px;height:15.7px;background:#f7f7f7"></div><div style="position:absolute;left:568.5px;top:113.5px;width:11px;height:13.2px;background:#eeeeee;border:1px solid #e0e0e0"></div><svg style="position:absolute;left:0;top:0" width="800" height="596"><path d="M572 117.8l2-2.2 2 2.2z" fill="#606060"/><path d="M572 121.5l2 2.2 2-2.2z" fill="#606060"/></svg><div style="position:absolute;left:538.9px;top:133.7px;width:8px;height:8.1px;background:#f4f4f4;border:1px solid #d0d0d0"></div><svg style="position:absolute;left:0;top:0" width="800" height="596"><path d="M540.5 137.5l2 2.2 3.5-4.5" fill="none" stroke="#c0c0c0" stroke-width="1.1"/></svg><div style="position:absolute;left:628.3px;top:101.3px;width:13.1px;height:8.6px;background:#e4e4e4;border:1px solid #bcbcbc"></div><div style="position:absolute;left:645.4px;top:101.3px;width:13.1px;height:8.6px;background:#e4e4e4;border:1px solid #c8c8c8"></div><div style="position:absolute;left:587px;top:111.6px;width:72px;height:16.1px;background:#fff;border:1px solid #a8a8a8"></div><div style="position:absolute;left:587px;top:130.2px;width:72px;height:16.1px;background:#e6e6e6;border:1px solid #b8b8b8"></div><div style="position:absolute;left:705.5px;top:101.3px;width:13px;height:8.6px;background:#e4e4e4;border:1px solid #bcbcbc"></div><div style="position:absolute;left:723.5px;top:101.3px;width:17.1px;height:8.8px;background:#dcdcdc;border:1px solid #cccccc"></div><div style="position:absolute;left:665.5px;top:111.8px;width:76px;height:15.5px;background:#fff;border:1px solid #a8a8a8"></div><div style="position:absolute;left:665.5px;top:130.5px;width:76px;height:15.6px;background:#fff;border:1px solid #a8a8a8"></div><div style="position:absolute;left:538.2px;top:155.2px;width:32.3px;height:25.5px;background:#e6eef6;border:2px solid #3f80c4"></div><div style="position:absolute;left:571px;top:155.2px;width:13.5px;height:25.5px;background:#e6e6e6;border:1px solid #d2d2d2"></div><svg style="position:absolute;left:0;top:0" width="800" height="596"><path d="M574.8 167.6h4.6l-2.3 2.4z" fill="#111"/></svg><div style="position:absolute;left:538.2px;top:186.7px;width:46.5px;height:15.7px;background:#e8e8e8;border:1px solid #c8c8c8"></div><svg style="position:absolute;left:0;top:0" width="800" height="596"><g transform="translate(613.9 175.9) rotate(45)"><rect x="-16.2" y="-16.2" width="32.4" height="32.4" fill="#e4e4e4" stroke="#4a4a4a" stroke-width="1.3"/><line x1="0" y1="-16.2" x2="0" y2="16.2" stroke="#454545" stroke-width="2.2"/><line x1="-16.2" y1="0" x2="16.2" y2="0" stroke="#454545" stroke-width="2.2"/></g><path d="M613.9 160.6l-3.2 4.4h6.4z" fill="#1e7a2e"/><path d="M613.9 191l-3.2-4.4h6.4z" fill="#1e7a2e"/><path d="M597.8 175.9l4.4-3.2v6.4z" fill="#1e7a2e"/><path d="M630 175.9l-4.4-3.2v6.4z" fill="#1e7a2e"/></svg><div style="position:absolute;left:675.1px;top:159.2px;width:9.6px;height:9.6px;background:#fff;border:1px solid #505050"></div><div style="position:absolute;left:693px;top:149.8px;width:48.8px;height:16.5px;background:#fff;border:1px solid #c0c0c0"></div><div style="position:absolute;left:693px;top:167px;width:48.8px;height:16.5px;background:#fff;border:1px solid #c0c0c0"></div><div style="position:absolute;left:646.5px;top:186.4px;width:95.3px;height:17px;background:#e6e6e6;border:1px solid #c4c4c4"></div><svg style="position:absolute;left:0;top:0" width="800" height="596"><path d="M676.8 163.6l2.7 2.7 4.2-5" fill="none" stroke="#333" stroke-width="1.1"/><path d="M733.2 157l2.6 2.6 2.6-2.6" fill="none" stroke="#555" stroke-width="1"/><path d="M733.2 174.2l2.6 2.6 2.6-2.6" fill="none" stroke="#555" stroke-width="1"/><path d="M733.2 193.6l2.6 2.6 2.6-2.6" fill="none" stroke="#555" stroke-width="1"/></svg><div style="position:absolute;left:553.4px;top:218.0px;width:7.8px;height:13.6px;background:#f4f4f4;border:1px solid #333;border-radius:1px"></div><div style="position:absolute;left:553.4px;top:240.6px;width:7.8px;height:13.6px;background:#b4b4b4;border:1px solid #333;border-radius:1px"></div><div style="position:absolute;left:553.4px;top:263.2px;width:7.8px;height:13.6px;background:#808080;border:1px solid #333;border-radius:1px"></div><div style="position:absolute;left:553.4px;top:285.8px;width:7.8px;height:13.6px;background:#10e010;border:1px solid #333;border-radius:1px"></div><div style="position:absolute;left:553.4px;top:308.4px;width:7.8px;height:13.6px;background:#ff8010;border:1px solid #333;border-radius:1px"></div><div style="position:absolute;left:553.4px;top:331.0px;width:7.8px;height:13.6px;background:#e60000;border:1px solid #333;border-radius:1px"></div><div style="position:absolute;left:553.2px;top:352.4px;width:7px;height:13.2px;background:#0000e0;border:1px solid #1a1a9a"></div><svg style="position:absolute;left:0;top:0" width="800" height="596"><path d="M554.4 355.6l4.6 6.4M559 355.6l-4.6 6.4" stroke="#fff" stroke-width="1.2"/></svg><div style="position:absolute;left:622.4px;top:216px;width:62.3px;height:14.2px;background:#000;border:1px solid #b0b0b0"></div><div style="position:absolute;left:622.4px;top:238px;width:62.3px;height:13.4px;background:#000;border:1px solid #b0b0b0"></div><div style="position:absolute;left:693.6px;top:216.7px;width:47px;height:14.1px;background:#000;border:1px solid #b0b0b0"></div><div style="position:absolute;left:625.1px;top:261.3px;width:7.6px;height:7.6px;background:#fff"></div><svg style="position:absolute;left:0;top:0" width="800" height="596"><circle cx="697.6" cy="244.9" r="4.6" fill="#fff" stroke="#777" stroke-width="0.9"/><circle cx="697.6" cy="261.4" r="4.6" fill="#fff" stroke="#777" stroke-width="0.9"/><circle cx="697.6" cy="261.4" r="2.3" fill="#222"/><circle cx="697.6" cy="278.5" r="4.6" fill="#fff" stroke="#777" stroke-width="0.9"/></svg><div style="position:absolute;left:622px;top:290px;width:120.3px;height:22px;background:#d3d3d3;border-top:1px solid #a8a8a8;border-left:1px solid #b8b8b8"></div><div style="position:absolute;left:628px;top:294px;width:17.8px;height:15px;background:#cfcfcf;border-top:1px solid #8a8a8a;border-left:1px solid #8a8a8a;border-bottom:1px solid #fafafa;border-right:1px solid #fafafa"></div><div style="position:absolute;left:658px;top:294.2px;width:17.7px;height:14.4px;background:#d0d0d0;border-top:1px solid #fafafa;border-left:1px solid #fafafa;border-bottom:1px solid #8a8a8a;border-right:1px solid #8a8a8a"></div><div style="position:absolute;left:688.3px;top:294.2px;width:17.7px;height:14.4px;background:#d0d0d0;border-top:1px solid #fafafa;border-left:1px solid #fafafa;border-bottom:1px solid #8a8a8a;border-right:1px solid #8a8a8a"></div><div style="position:absolute;left:717.2px;top:294.2px;width:17.7px;height:14.4px;background:#d0d0d0;border-top:1px solid #fafafa;border-left:1px solid #fafafa;border-bottom:1px solid #8a8a8a;border-right:1px solid #8a8a8a"></div><svg style="position:absolute;left:0;top:0" width="800" height="596"><path d="M632.5 296.8v9.8l11-4.9z" fill="#22bb22" stroke="#1a3a1a" stroke-width="0.9"/><path d="M671.5 296.8v9.8l-11-4.9z" fill="#8a8a8a" stroke="#333" stroke-width="0.9"/><path d="M689.5 297v9l4.5-4.5z" fill="#333"/><path d="M704.5 297v9l-4.5-4.5z" fill="#333"/><path d="M718.5 297v9l4.5-4.5z" fill="#333"/><rect x="724.5" y="297" width="2.2" height="9" fill="#222"/><path d="M733.5 297v9l-4.5-4.5z" fill="#333"/></svg><div style="position:absolute;left:622px;top:315.5px;width:120.3px;height:31.6px;background:#d3d3d3;border-top:1px solid #a8a8a8;border-left:1px solid #b8b8b8"></div><div style="position:absolute;left:622px;top:349.2px;width:120.3px;height:3.4px;background:#b8b8b8"></div><svg style="position:absolute;left:0;top:0" width="800" height="596"><circle cx="631.8" cy="324.1" r="4.6" fill="#fff" stroke="#777" stroke-width="0.9"/><circle cx="631.8" cy="324.1" r="2.3" fill="#222"/><circle cx="679" cy="324.1" r="4.6" fill="#fff" stroke="#777" stroke-width="0.9"/><circle cx="631.8" cy="339.9" r="4.6" fill="#fff" stroke="#777" stroke-width="0.9"/><circle cx="679" cy="339.9" r="4.6" fill="#fff" stroke="#777" stroke-width="0.9"/></svg><div style="position:absolute;left:625.2px;top:360.2px;width:9.6px;height:9.6px;background:#fff;border:1px solid #505050"></div><svg style="position:absolute;left:0;top:0" width="800" height="596"><path d="M626.8 364.6l2.7 2.7 4.2-5" fill="none" stroke="#333" stroke-width="1.1"/></svg><div style="position:absolute;left:664.1px;top:356.8px;width:76.5px;height:13.7px;background:#000"></div><div style="position:absolute;left:533.6px;top:377.2px;width:210.6px;height:152.8px;background:#fff;border:1px solid #a0a0a0"></div><div style="position:absolute;left:606.2px;top:378px;width:1px;height:150px;background:#ececec"></div><div style="position:absolute;left:650px;top:378px;width:1px;height:150px;background:#ececec"></div><div style="position:absolute;left:722.2px;top:378px;width:1px;height:150px;background:#ececec"></div><div style="position:absolute;left:534.6px;top:408.8px;width:208px;height:1px;background:#f3f3f3"></div><div style="position:absolute;left:534.6px;top:422px;width:208px;height:1px;background:#f3f3f3"></div><div style="position:absolute;left:534.6px;top:435.2px;width:208px;height:1px;background:#f3f3f3"></div><div style="position:absolute;left:534.6px;top:448.4px;width:208px;height:1px;background:#f3f3f3"></div><div style="position:absolute;left:534.6px;top:461.4px;width:208px;height:1px;background:#f3f3f3"></div><div style="position:absolute;left:534.6px;top:474.4px;width:208px;height:1px;background:#f3f3f3"></div><div style="position:absolute;left:534.6px;top:487.3px;width:208px;height:1px;background:#f3f3f3"></div><div style="position:absolute;left:534.6px;top:500.2px;width:208px;height:1px;background:#f3f3f3"></div><div style="position:absolute;left:534.6px;top:513.1px;width:208px;height:1px;background:#f3f3f3"></div><div style="position:absolute;left:534.6px;top:526px;width:208px;height:1px;background:#f3f3f3"></div><div style="position:absolute;left:746.5px;top:94.3px;width:51.3px;height:437px;background:#a9a9a9;border-left:1.5px solid #8c8c8c;border-top:1px solid #7a7a7a"></div><div style="position:absolute;left:746.5px;top:535px;width:51.3px;height:59px;background:#a9a9a9;border-left:1.5px solid #8c8c8c"></div><svg style="position:absolute;left:0;top:0" width="800" height="596"><circle cx="758.8" cy="106.5" r="4.3" fill="#d6d6d6" stroke="#bcbcbc" stroke-width="0.8"/><circle cx="758.8" cy="122.3" r="4.3" fill="#f2f2f2" stroke="#c4c4c4" stroke-width="0.8"/></svg><div style="position:absolute;left:753px;top:138.2px;width:14px;height:8.3px;background:#10e010;border:1px solid #3a5a3a"></div><div style="position:absolute;left:753px;top:160.6px;width:40px;height:15.3px;background:#e2e2e2"></div><div style="position:absolute;left:753px;top:206.5px;width:40px;height:14.1px;background:#e2e2e2"></div><div style="position:absolute;left:751px;top:447.2px;width:19.7px;height:9.8px;background:#a4a4a4;border:1.2px solid #4e4e4e;border-radius:2px"></div><div style="position:absolute;left:774px;top:447.2px;width:19.7px;height:9.8px;background:#a4a4a4;border:1.2px solid #4e4e4e;border-radius:2px"></div><div style="position:absolute;left:752.5px;top:498.4px;width:40.5px;height:14.5px;background:#e2e2e2"></div><div style="position:absolute;left:1.6px;top:534.5px;width:742.4px;height:59.5px;background:#f4fbf4;border-top:1px solid #a0a0a0"></div><div style="position:absolute;left:53px;top:535.5px;width:1px;height:58.5px;background:#e4ece4"></div><div style="position:absolute;left:1.6px;top:550.2px;width:732px;height:1px;background:#e6efe6"></div><div style="position:absolute;left:1.6px;top:564.9px;width:732px;height:1px;background:#e6efe6"></div><div style="position:absolute;left:1.6px;top:579.5px;width:732px;height:1px;background:#e6efe6"></div><div style="position:absolute;left:734px;top:535.5px;width:10px;height:58.5px;background:#f0f0f0"></div><svg style="position:absolute;left:0;top:0" width="800" height="596"><path d="M736.5 544.5l2.6-2.6 2.6 2.6" fill="none" stroke="#444" stroke-width="1.1"/><path d="M736.5 586l2.6 2.6 2.6-2.6" fill="none" stroke="#444" stroke-width="1.1"/></svg><div style="position:absolute;left:753px;top:542px;width:9.2px;height:8.6px;background:#fff;border:1px solid #404040"></div><div style="position:absolute;left:753px;top:558px;width:9.2px;height:9px;background:#fff;border:1px solid #404040"></div><svg style="position:absolute;left:0;top:0" width="800" height="596"><path d="M754.5 546l2.4 2.4 3.8-4.6" fill="none" stroke="#222" stroke-width="1.1"/></svg>
<div style="position:absolute;left:24px;top:8.00px;font:normal 9px/9px 'Liberation Sans',sans-serif;color:#fff;white-space:pre;transform:scaleX(0.9096);transform-origin:0 0;">Victoria 5.37 HDD/SSD | Device 2</div><div style="position:absolute;left:6px;top:25.00px;font:normal 9px/9px 'Liberation Sans',sans-serif;color:#1a1a1a;white-space:pre;transform:scaleX(0.9772);transform-origin:0 0;">Menu</div><div style="position:absolute;left:54.3px;top:25.00px;font:normal 9px/9px 'Liberation Sans',sans-serif;color:#1a1a1a;white-space:pre;transform:scaleX(0.8497);transform-origin:0 0;">Service</div><div style="position:absolute;left:114.2px;top:25.00px;font:normal 9px/9px 'Liberation Sans',sans-serif;color:#1a1a1a;white-space:pre;transform:scaleX(0.9758);transform-origin:0 0;">Actions</div><div style="position:absolute;left:175.3px;top:25.00px;font:normal 9px/9px 'Liberation Sans',sans-serif;color:#1a1a1a;white-space:pre;transform:scaleX(0.9340);transform-origin:0 0;">Language</div><div style="position:absolute;left:245.3px;top:25.00px;font:normal 9px/9px 'Liberation Sans',sans-serif;color:#1a1a1a;white-space:pre;transform:scaleX(0.9225);transform-origin:0 0;">Settings</div><div style="position:absolute;left:662.5px;top:25.00px;font:normal 9px/9px 'Liberation Sans',sans-serif;color:#1a1a1a;white-space:pre;transform:scaleX(0.8644);transform-origin:0 0;">Help</div><div style="position:absolute;left:732.2px;top:26.00px;font:normal 9px/9px 'Liberation Sans',sans-serif;color:#1a1a1a;white-space:pre;transform:scaleX(0.9427);transform-origin:0 0;">View Buffer Live</div><div style="position:absolute;left:29.7px;top:39.00px;font:normal 9.5px/9.5px 'Liberation Sans',sans-serif;color:#4cb8a8;white-space:pre;transform:scaleX(0.9060);transform-origin:0 0;">FUJITSU MHY2200BH</div><div style="position:absolute;left:172.5px;top:39.00px;font:normal 9.5px/9.5px 'Liberation Sans',sans-serif;color:#e8e8e8;white-space:pre;transform:scaleX(0.9176);transform-origin:0 0;">SN: K43JT79258PU</div><div style="position:absolute;left:278px;top:39.00px;font:normal 9.5px/9.5px 'Liberation Sans',sans-serif;color:#e8e8e8;white-space:pre;transform:scaleX(0.9474);transform-origin:0 0;">x</div><div style="position:absolute;left:307.5px;top:39.00px;font:normal 9.5px/9.5px 'Liberation Sans',sans-serif;color:#40c040;white-space:pre;transform:scaleX(0.9794);transform-origin:0 0;">Fw: 0000000B</div><div style="position:absolute;left:542.5px;top:39.00px;font:normal 9.5px/9.5px 'Liberation Sans',sans-serif;color:#d8d08a;white-space:pre;transform:scaleX(0.9467);transform-origin:0 0;">390721968 LBA (200 GB)</div><div style="position:absolute;left:4.5px;top:82.00px;font:normal 9px/9px 'Liberation Sans',sans-serif;color:#1a1a1a;white-space:pre;transform:scaleX(0.9919);transform-origin:0 0;">Drive Info</div><div style="position:absolute;left:62.7px;top:82.00px;font:normal 9px/9px 'Liberation Sans',sans-serif;color:#1a1a1a;white-space:pre;transform:scaleX(0.9469);transform-origin:0 0;">S.M.A.R.T</div><div style="position:absolute;left:119.3px;top:82.00px;font:normal 9px/9px 'Liberation Sans',sans-serif;color:#1a1a1a;white-space:pre;transform:scaleX(0.9221);transform-origin:0 0;">SMART Logs</div><div style="position:absolute;left:181.2px;top:82.00px;font:normal 9px/9px 'Liberation Sans',sans-serif;color:#1a1a1a;white-space:pre;transform:scaleX(0.9718);transform-origin:0 0;">Test &amp; Repair</div><div style="position:absolute;left:246.8px;top:82.00px;font:normal 9px/9px 'Liberation Sans',sans-serif;color:#1a1a1a;white-space:pre;transform:scaleX(0.9400);transform-origin:0 0;">Disk Editor</div><div style="position:absolute;left:709.7px;top:82.00px;font:normal 9px/9px 'Liberation Sans',sans-serif;color:#1a1a1a;white-space:pre;transform:scaleX(0.8935);transform-origin:0 0;">Pause</div><div style="position:absolute;left:758.7px;top:82.00px;font:normal 9px/9px 'Liberation Sans',sans-serif;color:#1a1a1a;white-space:pre;transform:scaleX(0.9163);transform-origin:0 0;">Break All</div><div style="position:absolute;left:48.2px;top:405.00px;font:normal 8.8px/8.8px 'Liberation Sans',sans-serif;color:#222;white-space:pre;transform:scaleX(0.8902);transform-origin:0 0;">LBA  2720768 ... 2721023</div><div style="position:absolute;left:539px;top:102.00px;font:normal 8.5px/8.5px 'Liberation Sans',sans-serif;color:#222;white-space:pre;transform:scaleX(0.9025);transform-origin:0 0;">[ End time ]</div><div style="position:absolute;left:539.5px;top:116.00px;font:normal 9.5px/9.5px 'Liberation Sans',sans-serif;color:#8a8a8a;white-space:pre;transform:scaleX(0.9464);transform-origin:0 0;">12:00</div><div style="position:absolute;left:551.3px;top:134.00px;font:normal 9.5px/9.5px 'Liberation Sans',sans-serif;color:#959595;white-space:pre;transform:scaleX(0.8988);transform-origin:0 0;">Timer</div><div style="position:absolute;left:586.5px;top:102.00px;font:normal 8.5px/8.5px 'Liberation Sans',sans-serif;color:#222;white-space:pre;transform:scaleX(0.8832);transform-origin:0 0;">[Start LBA]</div><div style="position:absolute;left:629.5px;top:104.00px;font:bold 6.5px/6.5px 'Liberation Sans',sans-serif;color:#111;white-space:pre;transform:scaleX(0.7456);transform-origin:0 0;">CUR</div><div style="position:absolute;left:650px;top:103.00px;font:normal 7.5px/7.5px 'Liberation Sans',sans-serif;color:#111;white-space:pre;transform:scaleX(0.9590);transform-origin:0 0;">0</div><div style="position:absolute;left:589px;top:114.00px;font:bold 9.5px/9.5px 'Liberation Sans',sans-serif;color:#1a1a6e;white-space:pre;transform:scaleX(0.9842);transform-origin:0 0;">0</div><div style="position:absolute;left:589px;top:133.00px;font:normal 9.5px/9.5px 'Liberation Sans',sans-serif;color:#9a9a9a;white-space:pre;transform:scaleX(0.9842);transform-origin:0 0;">0</div><div style="position:absolute;left:664.5px;top:102.00px;font:normal 8.5px/8.5px 'Liberation Sans',sans-serif;color:#222;white-space:pre;transform:scaleX(0.9014);transform-origin:0 0;">[End LBA]</div><div style="position:absolute;left:706.7px;top:104.00px;font:bold 6.5px/6.5px 'Liberation Sans',sans-serif;color:#111;white-space:pre;transform:scaleX(0.7456);transform-origin:0 0;">CUR</div><div style="position:absolute;left:724.8px;top:103.00px;font:normal 7.5px/7.5px 'Liberation Sans',sans-serif;color:#222;white-space:pre;transform:scaleX(0.8922);transform-origin:0 0;">MAX</div><div style="position:absolute;left:667px;top:114.00px;font:bold 9.5px/9.5px 'Liberation Sans',sans-serif;color:#1a1a78;white-space:pre;transform:scaleX(1.0830);transform-origin:0 0;">390721967</div><div style="position:absolute;left:667px;top:133.00px;font:bold 9.5px/9.5px 'Liberation Sans',sans-serif;color:#8a2020;white-space:pre;transform:scaleX(1.0815);transform-origin:0 0;">2852608</div><div style="position:absolute;left:543.8px;top:163.00px;font:bold 10px/10px 'Liberation Sans',sans-serif;color:#1a1aa0;white-space:pre;transform:scaleX(0.8535);transform-origin:0 0;">Scan</div><div style="position:absolute;left:549.2px;top:191.00px;font:bold 7.5px/7.5px 'Liberation Sans',sans-serif;color:#1a1a8a;white-space:pre;transform:scaleX(0.9559);transform-origin:0 0;">QUICK</div><div style="position:absolute;left:646.8px;top:150.00px;font:normal 7.5px/7.5px 'Liberation Sans',sans-serif;color:#222;white-space:pre;transform:scaleX(0.9984);transform-origin:0 0;">[ block size ]</div><div style="position:absolute;left:646.8px;top:160.00px;font:normal 7.5px/7.5px 'Liberation Sans',sans-serif;color:#222;white-space:pre;transform:scaleX(1.0553);transform-origin:0 0;">[ auto ]</div><div style="position:absolute;left:646.8px;top:174.00px;font:normal 7.5px/7.5px 'Liberation Sans',sans-serif;color:#222;white-space:pre;transform:scaleX(0.9820);transform-origin:0 0;">[ timeout,ms ]</div><div style="position:absolute;left:695px;top:154.00px;font:normal 9.5px/9.5px 'Liberation Sans',sans-serif;color:#222;white-space:pre;transform:scaleX(0.9464);transform-origin:0 0;">256</div><div style="position:absolute;left:695px;top:171.00px;font:normal 9.5px/9.5px 'Liberation Sans',sans-serif;color:#222;white-space:pre;transform:scaleX(0.9085);transform-origin:0 0;">10000</div><div style="position:absolute;left:649px;top:190.00px;font:bold 9.7px/9.7px 'Liberation Sans',sans-serif;color:#111;white-space:pre;transform:scaleX(1.0190);transform-origin:0 0;">End of test</div><div style="position:absolute;left:547.6999999999999px;top:224.00px;font:normal 9.6px/9.6px 'Liberation Sans',sans-serif;color:#4a9aa8;white-space:pre;transform:scaleX(0.6747);transform-origin:0 0;">5</div><div style="position:absolute;left:563.3px;top:224.00px;font:normal 10px/10px 'Liberation Sans',sans-serif;color:#222;white-space:pre;transform:scaleX(0.8855);transform-origin:0 0;">9283</div><div style="position:absolute;left:542.0px;top:246.00px;font:normal 9.6px/9.6px 'Liberation Sans',sans-serif;color:#4a9aa8;white-space:pre;transform:scaleX(0.8715);transform-origin:0 0;">20</div><div style="position:absolute;left:563.3px;top:246.00px;font:normal 10px/10px 'Liberation Sans',sans-serif;color:#222;white-space:pre;transform:scaleX(0.8766);transform-origin:0 0;">1861</div><div style="position:absolute;left:542.0px;top:269.00px;font:normal 9.6px/9.6px 'Liberation Sans',sans-serif;color:#4a9aa8;white-space:pre;transform:scaleX(0.8715);transform-origin:0 0;">50</div><div style="position:absolute;left:563.3px;top:269.00px;font:normal 10px/10px 'Liberation Sans',sans-serif;color:#222;white-space:pre;transform:scaleX(0.8631);transform-origin:0 0;">0</div><div style="position:absolute;left:536.5px;top:291.00px;font:normal 9.6px/9.6px 'Liberation Sans',sans-serif;color:#4a9aa8;white-space:pre;transform:scaleX(0.9246);transform-origin:0 0;">200</div><div style="position:absolute;left:563.3px;top:291.00px;font:normal 10px/10px 'Liberation Sans',sans-serif;color:#222;white-space:pre;transform:scaleX(0.8631);transform-origin:0 0;">0</div><div style="position:absolute;left:536.5px;top:314.00px;font:normal 9.6px/9.6px 'Liberation Sans',sans-serif;color:#4a9aa8;white-space:pre;transform:scaleX(0.9246);transform-origin:0 0;">600</div><div style="position:absolute;left:563.3px;top:314.00px;font:normal 10px/10px 'Liberation Sans',sans-serif;color:#222;white-space:pre;transform:scaleX(0.8631);transform-origin:0 0;">0</div><div style="position:absolute;left:540px;top:335.00px;font:normal 10px/10px 'Liberation Sans',sans-serif;color:#4a9aa8;white-space:pre;transform:scaleX(0.8904);transform-origin:0 0;">&gt;</div><div style="position:absolute;left:563.3px;top:336.00px;font:normal 10px/10px 'Liberation Sans',sans-serif;color:#222;white-space:pre;transform:scaleX(0.8631);transform-origin:0 0;">0</div><div style="position:absolute;left:539.0px;top:357.00px;font:normal 9.6px/9.6px 'Liberation Sans',sans-serif;color:#4a9aa8;white-space:pre;transform:scaleX(0.9618);transform-origin:0 0;">Err</div><div style="position:absolute;left:563.3px;top:357.00px;font:normal 10px/10px 'Liberation Sans',sans-serif;color:#e07070;white-space:pre;transform:scaleX(0.8631);transform-origin:0 0;">0</div><div style="position:absolute;left:627px;top:219.00px;font:bold 8.8px/8.8px 'Liberation Sans',sans-serif;color:#4cc8c8;white-space:pre;transform:scaleX(1.0287);transform-origin:0 0;">1,46 GB</div><div style="position:absolute;left:627px;top:241.00px;font:bold 8.8px/8.8px 'Liberation Sans',sans-serif;color:#44b844;white-space:pre;transform:scaleX(1.1430);transform-origin:0 0;">47 MB/s</div><div style="position:absolute;left:697.7px;top:219.00px;font:normal 11px/11px 'Liberation Sans',sans-serif;color:#e0e0e0;white-space:pre;transform:scaleX(0.9875);transform-origin:0 0;">0,7</div><div style="position:absolute;left:727px;top:219.00px;font:normal 11px/11px 'Liberation Sans',sans-serif;color:#e0e0e0;white-space:pre;transform:scaleX(1.0224);transform-origin:0 0;">%</div><div style="position:absolute;left:637.1px;top:261.00px;font:normal 9px/9px 'Liberation Sans',sans-serif;color:#9a9a9a;white-space:pre;transform:scaleX(0.9671);transform-origin:0 0;">DDD (API)</div><div style="position:absolute;left:706.1px;top:241.00px;font:normal 9.5px/9.5px 'Liberation Sans',sans-serif;color:#222;white-space:pre;transform:scaleX(0.9891);transform-origin:0 0;">Verify</div><div style="position:absolute;left:706.1px;top:256.00px;font:normal 9.5px/9.5px 'Liberation Sans',sans-serif;color:#222;white-space:pre;transform:scaleX(0.9159);transform-origin:0 0;">Read</div><div style="position:absolute;left:706.1px;top:273.00px;font:normal 9.5px/9.5px 'Liberation Sans',sans-serif;color:#222;white-space:pre;transform:scaleX(0.9958);transform-origin:0 0;">Write</div><div style="position:absolute;left:693.8px;top:297.00px;font:bold 11px/11px 'Liberation Sans',sans-serif;color:#111;white-space:pre;transform:scaleX(0.9227);transform-origin:0 0;">?</div><div style="position:absolute;left:640px;top:321.00px;font:normal 9.5px/9.5px 'Liberation Sans',sans-serif;color:#222;white-space:pre;transform:scaleX(0.9949);transform-origin:0 0;">Ignore</div><div style="position:absolute;left:686.8px;top:321.00px;font:normal 9.5px/9.5px 'Liberation Sans',sans-serif;color:#222;white-space:pre;transform:scaleX(0.9308);transform-origin:0 0;">Erase</div><div style="position:absolute;left:640px;top:336.00px;font:normal 9.5px/9.5px 'Liberation Sans',sans-serif;color:#222;white-space:pre;transform:scaleX(0.9437);transform-origin:0 0;">Remap</div><div style="position:absolute;left:686.8px;top:336.00px;font:normal 9.5px/9.5px 'Liberation Sans',sans-serif;color:#222;white-space:pre;transform:scaleX(0.9710);transform-origin:0 0;">Refresh</div><div style="position:absolute;left:638px;top:361.00px;font:bold 9.5px/9.5px 'Liberation Sans',sans-serif;color:#1a1a8a;white-space:pre;transform:scaleX(0.9115);transform-origin:0 0;">Grid</div><div style="position:absolute;left:664.6px;top:360.00px;font:normal 12px/12px 'Liberation Mono',sans-serif;color:#4e5c3c;white-space:pre;transform:scaleX(1.1977);transform-origin:0 0;">01:08:09</div><div style="position:absolute;left:539px;top:384.00px;font:normal 9px/9px 'Liberation Sans',sans-serif;color:#222;white-space:pre;transform:scaleX(0.9606);transform-origin:0 0;">Start LBA</div><div style="position:absolute;left:611px;top:384.00px;font:normal 9px/9px 'Liberation Sans',sans-serif;color:#222;white-space:pre;transform:scaleX(0.9088);transform-origin:0 0;">Block</div><div style="position:absolute;left:654px;top:384.00px;font:normal 9px/9px 'Liberation Sans',sans-serif;color:#222;white-space:pre;transform:scaleX(0.9997);transform-origin:0 0;">Comment</div><div style="position:absolute;left:767px;top:103.00px;font:normal 9px/9px 'Liberation Sans',sans-serif;color:#bcbcbc;white-space:pre;transform:scaleX(0.8962);transform-origin:0 0;">API</div><div style="position:absolute;left:767px;top:119.00px;font:normal 9px/9px 'Liberation Sans',sans-serif;color:#bcbcbc;white-space:pre;transform:scaleX(0.8385);transform-origin:0 0;">PIO</div><div style="position:absolute;left:762px;top:164.00px;font:normal 9.5px/9.5px 'Liberation Sans',sans-serif;color:#222;white-space:pre;transform:scaleX(0.9054);transform-origin:0 0;">Sleep</div><div style="position:absolute;left:759.5px;top:209.00px;font:normal 9.5px/9.5px 'Liberation Sans',sans-serif;color:#222;white-space:pre;transform:scaleX(1.0038);transform-origin:0 0;">Recall</div><div style="position:absolute;left:754.8px;top:449.00px;font:normal 7.5px/7.5px 'Liberation Sans',sans-serif;color:#cacaca;white-space:pre;transform:scaleX(0.9604);transform-origin:0 0;">WR</div><div style="position:absolute;left:778px;top:449.00px;font:normal 7.5px/7.5px 'Liberation Sans',sans-serif;color:#cacaca;white-space:pre;transform:scaleX(1.0155);transform-origin:0 0;">RD</div><div style="position:absolute;left:760px;top:501.00px;font:normal 9.5px/9.5px 'Liberation Sans',sans-serif;color:#222;white-space:pre;transform:scaleX(0.9469);transform-origin:0 0;">Passp</div><div style="position:absolute;left:8.4px;top:540.00px;font:normal 9.6px/9.6px 'Liberation Sans',sans-serif;color:#222;white-space:pre;transform:scaleX(0.9991);transform-origin:0 0;">11:37:13</div><div style="position:absolute;left:8.4px;top:554.00px;font:normal 9.6px/9.6px 'Liberation Sans',sans-serif;color:#222;white-space:pre;transform:scaleX(0.9991);transform-origin:0 0;">11:37:13</div><div style="position:absolute;left:8.4px;top:569.00px;font:normal 9.6px/9.6px 'Liberation Sans',sans-serif;color:#222;white-space:pre;transform:scaleX(0.9991);transform-origin:0 0;">11:37:13</div><div style="position:absolute;left:56.8px;top:540.00px;font:normal 9.6px/9.6px 'Liberation Sans',sans-serif;color:#c03a3a;white-space:pre;transform:scaleX(0.9817);transform-origin:0 0;">Command interrupted by user!</div><div style="position:absolute;left:57.9px;top:554.00px;font:normal 9.6px/9.6px 'Liberation Sans',sans-serif;color:#222;white-space:pre;transform:scaleX(0.9882);transform-origin:0 0;">*** Scan results: no warnings, no errors. Last block at 2852608 (1 GB), time 31 seconds.</div><div style="position:absolute;left:56.8px;top:569.00px;font:normal 9.6px/9.6px 'Liberation Sans',sans-serif;color:#3838a8;white-space:pre;transform:scaleX(0.9675);transform-origin:0 0;">Speed: Maximum 47 MB/s. Average 46 MB/s. Minimum 46 MB/s. 6 points.</div><div style="position:absolute;left:766px;top:542.00px;font:normal 9.5px/9.5px 'Liberation Sans',sans-serif;color:#111;white-space:pre;transform:scaleX(0.9101);transform-origin:0 0;">Sound</div><div style="position:absolute;left:766px;top:558.00px;font:normal 9.5px/9.5px 'Liberation Sans',sans-serif;color:#111;white-space:pre;transform:scaleX(1.0164);transform-origin:0 0;">Hints</div><div style="position:absolute;left:681.4px;top:572.00px;font:bold 16px/16px 'Liberation Sans',sans-serif;color:rgba(238,238,90,0.42);white-space:pre;transform:scaleX(1.3583);transform-origin:0 0;">MY</div><div style="position:absolute;left:718px;top:572.00px;font:bold 16px/16px 'Liberation Sans',sans-serif;color:rgba(255,255,255,0.5);white-space:pre;transform:scaleX(1.5097);transform-origin:0 0;">SKU</div><div style="position:absolute;left:770px;top:562.00px;font:bold 10px/10px 'Liberation Sans',sans-serif;color:rgba(238,238,90,0.6);white-space:pre;transform:scaleX(1.5652);transform-origin:0 0;">.ru</div>
</div></body></html>
